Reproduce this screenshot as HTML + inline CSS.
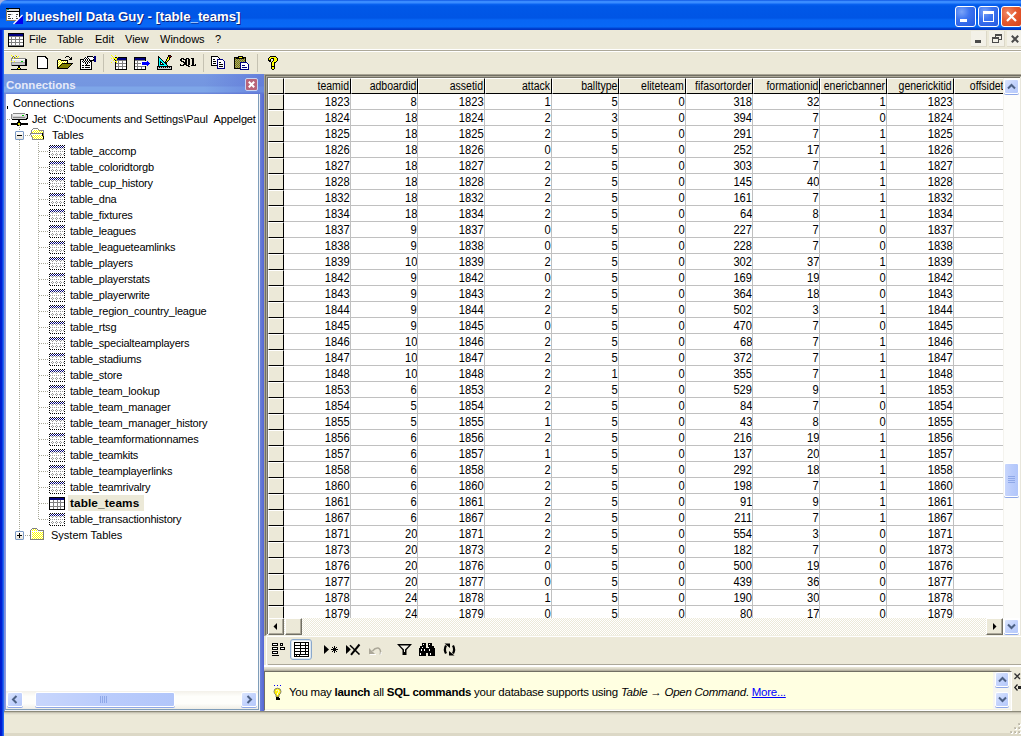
<!DOCTYPE html><html><head><meta charset="utf-8"><title>blueshell Data Guy</title><style>
*{margin:0;padding:0;box-sizing:border-box}
html,body{width:1021px;height:736px;overflow:hidden;background:#ECE9D8;font-family:"Liberation Sans",sans-serif;font-size:11px;color:#000}
.a{position:absolute}
.t{position:absolute;white-space:nowrap;line-height:16px}
svg{position:absolute;overflow:visible}
</style></head><body><div class="a" style="left:0;top:0;width:8px;height:8px;background:#A4B0DE"></div><div class="a" style="left:0;top:0;width:1021px;height:30px;border-top-left-radius:7px 6px;background:linear-gradient(180deg,#0044DA 0px,#3A8CFF 1px,#3A8CFF 3px,#0A64F2 4px,#0058E8 6px,#0055E5 18px,#0866F4 20px,#0868F6 27px,#0046D4 28px,#0030C0 30px)"></div><svg style="left:6px;top:8px" width="17" height="16" viewBox="0 0 17 16" shape-rendering="crispEdges"><rect x="0" y="0" width="14" height="1" fill="#000"/><rect x="0" y="1" width="14" height="2" fill="#D8D8D8"/><rect x="1" y="1" width="2" height="1" fill="#0A8A8A"/><rect x="0" y="3" width="14" height="1" fill="#000"/><rect x="0" y="4" width="13" height="8" fill="#fff"/><rect x="0" y="1" width="1" height="12" fill="#8B7B5B"/><rect x="0" y="12" width="12" height="1" fill="#8B7B5B"/><rect x="13" y="0" width="1" height="11" fill="#000"/><rect x="2" y="6" width="3" height="1" fill="#444"/><rect x="5" y="6" width="2" height="1" fill="#ccc"/><rect x="10" y="6" width="2" height="1" fill="#444"/><rect x="2" y="8" width="2" height="1" fill="#444"/><rect x="10" y="8" width="1" height="1" fill="#444"/><rect x="2" y="10" width="3" height="1" fill="#444"/><rect x="6" y="10" width="1" height="1" fill="#444"/><rect x="10" y="10" width="2" height="1" fill="#444"/><polygon points="16.5,7 16.5,16 7.5,16" fill="#0000F0"/><line x1="7.5" y1="16" x2="16.5" y2="7" stroke="#fff" stroke-width="1.2" shape-rendering="auto"/></svg><div class="t" style="left:25px;top:8px;line-height:17px;font-size:13.2px;letter-spacing:0px;font-weight:bold;color:#fff;text-shadow:1px 1px 0 #0A1E7A">blueshell Data Guy - [table_teams]</div><div class="a" style="left:955px;top:6px;width:21px;height:21px;border:1px solid #fff;border-radius:3px;background:radial-gradient(circle at 30% 25%,#7BA4F8 0,#3D74F0 40%,#2258E0 100%)"><div class="a" style="left:4px;top:12px;width:7px;height:3px;background:#fff"></div></div><div class="a" style="left:978px;top:6px;width:21px;height:21px;border:1px solid #fff;border-radius:3px;background:radial-gradient(circle at 30% 25%,#7BA4F8 0,#3D74F0 40%,#2258E0 100%)"><div class="a" style="left:4px;top:4px;width:11px;height:11px;border:1px solid #fff;border-top-width:3px"></div></div><div class="a" style="left:1001px;top:6px;width:21px;height:21px;border:1px solid #fff;border-radius:3px;background:radial-gradient(circle at 30% 30%,#F08A6A 0,#E55A30 45%,#D8421A 100%)"><svg style="left:3px;top:3px" width="13" height="13" viewBox="0 0 13 13"><path d="M2 2L11 11M11 2L2 11" stroke="#fff" stroke-width="2.2"/></svg></div><div class="a" style="left:0;top:30px;width:4px;height:706px;background:linear-gradient(90deg,#0018C8 0,#0020D8 2px,#1A62F0 3px,#2A6CF4 4px)"></div><div class="a" style="left:4px;top:49px;width:1017px;height:1px;background:#fff"></div><div class="a" style="left:4px;top:50px;width:1017px;height:1px;background:#ACA899"></div><div class="a" style="left:4px;top:51px;width:1017px;height:1px;background:#fff"></div><svg style="left:8px;top:33px" width="16" height="14" viewBox="0 0 16 14"><rect x="0" y="0" width="16" height="14" fill="#000"/><rect x="1" y="1" width="14" height="2" fill="#000080"/><rect x="1" y="3" width="14" height="10" fill="#808080"/><rect x="1" y="4" width="2" height="2" fill="#fff"/><rect x="4" y="4" width="3" height="2" fill="#fff"/><rect x="8" y="4" width="3" height="2" fill="#fff"/><rect x="12" y="4" width="3" height="2" fill="#fff"/><rect x="1" y="7" width="2" height="2" fill="#fff"/><rect x="4" y="7" width="3" height="2" fill="#fff"/><rect x="8" y="7" width="3" height="2" fill="#fff"/><rect x="12" y="7" width="3" height="2" fill="#fff"/><rect x="1" y="10" width="2" height="2" fill="#fff"/><rect x="4" y="10" width="3" height="2" fill="#fff"/><rect x="8" y="10" width="3" height="2" fill="#fff"/><rect x="12" y="10" width="3" height="2" fill="#fff"/></svg><div class="t" style="left:29px;top:31px">File</div><div class="t" style="left:57px;top:31px">Table</div><div class="t" style="left:95px;top:31px">Edit</div><div class="t" style="left:125px;top:31px">View</div><div class="t" style="left:160px;top:31px">Windows</div><div class="t" style="left:215px;top:31px">?</div><div class="a" style="left:971px;top:31px;width:16px;height:16px;background:#F3F1E8;border-right:1px solid #DCD8C8;border-bottom:1px solid #DCD8C8"></div><div class="a" style="left:975px;top:40px;width:6px;height:3px;background:#4A4A4A"></div><div class="a" style="left:989px;top:31px;width:16px;height:16px;background:#F3F1E8;border-right:1px solid #DCD8C8;border-bottom:1px solid #DCD8C8"></div><div class="a" style="left:995px;top:34px;width:7px;height:6px;border:1px solid #4A4A4A;border-top-width:2px"></div><div class="a" style="left:992px;top:37px;width:7px;height:6px;border:1px solid #4A4A4A;border-top-width:2px;background:#F3F1E8"></div><div class="a" style="left:1007px;top:31px;width:16px;height:16px;background:#F3F1E8;border-right:1px solid #DCD8C8;border-bottom:1px solid #DCD8C8"></div><svg style="left:1011px;top:35px" width="8" height="8" viewBox="0 0 8 8"><path d="M0.8 0.8L7.2 7.2M7.2 0.8L0.8 7.2" stroke="#4A4A4A" stroke-width="2"/></svg><div class="a" style="left:103px;top:54px;width:1px;height:18px;background:#C5C2B2"></div><div class="a" style="left:203px;top:54px;width:1px;height:18px;background:#C5C2B2"></div><div class="a" style="left:257px;top:54px;width:1px;height:18px;background:#C5C2B2"></div><svg style="left:11px;top:55px" width="17" height="16" viewBox="0 0 17 16" shape-rendering="crispEdges"><rect x="0" y="3" width="15" height="8" fill="#888"/><rect x="14" y="4" width="2" height="7" fill="#000"/><rect x="1" y="10" width="15" height="1" fill="#000"/><rect x="1" y="4" width="13" height="6" fill="#E8E8E8"/><rect x="1" y="4" width="13" height="1" fill="#fff"/><rect x="1" y="7" width="13" height="1" fill="#A0A0A0"/><rect x="1" y="8" width="13" height="2" fill="#C8C8C8"/><rect x="10" y="6" width="2" height="1" fill="#00C000"/><rect x="7" y="11" width="2" height="3" fill="#000"/><rect x="0" y="14" width="16" height="1" fill="#000"/><rect x="6" y="13" width="4" height="2" fill="#000"/><rect x="7" y="13" width="2" height="1" fill="#FFFF00"/><rect x="0" y="0" width="1" height="1" fill="#FFFF00"/><rect x="1" y="1" width="1" height="1" fill="#FFFF00"/><rect x="4" y="0" width="1" height="1" fill="#FFFF00"/><rect x="4" y="2" width="1" height="1" fill="#FFFF00"/><rect x="7" y="1" width="1" height="1" fill="#FFFF00"/><rect x="6" y="2" width="1" height="1" fill="#FFFF00"/><rect x="0" y="6" width="1" height="1" fill="#FFFF00"/><rect x="3" y="6" width="1" height="1" fill="#FFFF00"/><rect x="2" y="3" width="1" height="1" fill="#FFFF00"/><rect x="2" y="1" width="1" height="1" fill="#606060"/><rect x="5" y="1" width="1" height="1" fill="#606060"/><rect x="3" y="2" width="1" height="1" fill="#606060"/><rect x="1" y="2" width="1" height="1" fill="#606060"/></svg><svg style="left:37px;top:56px" width="11" height="13" viewBox="0 0 11 13" shape-rendering="crispEdges"><rect x="0" y="0" width="9" height="13" fill="#000"/><rect x="9" y="2" width="2" height="11" fill="#000"/><rect x="8" y="1" width="2" height="1" fill="#000"/><rect x="1" y="1" width="7" height="11" fill="#fff"/><rect x="8" y="3" width="2" height="9" fill="#fff"/><rect x="8" y="2" width="1" height="1" fill="#fff"/></svg><svg style="left:56px;top:54px" width="18" height="16" viewBox="0 0 18 16" shape-rendering="crispEdges"><path fill="#000" d="M10 2h3v1h-3zM9 3h1v1h-1zM13 3h1v1h-1zM15 3h1v1h-1zM14 4h2v1h-2zM2 5h3v1h-3zM13 5h3v1h-3zM1 6h1v1h-1zM5 6h7v1h-7zM1 7h1v1h-1zM11 7h1v1h-1zM1 8h1v1h-1zM11 8h1v1h-1zM1 9h1v1h-1zM6 9h11v1h-11zM1 10h1v1h-1zM5 10h1v1h-1zM15 10h1v1h-1zM1 11h1v1h-1zM4 11h1v1h-1zM14 11h1v1h-1zM1 12h1v1h-1zM3 12h1v1h-1zM13 12h1v1h-1zM1 13h2v1h-2zM12 13h1v1h-1zM1 14h11v1h-11z"/><path fill="#FFFF00" d="M2 6h1v1h-1zM4 6h1v1h-1zM3 7h1v1h-1zM5 7h1v1h-1zM7 7h1v1h-1zM9 7h1v1h-1zM2 8h1v1h-1zM4 8h1v1h-1zM6 8h1v1h-1zM8 8h1v1h-1zM10 8h1v1h-1zM3 9h1v1h-1zM5 9h1v1h-1zM2 10h1v1h-1zM4 10h1v1h-1zM3 11h1v1h-1zM2 12h1v1h-1z"/><path fill="#FFFFFF" d="M3 6h1v1h-1zM2 7h1v1h-1zM4 7h1v1h-1zM6 7h1v1h-1zM8 7h1v1h-1zM10 7h1v1h-1zM3 8h1v1h-1zM5 8h1v1h-1zM7 8h1v1h-1zM9 8h1v1h-1zM2 9h1v1h-1zM4 9h1v1h-1zM3 10h1v1h-1zM2 11h1v1h-1z"/><path fill="#808000" d="M6 10h9v1h-9zM5 11h9v1h-9zM4 12h9v1h-9zM3 13h9v1h-9z"/></svg><svg style="left:78px;top:53px" width="18" height="17" viewBox="0 0 18 17" shape-rendering="crispEdges"><path fill="#fff" d="M8 3h1v1h-1zM8 4h1v1h-1zM10 4h5v1h-5zM7 5h1v1h-1zM9 5h1v1h-1zM11 5h5v1h-5zM6 6h1v1h-1zM8 6h1v1h-1zM10 6h1v1h-1zM12 6h3v1h-3zM3 7h2v1h-2zM6 7h1v1h-1zM8 7h1v1h-1zM10 7h1v1h-1zM3 8h1v1h-1zM5 8h1v1h-1zM7 8h1v1h-1zM9 8h1v1h-1zM11 8h1v1h-1zM3 9h2v1h-2zM6 9h1v1h-1zM8 9h1v1h-1zM10 9h1v1h-1zM12 9h1v1h-1zM3 10h4v1h-4zM8 10h1v1h-1zM10 10h3v1h-3zM3 11h5v1h-5zM9 11h4v1h-4zM3 12h1v1h-1zM6 12h1v1h-1zM12 12h1v1h-1zM3 13h10v1h-10zM3 14h1v1h-1zM6 14h1v1h-1zM12 14h1v1h-1zM3 15h10v1h-10z"/><path fill="#000" d="M9 3h6v1h-6zM7 4h1v1h-1zM9 4h1v1h-1zM15 4h1v1h-1zM6 5h1v1h-1zM8 5h1v1h-1zM10 5h1v1h-1zM2 6h4v1h-4zM7 6h1v1h-1zM9 6h1v1h-1zM11 6h1v1h-1zM15 6h1v1h-1zM2 7h1v1h-1zM5 7h1v1h-1zM7 7h1v1h-1zM9 7h1v1h-1zM11 7h5v1h-5zM2 8h1v1h-1zM4 8h1v1h-1zM6 8h1v1h-1zM8 8h1v1h-1zM10 8h1v1h-1zM12 8h2v1h-2zM2 9h1v1h-1zM5 9h1v1h-1zM7 9h1v1h-1zM9 9h1v1h-1zM11 9h1v1h-1zM13 9h1v1h-1zM2 10h1v1h-1zM7 10h1v1h-1zM9 10h1v1h-1zM13 10h1v1h-1zM2 11h1v1h-1zM8 11h1v1h-1zM13 11h1v1h-1zM2 12h1v1h-1zM4 12h2v1h-2zM7 12h5v1h-5zM13 12h1v1h-1zM2 13h1v1h-1zM13 13h1v1h-1zM2 14h1v1h-1zM4 14h2v1h-2zM7 14h5v1h-5zM13 14h1v1h-1zM2 15h1v1h-1zM13 15h1v1h-1zM2 16h12v1h-12z"/><path fill="#000080" d="M16 3h2v1h-2zM16 4h2v1h-2zM16 5h2v1h-2zM16 6h2v1h-2zM16 7h2v1h-2zM16 8h2v1h-2z"/></svg><svg style="left:108px;top:53px" width="20" height="17" viewBox="0 0 20 17" shape-rendering="crispEdges"><path fill="#FFFF00" d="M3 2h1v1h-1zM7 2h1v1h-1zM4 3h1v1h-1zM5 4h1v1h-1zM9 4h1v1h-1zM3 5h1v1h-1zM5 5h4v1h-4zM7 6h2v1h-2zM5 7h1v1h-1zM7 8h2v1h-2zM3 9h1v1h-1zM8 9h1v1h-1z"/><path fill="#000" d="M7 4h2v1h-2zM10 4h9v1h-9zM18 5h1v1h-1zM6 6h1v1h-1zM18 6h1v1h-1zM7 7h1v1h-1zM18 7h1v1h-1zM18 8h1v1h-1zM7 9h1v1h-1zM18 9h1v1h-1zM7 10h1v1h-1zM18 10h1v1h-1zM7 11h1v1h-1zM18 11h1v1h-1zM7 12h1v1h-1zM18 12h1v1h-1zM7 13h1v1h-1zM18 13h1v1h-1zM7 14h1v1h-1zM18 14h1v1h-1zM7 15h1v1h-1zM18 15h1v1h-1zM7 16h12v1h-12z"/><path fill="#000080" d="M9 5h9v1h-9zM9 6h9v1h-9z"/><path fill="#808080" d="M8 7h10v1h-10zM10 8h1v1h-1zM14 8h1v1h-1zM10 9h1v1h-1zM14 9h1v1h-1zM8 10h10v1h-10zM10 11h1v1h-1zM14 11h1v1h-1zM10 12h1v1h-1zM14 12h1v1h-1zM8 13h10v1h-10zM10 14h1v1h-1zM14 14h1v1h-1zM10 15h1v1h-1zM14 15h1v1h-1z"/><path fill="#fff" d="M9 8h1v1h-1zM11 8h3v1h-3zM15 8h3v1h-3zM9 9h1v1h-1zM11 9h3v1h-3zM15 9h3v1h-3zM8 11h2v1h-2zM11 11h3v1h-3zM15 11h3v1h-3zM8 12h2v1h-2zM11 12h3v1h-3zM15 12h3v1h-3zM8 14h2v1h-2zM11 14h3v1h-3zM15 14h3v1h-3zM8 15h2v1h-2zM11 15h3v1h-3zM15 15h3v1h-3z"/></svg><svg style="left:132px;top:53px" width="18" height="17" viewBox="0 0 18 17" shape-rendering="crispEdges"><path fill="#000" d="M2 4h12v1h-12zM2 5h1v1h-1zM13 5h1v1h-1zM2 6h1v1h-1zM13 6h1v1h-1zM2 7h1v1h-1zM13 7h1v1h-1zM2 8h1v1h-1zM2 9h1v1h-1zM2 10h1v1h-1zM2 11h1v1h-1zM2 12h1v1h-1zM2 13h1v1h-1zM13 13h1v1h-1zM2 14h1v1h-1zM13 14h1v1h-1zM2 15h1v1h-1zM13 15h1v1h-1zM2 16h12v1h-12z"/><path fill="#000080" d="M3 5h10v1h-10zM3 6h10v1h-10z"/><path fill="#808080" d="M3 7h10v1h-10zM5 8h1v1h-1zM5 9h1v1h-1zM3 10h6v1h-6zM5 11h1v1h-1zM5 12h1v1h-1zM3 13h10v1h-10zM5 14h1v1h-1zM9 14h1v1h-1zM5 15h1v1h-1zM9 15h1v1h-1z"/><path fill="#fff" d="M3 8h2v1h-2zM6 8h8v1h-8zM3 9h2v1h-2zM6 9h4v1h-4zM9 10h1v1h-1zM3 11h2v1h-2zM6 11h4v1h-4zM3 12h2v1h-2zM6 12h8v1h-8zM3 14h2v1h-2zM6 14h3v1h-3zM10 14h3v1h-3zM3 15h2v1h-2zM6 15h3v1h-3zM10 15h3v1h-3z"/><path fill="#0000FF" d="M15 8h1v1h-1zM10 9h7v1h-7zM10 10h8v1h-8zM10 11h7v1h-7zM15 12h1v1h-1z"/></svg><svg style="left:155px;top:53px" width="18" height="17" viewBox="0 0 18 17" shape-rendering="crispEdges"><path fill="#000" d="M13 2h3v1h-3zM3 3h1v1h-1zM13 3h1v1h-1zM16 3h1v1h-1zM3 4h2v1h-2zM12 4h1v1h-1zM14 4h2v1h-2zM3 5h1v1h-1zM5 5h1v1h-1zM12 5h1v1h-1zM14 5h1v1h-1zM3 6h1v1h-1zM6 6h1v1h-1zM11 6h1v1h-1zM14 6h1v1h-1zM3 7h1v1h-1zM7 7h1v1h-1zM11 7h1v1h-1zM13 7h1v1h-1zM3 8h1v1h-1zM5 8h1v1h-1zM8 8h1v1h-1zM10 8h1v1h-1zM12 8h1v1h-1zM3 9h1v1h-1zM5 9h2v1h-2zM9 9h3v1h-3zM3 10h1v1h-1zM5 10h1v1h-1zM7 10h1v1h-1zM10 10h2v1h-2zM3 11h1v1h-1zM5 11h4v1h-4zM11 11h1v1h-1zM3 12h1v1h-1zM12 12h1v1h-1zM2 13h15v1h-15zM2 14h1v1h-1zM4 14h1v1h-1zM6 14h1v1h-1zM8 14h1v1h-1zM10 14h1v1h-1zM12 14h1v1h-1zM14 14h1v1h-1zM16 14h1v1h-1zM2 15h1v1h-1zM16 15h1v1h-1zM2 16h15v1h-15z"/><path fill="#A00000" d="M14 3h2v1h-2z"/><path fill="#FFFF00" d="M13 4h1v1h-1zM13 5h1v1h-1zM12 6h2v1h-2zM12 7h1v1h-1zM11 8h1v1h-1z"/><path fill="#00FFFF" d="M4 5h1v1h-1zM4 6h2v1h-2zM4 7h3v1h-3zM4 8h1v1h-1zM6 8h2v1h-2zM4 9h1v1h-1zM7 9h2v1h-2zM4 10h1v1h-1zM8 10h2v1h-2zM4 11h1v1h-1zM9 11h2v1h-2zM4 12h8v1h-8z"/><path fill="#fff" d="M6 10h1v1h-1z"/><path fill="#C8C8C8" d="M3 14h1v1h-1zM5 14h1v1h-1zM7 14h1v1h-1zM9 14h1v1h-1zM11 14h1v1h-1zM13 14h1v1h-1zM15 14h1v1h-1zM3 15h13v1h-13z"/></svg><svg style="left:180px;top:58px" width="17" height="9" viewBox="0 0 17 9" shape-rendering="crispEdges"><g fill='#000'><rect x='1' y='0' width='1' height='1'/><rect x='2' y='0' width='1' height='1'/><rect x='3' y='0' width='1' height='1'/><rect x='0' y='1' width='1' height='1'/><rect x='1' y='1' width='1' height='1'/><rect x='3' y='1' width='1' height='1'/><rect x='4' y='1' width='1' height='1'/><rect x='0' y='2' width='1' height='1'/><rect x='1' y='2' width='1' height='1'/><rect x='1' y='3' width='1' height='1'/><rect x='2' y='3' width='1' height='1'/><rect x='3' y='3' width='1' height='1'/><rect x='3' y='4' width='1' height='1'/><rect x='4' y='4' width='1' height='1'/><rect x='4' y='5' width='1' height='1'/><rect x='0' y='6' width='1' height='1'/><rect x='3' y='6' width='1' height='1'/><rect x='4' y='6' width='1' height='1'/><rect x='0' y='7' width='1' height='1'/><rect x='1' y='7' width='1' height='1'/><rect x='2' y='7' width='1' height='1'/><rect x='3' y='7' width='1' height='1'/><rect x='6' y='0' width='1' height='1'/><rect x='7' y='0' width='1' height='1'/><rect x='8' y='0' width='1' height='1'/><rect x='5' y='1' width='1' height='1'/><rect x='6' y='1' width='1' height='1'/><rect x='8' y='1' width='1' height='1'/><rect x='9' y='1' width='1' height='1'/><rect x='5' y='2' width='1' height='1'/><rect x='6' y='2' width='1' height='1'/><rect x='8' y='2' width='1' height='1'/><rect x='9' y='2' width='1' height='1'/><rect x='5' y='3' width='1' height='1'/><rect x='6' y='3' width='1' height='1'/><rect x='8' y='3' width='1' height='1'/><rect x='9' y='3' width='1' height='1'/><rect x='5' y='4' width='1' height='1'/><rect x='6' y='4' width='1' height='1'/><rect x='8' y='4' width='1' height='1'/><rect x='9' y='4' width='1' height='1'/><rect x='5' y='5' width='1' height='1'/><rect x='6' y='5' width='1' height='1'/><rect x='8' y='5' width='1' height='1'/><rect x='9' y='5' width='1' height='1'/><rect x='5' y='6' width='1' height='1'/><rect x='6' y='6' width='1' height='1'/><rect x='8' y='6' width='1' height='1'/><rect x='9' y='6' width='1' height='1'/><rect x='6' y='7' width='1' height='1'/><rect x='7' y='7' width='1' height='1'/><rect x='8' y='7' width='1' height='1'/><rect x='8' y='8' width='1' height='1'/><rect x='9' y='8' width='1' height='1'/><rect x='11' y='0' width='1' height='1'/><rect x='12' y='0' width='1' height='1'/><rect x='13' y='0' width='1' height='1'/><rect x='12' y='1' width='1' height='1'/><rect x='13' y='1' width='1' height='1'/><rect x='12' y='2' width='1' height='1'/><rect x='13' y='2' width='1' height='1'/><rect x='12' y='3' width='1' height='1'/><rect x='13' y='3' width='1' height='1'/><rect x='12' y='4' width='1' height='1'/><rect x='13' y='4' width='1' height='1'/><rect x='12' y='5' width='1' height='1'/><rect x='13' y='5' width='1' height='1'/><rect x='12' y='6' width='1' height='1'/><rect x='13' y='6' width='1' height='1'/><rect x='15' y='6' width='1' height='1'/><rect x='11' y='7' width='1' height='1'/><rect x='12' y='7' width='1' height='1'/><rect x='13' y='7' width='1' height='1'/><rect x='14' y='7' width='1' height='1'/><rect x='15' y='7' width='1' height='1'/></g></svg><svg style="left:208px;top:53px" width="19" height="16" viewBox="0 0 19 16" shape-rendering="crispEdges"><path fill="#000" d="M3 3h7v1h-7zM3 4h1v1h-1zM10 4h1v1h-1zM3 5h1v1h-1zM11 5h1v1h-1zM3 6h1v1h-1zM5 6h2v1h-2zM3 7h1v1h-1zM3 8h1v1h-1zM5 8h3v1h-3zM3 9h1v1h-1zM11 9h2v1h-2zM3 10h1v1h-1zM5 10h3v1h-3zM3 11h1v1h-1zM11 11h4v1h-4zM3 12h6v1h-6zM11 13h4v1h-4z"/><path fill="#fff" d="M4 4h6v1h-6zM4 5h7v1h-7zM4 6h1v1h-1zM7 6h2v1h-2zM4 7h5v1h-5zM10 7h5v1h-5zM4 8h1v1h-1zM8 8h1v1h-1zM10 8h6v1h-6zM4 9h5v1h-5zM10 9h1v1h-1zM13 9h3v1h-3zM4 10h1v1h-1zM8 10h1v1h-1zM10 10h6v1h-6zM4 11h5v1h-5zM10 11h1v1h-1zM15 11h1v1h-1zM10 12h6v1h-6zM10 13h1v1h-1zM15 13h1v1h-1zM10 14h6v1h-6z"/><path fill="#000080" d="M9 6h6v1h-6zM9 7h1v1h-1zM15 7h1v1h-1zM9 8h1v1h-1zM16 8h1v1h-1zM9 9h1v1h-1zM16 9h1v1h-1zM9 10h1v1h-1zM16 10h1v1h-1zM9 11h1v1h-1zM16 11h1v1h-1zM9 12h1v1h-1zM16 12h1v1h-1zM9 13h1v1h-1zM16 13h1v1h-1zM9 14h1v1h-1zM16 14h1v1h-1zM9 15h8v1h-8z"/></svg><svg style="left:233px;top:53px" width="18" height="17" viewBox="0 0 18 17" shape-rendering="crispEdges"><path fill="#000" d="M5 3h5v1h-5zM1 4h5v1h-5zM9 4h4v1h-4zM1 5h1v1h-1zM3 5h8v1h-8zM12 5h1v1h-1zM1 6h1v1h-1zM12 6h1v1h-1zM1 7h1v1h-1zM12 7h1v1h-1zM1 8h1v1h-1zM12 8h1v1h-1zM1 9h1v1h-1zM1 10h1v1h-1zM1 11h1v1h-1zM1 12h1v1h-1zM1 13h1v1h-1zM1 14h1v1h-1zM1 15h6v1h-6z"/><path fill="#FFFF00" d="M6 4h3v1h-3z"/><path fill="#808000" d="M2 5h1v1h-1zM11 5h1v1h-1zM2 6h1v1h-1zM4 6h1v1h-1zM6 6h1v1h-1zM8 6h1v1h-1zM10 6h1v1h-1zM3 7h1v1h-1zM5 7h1v1h-1zM7 7h1v1h-1zM9 7h1v1h-1zM11 7h1v1h-1zM2 8h1v1h-1zM4 8h1v1h-1zM6 8h1v1h-1zM8 8h1v1h-1zM10 8h1v1h-1zM3 9h1v1h-1zM5 9h1v1h-1zM2 10h1v1h-1zM4 10h1v1h-1zM6 10h1v1h-1zM3 11h1v1h-1zM5 11h1v1h-1zM2 12h1v1h-1zM4 12h1v1h-1zM6 12h1v1h-1zM3 13h1v1h-1zM5 13h1v1h-1zM2 14h1v1h-1zM4 14h1v1h-1zM6 14h1v1h-1z"/><path fill="#A0A080" d="M3 6h1v1h-1zM5 6h1v1h-1zM7 6h1v1h-1zM9 6h1v1h-1zM11 6h1v1h-1zM2 7h1v1h-1zM4 7h1v1h-1zM6 7h1v1h-1zM8 7h1v1h-1zM10 7h1v1h-1zM3 8h1v1h-1zM5 8h1v1h-1zM7 8h1v1h-1zM9 8h1v1h-1zM11 8h1v1h-1zM2 9h1v1h-1zM4 9h1v1h-1zM6 9h1v1h-1zM3 10h1v1h-1zM5 10h1v1h-1zM2 11h1v1h-1zM4 11h1v1h-1zM6 11h1v1h-1zM3 12h1v1h-1zM5 12h1v1h-1zM2 13h1v1h-1zM4 13h1v1h-1zM6 13h1v1h-1zM3 14h1v1h-1zM5 14h1v1h-1z"/><path fill="#000080" d="M7 9h7v1h-7zM7 10h1v1h-1zM14 10h1v1h-1zM7 11h1v1h-1zM15 11h1v1h-1zM7 12h1v1h-1zM9 12h3v1h-3zM15 12h1v1h-1zM7 13h1v1h-1zM15 13h1v1h-1zM7 14h1v1h-1zM9 14h5v1h-5zM15 14h1v1h-1zM7 15h1v1h-1zM15 15h1v1h-1zM7 16h9v1h-9z"/><path fill="#fff" d="M8 10h6v1h-6zM8 11h7v1h-7zM8 12h1v1h-1zM12 12h3v1h-3zM8 13h7v1h-7zM8 14h1v1h-1zM14 14h1v1h-1zM8 15h7v1h-7z"/></svg><svg style="left:262px;top:56px" width="17" height="14" viewBox="0 0 17 14" shape-rendering="crispEdges"><path fill="#000" d="M8 0h6v1h-6zM7 1h1v1h-1zM14 1h1v1h-1zM6 2h1v1h-1zM9 2h3v1h-3zM15 2h1v1h-1zM6 3h1v1h-1zM8 3h1v1h-1zM11 3h1v1h-1zM15 3h1v1h-1zM6 4h3v1h-3zM11 4h1v1h-1zM15 4h1v1h-1zM7 5h2v1h-2zM10 5h1v1h-1zM14 5h1v1h-1zM9 6h1v1h-1zM12 6h2v1h-2zM9 7h1v1h-1zM12 7h1v1h-1zM9 8h1v1h-1zM12 8h1v1h-1zM9 9h1v1h-1zM12 9h1v1h-1zM9 10h4v1h-4zM9 11h1v1h-1zM12 11h1v1h-1zM9 12h1v1h-1zM12 12h1v1h-1zM10 13h2v1h-2z"/><path fill="#FFFF00" d="M8 1h6v1h-6zM7 2h2v1h-2zM12 2h3v1h-3zM7 3h1v1h-1zM12 3h3v1h-3zM12 4h3v1h-3zM11 5h3v1h-3zM10 6h2v1h-2zM10 7h2v1h-2zM10 8h2v1h-2zM10 9h2v1h-2zM10 11h2v1h-2zM10 12h2v1h-2z"/><path fill="#fff" d="M9 3h2v1h-2z"/></svg><div class="a" style="left:4px;top:74px;width:260px;height:637px;background:linear-gradient(90deg,#7B8EDC 0,#7C90DE 250px,#7088DC 255px,#5566D4 260px)"></div><div class="a" style="left:4px;top:74px;width:260px;height:20px;background:linear-gradient(180deg,#7EA2EA 0,#7698E2 1px,#7496E0 12px,#7EA6E8 13px,#7EA6E8 18px,#6C88DA 19px,#6C88DA 20px)"></div><div class="a" style="left:4px;top:74px;width:260px;height:20px;background:linear-gradient(90deg,rgba(120,150,230,0) 0,rgba(120,150,230,0) 200px,rgba(80,96,210,0.45) 260px)"></div><div class="t" style="left:6px;top:77px;font-weight:bold;font-size:11.5px;color:#E6EAF8">Connections</div><div class="a" style="left:245px;top:78px;width:13px;height:13px;border:1px solid #C8D4F4;border-radius:2px;background:#B8647A"></div><svg style="left:248px;top:81px" width="7" height="7" viewBox="0 0 7 7" shape-rendering="crispEdges"><path d="M0.8 0.8L6.2 6.2M6.2 0.8L0.8 6.2" stroke="#fff" stroke-width="2" shape-rendering="auto"/></svg><div class="a" style="left:5px;top:94px;width:254px;height:616px;background:#fff;border:1px solid #7F9DB9;border-left-color:#8A9AE0;border-top:0"></div><div class="a" style="left:5px;top:710px;width:255px;height:1px;background:#EEF0F4"></div><div class="a" style="left:259px;top:94px;width:1px;height:617px;background:#EEF0F4"></div><div class="a" style="left:7px;top:106px;width:1px;height:3px;background:#000"></div><div class="t" style="left:13px;top:95px">Connections</div><div class="a" style="left:7px;top:119px;width:4px;height:1px;background:repeating-linear-gradient(90deg,#A8A898 0,#A8A898 1px,transparent 1px,transparent 2px)"></div><svg style="left:11px;top:113px" width="17" height="13" viewBox="0 0 17 13" shape-rendering="crispEdges"><path fill="#888" d="M2 0h12v1h-12zM0 1h1v1h-1zM0 2h1v1h-1zM0 3h1v1h-1zM0 4h1v1h-1zM2 4h12v1h-12zM0 5h1v1h-1z"/><path fill="#D0D0D0" d="M1 1h1v1h-1zM14 1h1v1h-1zM1 2h1v1h-1zM14 2h2v1h-2zM1 3h15v1h-15zM1 4h1v1h-1zM14 4h2v1h-2zM1 5h14v1h-14z"/><path fill="#EEEEEE" d="M2 1h12v1h-12zM2 2h9v1h-9zM13 2h1v1h-1z"/><path fill="#000" d="M15 1h2v1h-2zM16 2h1v1h-1zM16 3h1v1h-1zM16 4h1v1h-1zM15 5h2v1h-2zM1 6h15v1h-15zM7 7h2v1h-2zM7 8h2v1h-2zM6 9h4v1h-4zM0 10h7v1h-7zM9 10h8v1h-8zM0 11h7v1h-7zM9 11h8v1h-8zM6 12h4v1h-4z"/><path fill="#00C000" d="M11 2h2v1h-2z"/><path fill="#E0E000" d="M7 10h2v1h-2zM7 11h2v1h-2z"/></svg><div class="t" style="left:32px;top:111px;letter-spacing:-0.15px">Jet<span style="display:inline-block;width:7px"></span>C:\Documents and Settings\Paul &nbsp;Appelget</div><div class="a" style="left:19px;top:125px;width:1px;height:5px;background:repeating-linear-gradient(180deg,#A8A898 0,#A8A898 1px,transparent 1px,transparent 2px)"></div><div class="a" style="left:15px;top:131px;width:9px;height:9px;border:1px solid #7B9AC6;border-radius:1px;background:linear-gradient(180deg,#fff 0,#E8E4D8 100%)"></div><div class="a" style="left:17px;top:135px;width:5px;height:1px;background:#000"></div><div class="a" style="left:25px;top:135px;width:5px;height:1px;background:repeating-linear-gradient(90deg,#A8A898 0,#A8A898 1px,transparent 1px,transparent 2px)"></div><svg style="left:30px;top:128px" width="15" height="12" viewBox="0 0 15 12" shape-rendering="crispEdges"><path fill="#888" d="M3 0h5v1h-5zM2 1h1v1h-1zM8 1h1v1h-1zM1 2h1v1h-1zM9 2h5v1h-5zM1 3h1v1h-1zM13 3h1v1h-1zM1 4h1v1h-1zM13 4h1v1h-1zM0 5h12v1h-12zM13 5h1v1h-1zM0 6h1v1h-1zM13 6h1v1h-1zM1 7h1v1h-1zM13 7h1v1h-1zM1 8h1v1h-1zM2 9h1v1h-1zM2 10h1v1h-1zM2 11h12v1h-12z"/><path fill="#fff" d="M3 1h5v1h-5zM2 2h1v1h-1zM1 6h11v1h-11z"/><path fill="#FFFFFF" d="M3 2h1v1h-1zM5 2h1v1h-1zM7 2h1v1h-1zM2 3h1v1h-1zM4 3h1v1h-1zM6 3h1v1h-1zM8 3h1v1h-1zM10 3h1v1h-1zM12 3h1v1h-1zM3 4h1v1h-1zM5 4h1v1h-1zM7 4h1v1h-1zM9 4h1v1h-1zM11 4h1v1h-1zM2 7h1v1h-1zM4 7h1v1h-1zM6 7h1v1h-1zM8 7h1v1h-1zM10 7h1v1h-1zM3 8h1v1h-1zM5 8h1v1h-1zM7 8h1v1h-1zM9 8h1v1h-1zM11 8h1v1h-1zM4 9h1v1h-1zM6 9h1v1h-1zM8 9h1v1h-1zM10 9h1v1h-1zM12 9h1v1h-1zM3 10h1v1h-1zM5 10h1v1h-1zM7 10h1v1h-1zM9 10h1v1h-1zM11 10h1v1h-1z"/><path fill="#FFFF00" d="M4 2h1v1h-1zM6 2h1v1h-1zM8 2h1v1h-1zM3 3h1v1h-1zM5 3h1v1h-1zM7 3h1v1h-1zM9 3h1v1h-1zM11 3h1v1h-1zM2 4h1v1h-1zM4 4h1v1h-1zM6 4h1v1h-1zM8 4h1v1h-1zM10 4h1v1h-1zM12 4h1v1h-1zM3 7h1v1h-1zM5 7h1v1h-1zM7 7h1v1h-1zM9 7h1v1h-1zM11 7h1v1h-1zM2 8h1v1h-1zM4 8h1v1h-1zM6 8h1v1h-1zM8 8h1v1h-1zM10 8h1v1h-1zM12 8h1v1h-1zM3 9h1v1h-1zM5 9h1v1h-1zM7 9h1v1h-1zM9 9h1v1h-1zM11 9h1v1h-1zM4 10h1v1h-1zM6 10h1v1h-1zM8 10h1v1h-1zM10 10h1v1h-1zM12 10h1v1h-1z"/><path fill="#000" d="M12 5h1v1h-1zM12 6h1v1h-1zM12 7h1v1h-1zM13 8h1v1h-1zM13 9h1v1h-1zM13 10h1v1h-1z"/></svg><div class="t" style="left:52px;top:127px">Tables</div><div class="a" style="left:38px;top:142px;width:1px;height:377px;background:repeating-linear-gradient(180deg,#A8A898 0,#A8A898 1px,transparent 1px,transparent 2px)"></div><div class="a" style="left:19px;top:140px;width:1px;height:395px;background:repeating-linear-gradient(180deg,#A8A898 0,#A8A898 1px,transparent 1px,transparent 2px)"></div><svg style="left:0;top:0" width="0" height="0"><defs><pattern id="pk" width="2" height="2" patternUnits="userSpaceOnUse"><rect width="1" height="1" fill="#000"/><rect x="1" y="1" width="1" height="1" fill="#000"/></pattern><pattern id="pb" width="2" height="2" patternUnits="userSpaceOnUse"><rect width="2" height="2" fill="#fff"/><rect width="1" height="1" fill="#0000C0"/><rect x="1" y="1" width="1" height="1" fill="#0000C0"/></pattern><pattern id="pg" width="2" height="2" patternUnits="userSpaceOnUse"><rect width="1" height="1" fill="#B0B0B0"/></pattern></defs></svg><div class="a" style="left:39px;top:151px;width:10px;height:1px;background:repeating-linear-gradient(90deg,#A8A898 0,#A8A898 1px,transparent 1px,transparent 2px)"></div><svg style="left:47px;top:143px" width="18" height="15" viewBox="0 0 18 15" shape-rendering="crispEdges"><path fill="#000" d="M3 2h1v1h-1zM5 2h1v1h-1zM7 2h1v1h-1zM9 2h1v1h-1zM11 2h1v1h-1zM13 2h1v1h-1zM15 2h1v1h-1zM17 2h1v1h-1zM2 3h1v1h-1zM17 4h1v1h-1zM2 5h1v1h-1zM17 6h1v1h-1zM2 7h1v1h-1zM17 8h1v1h-1zM2 9h1v1h-1zM17 10h1v1h-1zM2 11h1v1h-1zM17 12h1v1h-1zM2 13h1v1h-1zM3 14h1v1h-1zM5 14h1v1h-1zM7 14h1v1h-1zM9 14h1v1h-1zM11 14h1v1h-1zM13 14h1v1h-1zM15 14h1v1h-1zM17 14h1v1h-1z"/><path fill="#000080" d="M4 3h1v1h-1zM6 3h1v1h-1zM8 3h1v1h-1zM10 3h1v1h-1zM12 3h1v1h-1zM14 3h1v1h-1zM16 3h1v1h-1zM3 4h1v1h-1zM5 4h1v1h-1zM7 4h1v1h-1zM9 4h1v1h-1zM11 4h1v1h-1zM13 4h1v1h-1zM15 4h1v1h-1z"/><path fill="#9A9A9A" d="M4 5h1v1h-1zM6 5h1v1h-1zM8 5h1v1h-1zM10 5h1v1h-1zM12 5h1v1h-1zM14 5h1v1h-1zM16 5h1v1h-1zM5 6h1v1h-1zM9 6h1v1h-1zM13 6h1v1h-1zM3 8h1v1h-1zM5 8h1v1h-1zM7 8h1v1h-1zM9 8h1v1h-1zM11 8h1v1h-1zM13 8h1v1h-1zM15 8h1v1h-1zM5 10h1v1h-1zM9 10h1v1h-1zM13 10h1v1h-1zM4 11h1v1h-1zM6 11h1v1h-1zM8 11h1v1h-1zM10 11h1v1h-1zM12 11h1v1h-1zM14 11h1v1h-1zM16 11h1v1h-1zM5 12h1v1h-1zM9 12h1v1h-1zM13 12h1v1h-1z"/></svg><div class="t" style="left:70px;top:143px;letter-spacing:-0.2px">table_accomp</div><div class="a" style="left:39px;top:167px;width:10px;height:1px;background:repeating-linear-gradient(90deg,#A8A898 0,#A8A898 1px,transparent 1px,transparent 2px)"></div><svg style="left:47px;top:159px" width="18" height="15" viewBox="0 0 18 15" shape-rendering="crispEdges"><path fill="#000" d="M3 2h1v1h-1zM5 2h1v1h-1zM7 2h1v1h-1zM9 2h1v1h-1zM11 2h1v1h-1zM13 2h1v1h-1zM15 2h1v1h-1zM17 2h1v1h-1zM2 3h1v1h-1zM17 4h1v1h-1zM2 5h1v1h-1zM17 6h1v1h-1zM2 7h1v1h-1zM17 8h1v1h-1zM2 9h1v1h-1zM17 10h1v1h-1zM2 11h1v1h-1zM17 12h1v1h-1zM2 13h1v1h-1zM3 14h1v1h-1zM5 14h1v1h-1zM7 14h1v1h-1zM9 14h1v1h-1zM11 14h1v1h-1zM13 14h1v1h-1zM15 14h1v1h-1zM17 14h1v1h-1z"/><path fill="#000080" d="M4 3h1v1h-1zM6 3h1v1h-1zM8 3h1v1h-1zM10 3h1v1h-1zM12 3h1v1h-1zM14 3h1v1h-1zM16 3h1v1h-1zM3 4h1v1h-1zM5 4h1v1h-1zM7 4h1v1h-1zM9 4h1v1h-1zM11 4h1v1h-1zM13 4h1v1h-1zM15 4h1v1h-1z"/><path fill="#9A9A9A" d="M4 5h1v1h-1zM6 5h1v1h-1zM8 5h1v1h-1zM10 5h1v1h-1zM12 5h1v1h-1zM14 5h1v1h-1zM16 5h1v1h-1zM5 6h1v1h-1zM9 6h1v1h-1zM13 6h1v1h-1zM3 8h1v1h-1zM5 8h1v1h-1zM7 8h1v1h-1zM9 8h1v1h-1zM11 8h1v1h-1zM13 8h1v1h-1zM15 8h1v1h-1zM5 10h1v1h-1zM9 10h1v1h-1zM13 10h1v1h-1zM4 11h1v1h-1zM6 11h1v1h-1zM8 11h1v1h-1zM10 11h1v1h-1zM12 11h1v1h-1zM14 11h1v1h-1zM16 11h1v1h-1zM5 12h1v1h-1zM9 12h1v1h-1zM13 12h1v1h-1z"/></svg><div class="t" style="left:70px;top:159px;letter-spacing:-0.2px">table_coloridtorgb</div><div class="a" style="left:39px;top:183px;width:10px;height:1px;background:repeating-linear-gradient(90deg,#A8A898 0,#A8A898 1px,transparent 1px,transparent 2px)"></div><svg style="left:47px;top:175px" width="18" height="15" viewBox="0 0 18 15" shape-rendering="crispEdges"><path fill="#000" d="M3 2h1v1h-1zM5 2h1v1h-1zM7 2h1v1h-1zM9 2h1v1h-1zM11 2h1v1h-1zM13 2h1v1h-1zM15 2h1v1h-1zM17 2h1v1h-1zM2 3h1v1h-1zM17 4h1v1h-1zM2 5h1v1h-1zM17 6h1v1h-1zM2 7h1v1h-1zM17 8h1v1h-1zM2 9h1v1h-1zM17 10h1v1h-1zM2 11h1v1h-1zM17 12h1v1h-1zM2 13h1v1h-1zM3 14h1v1h-1zM5 14h1v1h-1zM7 14h1v1h-1zM9 14h1v1h-1zM11 14h1v1h-1zM13 14h1v1h-1zM15 14h1v1h-1zM17 14h1v1h-1z"/><path fill="#000080" d="M4 3h1v1h-1zM6 3h1v1h-1zM8 3h1v1h-1zM10 3h1v1h-1zM12 3h1v1h-1zM14 3h1v1h-1zM16 3h1v1h-1zM3 4h1v1h-1zM5 4h1v1h-1zM7 4h1v1h-1zM9 4h1v1h-1zM11 4h1v1h-1zM13 4h1v1h-1zM15 4h1v1h-1z"/><path fill="#9A9A9A" d="M4 5h1v1h-1zM6 5h1v1h-1zM8 5h1v1h-1zM10 5h1v1h-1zM12 5h1v1h-1zM14 5h1v1h-1zM16 5h1v1h-1zM5 6h1v1h-1zM9 6h1v1h-1zM13 6h1v1h-1zM3 8h1v1h-1zM5 8h1v1h-1zM7 8h1v1h-1zM9 8h1v1h-1zM11 8h1v1h-1zM13 8h1v1h-1zM15 8h1v1h-1zM5 10h1v1h-1zM9 10h1v1h-1zM13 10h1v1h-1zM4 11h1v1h-1zM6 11h1v1h-1zM8 11h1v1h-1zM10 11h1v1h-1zM12 11h1v1h-1zM14 11h1v1h-1zM16 11h1v1h-1zM5 12h1v1h-1zM9 12h1v1h-1zM13 12h1v1h-1z"/></svg><div class="t" style="left:70px;top:175px;letter-spacing:-0.2px">table_cup_history</div><div class="a" style="left:39px;top:199px;width:10px;height:1px;background:repeating-linear-gradient(90deg,#A8A898 0,#A8A898 1px,transparent 1px,transparent 2px)"></div><svg style="left:47px;top:191px" width="18" height="15" viewBox="0 0 18 15" shape-rendering="crispEdges"><path fill="#000" d="M3 2h1v1h-1zM5 2h1v1h-1zM7 2h1v1h-1zM9 2h1v1h-1zM11 2h1v1h-1zM13 2h1v1h-1zM15 2h1v1h-1zM17 2h1v1h-1zM2 3h1v1h-1zM17 4h1v1h-1zM2 5h1v1h-1zM17 6h1v1h-1zM2 7h1v1h-1zM17 8h1v1h-1zM2 9h1v1h-1zM17 10h1v1h-1zM2 11h1v1h-1zM17 12h1v1h-1zM2 13h1v1h-1zM3 14h1v1h-1zM5 14h1v1h-1zM7 14h1v1h-1zM9 14h1v1h-1zM11 14h1v1h-1zM13 14h1v1h-1zM15 14h1v1h-1zM17 14h1v1h-1z"/><path fill="#000080" d="M4 3h1v1h-1zM6 3h1v1h-1zM8 3h1v1h-1zM10 3h1v1h-1zM12 3h1v1h-1zM14 3h1v1h-1zM16 3h1v1h-1zM3 4h1v1h-1zM5 4h1v1h-1zM7 4h1v1h-1zM9 4h1v1h-1zM11 4h1v1h-1zM13 4h1v1h-1zM15 4h1v1h-1z"/><path fill="#9A9A9A" d="M4 5h1v1h-1zM6 5h1v1h-1zM8 5h1v1h-1zM10 5h1v1h-1zM12 5h1v1h-1zM14 5h1v1h-1zM16 5h1v1h-1zM5 6h1v1h-1zM9 6h1v1h-1zM13 6h1v1h-1zM3 8h1v1h-1zM5 8h1v1h-1zM7 8h1v1h-1zM9 8h1v1h-1zM11 8h1v1h-1zM13 8h1v1h-1zM15 8h1v1h-1zM5 10h1v1h-1zM9 10h1v1h-1zM13 10h1v1h-1zM4 11h1v1h-1zM6 11h1v1h-1zM8 11h1v1h-1zM10 11h1v1h-1zM12 11h1v1h-1zM14 11h1v1h-1zM16 11h1v1h-1zM5 12h1v1h-1zM9 12h1v1h-1zM13 12h1v1h-1z"/></svg><div class="t" style="left:70px;top:191px;letter-spacing:-0.2px">table_dna</div><div class="a" style="left:39px;top:215px;width:10px;height:1px;background:repeating-linear-gradient(90deg,#A8A898 0,#A8A898 1px,transparent 1px,transparent 2px)"></div><svg style="left:47px;top:207px" width="18" height="15" viewBox="0 0 18 15" shape-rendering="crispEdges"><path fill="#000" d="M3 2h1v1h-1zM5 2h1v1h-1zM7 2h1v1h-1zM9 2h1v1h-1zM11 2h1v1h-1zM13 2h1v1h-1zM15 2h1v1h-1zM17 2h1v1h-1zM2 3h1v1h-1zM17 4h1v1h-1zM2 5h1v1h-1zM17 6h1v1h-1zM2 7h1v1h-1zM17 8h1v1h-1zM2 9h1v1h-1zM17 10h1v1h-1zM2 11h1v1h-1zM17 12h1v1h-1zM2 13h1v1h-1zM3 14h1v1h-1zM5 14h1v1h-1zM7 14h1v1h-1zM9 14h1v1h-1zM11 14h1v1h-1zM13 14h1v1h-1zM15 14h1v1h-1zM17 14h1v1h-1z"/><path fill="#000080" d="M4 3h1v1h-1zM6 3h1v1h-1zM8 3h1v1h-1zM10 3h1v1h-1zM12 3h1v1h-1zM14 3h1v1h-1zM16 3h1v1h-1zM3 4h1v1h-1zM5 4h1v1h-1zM7 4h1v1h-1zM9 4h1v1h-1zM11 4h1v1h-1zM13 4h1v1h-1zM15 4h1v1h-1z"/><path fill="#9A9A9A" d="M4 5h1v1h-1zM6 5h1v1h-1zM8 5h1v1h-1zM10 5h1v1h-1zM12 5h1v1h-1zM14 5h1v1h-1zM16 5h1v1h-1zM5 6h1v1h-1zM9 6h1v1h-1zM13 6h1v1h-1zM3 8h1v1h-1zM5 8h1v1h-1zM7 8h1v1h-1zM9 8h1v1h-1zM11 8h1v1h-1zM13 8h1v1h-1zM15 8h1v1h-1zM5 10h1v1h-1zM9 10h1v1h-1zM13 10h1v1h-1zM4 11h1v1h-1zM6 11h1v1h-1zM8 11h1v1h-1zM10 11h1v1h-1zM12 11h1v1h-1zM14 11h1v1h-1zM16 11h1v1h-1zM5 12h1v1h-1zM9 12h1v1h-1zM13 12h1v1h-1z"/></svg><div class="t" style="left:70px;top:207px;letter-spacing:-0.2px">table_fixtures</div><div class="a" style="left:39px;top:231px;width:10px;height:1px;background:repeating-linear-gradient(90deg,#A8A898 0,#A8A898 1px,transparent 1px,transparent 2px)"></div><svg style="left:47px;top:223px" width="18" height="15" viewBox="0 0 18 15" shape-rendering="crispEdges"><path fill="#000" d="M3 2h1v1h-1zM5 2h1v1h-1zM7 2h1v1h-1zM9 2h1v1h-1zM11 2h1v1h-1zM13 2h1v1h-1zM15 2h1v1h-1zM17 2h1v1h-1zM2 3h1v1h-1zM17 4h1v1h-1zM2 5h1v1h-1zM17 6h1v1h-1zM2 7h1v1h-1zM17 8h1v1h-1zM2 9h1v1h-1zM17 10h1v1h-1zM2 11h1v1h-1zM17 12h1v1h-1zM2 13h1v1h-1zM3 14h1v1h-1zM5 14h1v1h-1zM7 14h1v1h-1zM9 14h1v1h-1zM11 14h1v1h-1zM13 14h1v1h-1zM15 14h1v1h-1zM17 14h1v1h-1z"/><path fill="#000080" d="M4 3h1v1h-1zM6 3h1v1h-1zM8 3h1v1h-1zM10 3h1v1h-1zM12 3h1v1h-1zM14 3h1v1h-1zM16 3h1v1h-1zM3 4h1v1h-1zM5 4h1v1h-1zM7 4h1v1h-1zM9 4h1v1h-1zM11 4h1v1h-1zM13 4h1v1h-1zM15 4h1v1h-1z"/><path fill="#9A9A9A" d="M4 5h1v1h-1zM6 5h1v1h-1zM8 5h1v1h-1zM10 5h1v1h-1zM12 5h1v1h-1zM14 5h1v1h-1zM16 5h1v1h-1zM5 6h1v1h-1zM9 6h1v1h-1zM13 6h1v1h-1zM3 8h1v1h-1zM5 8h1v1h-1zM7 8h1v1h-1zM9 8h1v1h-1zM11 8h1v1h-1zM13 8h1v1h-1zM15 8h1v1h-1zM5 10h1v1h-1zM9 10h1v1h-1zM13 10h1v1h-1zM4 11h1v1h-1zM6 11h1v1h-1zM8 11h1v1h-1zM10 11h1v1h-1zM12 11h1v1h-1zM14 11h1v1h-1zM16 11h1v1h-1zM5 12h1v1h-1zM9 12h1v1h-1zM13 12h1v1h-1z"/></svg><div class="t" style="left:70px;top:223px;letter-spacing:-0.2px">table_leagues</div><div class="a" style="left:39px;top:247px;width:10px;height:1px;background:repeating-linear-gradient(90deg,#A8A898 0,#A8A898 1px,transparent 1px,transparent 2px)"></div><svg style="left:47px;top:239px" width="18" height="15" viewBox="0 0 18 15" shape-rendering="crispEdges"><path fill="#000" d="M3 2h1v1h-1zM5 2h1v1h-1zM7 2h1v1h-1zM9 2h1v1h-1zM11 2h1v1h-1zM13 2h1v1h-1zM15 2h1v1h-1zM17 2h1v1h-1zM2 3h1v1h-1zM17 4h1v1h-1zM2 5h1v1h-1zM17 6h1v1h-1zM2 7h1v1h-1zM17 8h1v1h-1zM2 9h1v1h-1zM17 10h1v1h-1zM2 11h1v1h-1zM17 12h1v1h-1zM2 13h1v1h-1zM3 14h1v1h-1zM5 14h1v1h-1zM7 14h1v1h-1zM9 14h1v1h-1zM11 14h1v1h-1zM13 14h1v1h-1zM15 14h1v1h-1zM17 14h1v1h-1z"/><path fill="#000080" d="M4 3h1v1h-1zM6 3h1v1h-1zM8 3h1v1h-1zM10 3h1v1h-1zM12 3h1v1h-1zM14 3h1v1h-1zM16 3h1v1h-1zM3 4h1v1h-1zM5 4h1v1h-1zM7 4h1v1h-1zM9 4h1v1h-1zM11 4h1v1h-1zM13 4h1v1h-1zM15 4h1v1h-1z"/><path fill="#9A9A9A" d="M4 5h1v1h-1zM6 5h1v1h-1zM8 5h1v1h-1zM10 5h1v1h-1zM12 5h1v1h-1zM14 5h1v1h-1zM16 5h1v1h-1zM5 6h1v1h-1zM9 6h1v1h-1zM13 6h1v1h-1zM3 8h1v1h-1zM5 8h1v1h-1zM7 8h1v1h-1zM9 8h1v1h-1zM11 8h1v1h-1zM13 8h1v1h-1zM15 8h1v1h-1zM5 10h1v1h-1zM9 10h1v1h-1zM13 10h1v1h-1zM4 11h1v1h-1zM6 11h1v1h-1zM8 11h1v1h-1zM10 11h1v1h-1zM12 11h1v1h-1zM14 11h1v1h-1zM16 11h1v1h-1zM5 12h1v1h-1zM9 12h1v1h-1zM13 12h1v1h-1z"/></svg><div class="t" style="left:70px;top:239px;letter-spacing:-0.2px">table_leagueteamlinks</div><div class="a" style="left:39px;top:263px;width:10px;height:1px;background:repeating-linear-gradient(90deg,#A8A898 0,#A8A898 1px,transparent 1px,transparent 2px)"></div><svg style="left:47px;top:255px" width="18" height="15" viewBox="0 0 18 15" shape-rendering="crispEdges"><path fill="#000" d="M3 2h1v1h-1zM5 2h1v1h-1zM7 2h1v1h-1zM9 2h1v1h-1zM11 2h1v1h-1zM13 2h1v1h-1zM15 2h1v1h-1zM17 2h1v1h-1zM2 3h1v1h-1zM17 4h1v1h-1zM2 5h1v1h-1zM17 6h1v1h-1zM2 7h1v1h-1zM17 8h1v1h-1zM2 9h1v1h-1zM17 10h1v1h-1zM2 11h1v1h-1zM17 12h1v1h-1zM2 13h1v1h-1zM3 14h1v1h-1zM5 14h1v1h-1zM7 14h1v1h-1zM9 14h1v1h-1zM11 14h1v1h-1zM13 14h1v1h-1zM15 14h1v1h-1zM17 14h1v1h-1z"/><path fill="#000080" d="M4 3h1v1h-1zM6 3h1v1h-1zM8 3h1v1h-1zM10 3h1v1h-1zM12 3h1v1h-1zM14 3h1v1h-1zM16 3h1v1h-1zM3 4h1v1h-1zM5 4h1v1h-1zM7 4h1v1h-1zM9 4h1v1h-1zM11 4h1v1h-1zM13 4h1v1h-1zM15 4h1v1h-1z"/><path fill="#9A9A9A" d="M4 5h1v1h-1zM6 5h1v1h-1zM8 5h1v1h-1zM10 5h1v1h-1zM12 5h1v1h-1zM14 5h1v1h-1zM16 5h1v1h-1zM5 6h1v1h-1zM9 6h1v1h-1zM13 6h1v1h-1zM3 8h1v1h-1zM5 8h1v1h-1zM7 8h1v1h-1zM9 8h1v1h-1zM11 8h1v1h-1zM13 8h1v1h-1zM15 8h1v1h-1zM5 10h1v1h-1zM9 10h1v1h-1zM13 10h1v1h-1zM4 11h1v1h-1zM6 11h1v1h-1zM8 11h1v1h-1zM10 11h1v1h-1zM12 11h1v1h-1zM14 11h1v1h-1zM16 11h1v1h-1zM5 12h1v1h-1zM9 12h1v1h-1zM13 12h1v1h-1z"/></svg><div class="t" style="left:70px;top:255px;letter-spacing:-0.2px">table_players</div><div class="a" style="left:39px;top:279px;width:10px;height:1px;background:repeating-linear-gradient(90deg,#A8A898 0,#A8A898 1px,transparent 1px,transparent 2px)"></div><svg style="left:47px;top:271px" width="18" height="15" viewBox="0 0 18 15" shape-rendering="crispEdges"><path fill="#000" d="M3 2h1v1h-1zM5 2h1v1h-1zM7 2h1v1h-1zM9 2h1v1h-1zM11 2h1v1h-1zM13 2h1v1h-1zM15 2h1v1h-1zM17 2h1v1h-1zM2 3h1v1h-1zM17 4h1v1h-1zM2 5h1v1h-1zM17 6h1v1h-1zM2 7h1v1h-1zM17 8h1v1h-1zM2 9h1v1h-1zM17 10h1v1h-1zM2 11h1v1h-1zM17 12h1v1h-1zM2 13h1v1h-1zM3 14h1v1h-1zM5 14h1v1h-1zM7 14h1v1h-1zM9 14h1v1h-1zM11 14h1v1h-1zM13 14h1v1h-1zM15 14h1v1h-1zM17 14h1v1h-1z"/><path fill="#000080" d="M4 3h1v1h-1zM6 3h1v1h-1zM8 3h1v1h-1zM10 3h1v1h-1zM12 3h1v1h-1zM14 3h1v1h-1zM16 3h1v1h-1zM3 4h1v1h-1zM5 4h1v1h-1zM7 4h1v1h-1zM9 4h1v1h-1zM11 4h1v1h-1zM13 4h1v1h-1zM15 4h1v1h-1z"/><path fill="#9A9A9A" d="M4 5h1v1h-1zM6 5h1v1h-1zM8 5h1v1h-1zM10 5h1v1h-1zM12 5h1v1h-1zM14 5h1v1h-1zM16 5h1v1h-1zM5 6h1v1h-1zM9 6h1v1h-1zM13 6h1v1h-1zM3 8h1v1h-1zM5 8h1v1h-1zM7 8h1v1h-1zM9 8h1v1h-1zM11 8h1v1h-1zM13 8h1v1h-1zM15 8h1v1h-1zM5 10h1v1h-1zM9 10h1v1h-1zM13 10h1v1h-1zM4 11h1v1h-1zM6 11h1v1h-1zM8 11h1v1h-1zM10 11h1v1h-1zM12 11h1v1h-1zM14 11h1v1h-1zM16 11h1v1h-1zM5 12h1v1h-1zM9 12h1v1h-1zM13 12h1v1h-1z"/></svg><div class="t" style="left:70px;top:271px;letter-spacing:-0.2px">table_playerstats</div><div class="a" style="left:39px;top:295px;width:10px;height:1px;background:repeating-linear-gradient(90deg,#A8A898 0,#A8A898 1px,transparent 1px,transparent 2px)"></div><svg style="left:47px;top:287px" width="18" height="15" viewBox="0 0 18 15" shape-rendering="crispEdges"><path fill="#000" d="M3 2h1v1h-1zM5 2h1v1h-1zM7 2h1v1h-1zM9 2h1v1h-1zM11 2h1v1h-1zM13 2h1v1h-1zM15 2h1v1h-1zM17 2h1v1h-1zM2 3h1v1h-1zM17 4h1v1h-1zM2 5h1v1h-1zM17 6h1v1h-1zM2 7h1v1h-1zM17 8h1v1h-1zM2 9h1v1h-1zM17 10h1v1h-1zM2 11h1v1h-1zM17 12h1v1h-1zM2 13h1v1h-1zM3 14h1v1h-1zM5 14h1v1h-1zM7 14h1v1h-1zM9 14h1v1h-1zM11 14h1v1h-1zM13 14h1v1h-1zM15 14h1v1h-1zM17 14h1v1h-1z"/><path fill="#000080" d="M4 3h1v1h-1zM6 3h1v1h-1zM8 3h1v1h-1zM10 3h1v1h-1zM12 3h1v1h-1zM14 3h1v1h-1zM16 3h1v1h-1zM3 4h1v1h-1zM5 4h1v1h-1zM7 4h1v1h-1zM9 4h1v1h-1zM11 4h1v1h-1zM13 4h1v1h-1zM15 4h1v1h-1z"/><path fill="#9A9A9A" d="M4 5h1v1h-1zM6 5h1v1h-1zM8 5h1v1h-1zM10 5h1v1h-1zM12 5h1v1h-1zM14 5h1v1h-1zM16 5h1v1h-1zM5 6h1v1h-1zM9 6h1v1h-1zM13 6h1v1h-1zM3 8h1v1h-1zM5 8h1v1h-1zM7 8h1v1h-1zM9 8h1v1h-1zM11 8h1v1h-1zM13 8h1v1h-1zM15 8h1v1h-1zM5 10h1v1h-1zM9 10h1v1h-1zM13 10h1v1h-1zM4 11h1v1h-1zM6 11h1v1h-1zM8 11h1v1h-1zM10 11h1v1h-1zM12 11h1v1h-1zM14 11h1v1h-1zM16 11h1v1h-1zM5 12h1v1h-1zM9 12h1v1h-1zM13 12h1v1h-1z"/></svg><div class="t" style="left:70px;top:287px;letter-spacing:-0.2px">table_playerwrite</div><div class="a" style="left:39px;top:311px;width:10px;height:1px;background:repeating-linear-gradient(90deg,#A8A898 0,#A8A898 1px,transparent 1px,transparent 2px)"></div><svg style="left:47px;top:303px" width="18" height="15" viewBox="0 0 18 15" shape-rendering="crispEdges"><path fill="#000" d="M3 2h1v1h-1zM5 2h1v1h-1zM7 2h1v1h-1zM9 2h1v1h-1zM11 2h1v1h-1zM13 2h1v1h-1zM15 2h1v1h-1zM17 2h1v1h-1zM2 3h1v1h-1zM17 4h1v1h-1zM2 5h1v1h-1zM17 6h1v1h-1zM2 7h1v1h-1zM17 8h1v1h-1zM2 9h1v1h-1zM17 10h1v1h-1zM2 11h1v1h-1zM17 12h1v1h-1zM2 13h1v1h-1zM3 14h1v1h-1zM5 14h1v1h-1zM7 14h1v1h-1zM9 14h1v1h-1zM11 14h1v1h-1zM13 14h1v1h-1zM15 14h1v1h-1zM17 14h1v1h-1z"/><path fill="#000080" d="M4 3h1v1h-1zM6 3h1v1h-1zM8 3h1v1h-1zM10 3h1v1h-1zM12 3h1v1h-1zM14 3h1v1h-1zM16 3h1v1h-1zM3 4h1v1h-1zM5 4h1v1h-1zM7 4h1v1h-1zM9 4h1v1h-1zM11 4h1v1h-1zM13 4h1v1h-1zM15 4h1v1h-1z"/><path fill="#9A9A9A" d="M4 5h1v1h-1zM6 5h1v1h-1zM8 5h1v1h-1zM10 5h1v1h-1zM12 5h1v1h-1zM14 5h1v1h-1zM16 5h1v1h-1zM5 6h1v1h-1zM9 6h1v1h-1zM13 6h1v1h-1zM3 8h1v1h-1zM5 8h1v1h-1zM7 8h1v1h-1zM9 8h1v1h-1zM11 8h1v1h-1zM13 8h1v1h-1zM15 8h1v1h-1zM5 10h1v1h-1zM9 10h1v1h-1zM13 10h1v1h-1zM4 11h1v1h-1zM6 11h1v1h-1zM8 11h1v1h-1zM10 11h1v1h-1zM12 11h1v1h-1zM14 11h1v1h-1zM16 11h1v1h-1zM5 12h1v1h-1zM9 12h1v1h-1zM13 12h1v1h-1z"/></svg><div class="t" style="left:70px;top:303px;letter-spacing:-0.2px">table_region_country_league</div><div class="a" style="left:39px;top:327px;width:10px;height:1px;background:repeating-linear-gradient(90deg,#A8A898 0,#A8A898 1px,transparent 1px,transparent 2px)"></div><svg style="left:47px;top:319px" width="18" height="15" viewBox="0 0 18 15" shape-rendering="crispEdges"><path fill="#000" d="M3 2h1v1h-1zM5 2h1v1h-1zM7 2h1v1h-1zM9 2h1v1h-1zM11 2h1v1h-1zM13 2h1v1h-1zM15 2h1v1h-1zM17 2h1v1h-1zM2 3h1v1h-1zM17 4h1v1h-1zM2 5h1v1h-1zM17 6h1v1h-1zM2 7h1v1h-1zM17 8h1v1h-1zM2 9h1v1h-1zM17 10h1v1h-1zM2 11h1v1h-1zM17 12h1v1h-1zM2 13h1v1h-1zM3 14h1v1h-1zM5 14h1v1h-1zM7 14h1v1h-1zM9 14h1v1h-1zM11 14h1v1h-1zM13 14h1v1h-1zM15 14h1v1h-1zM17 14h1v1h-1z"/><path fill="#000080" d="M4 3h1v1h-1zM6 3h1v1h-1zM8 3h1v1h-1zM10 3h1v1h-1zM12 3h1v1h-1zM14 3h1v1h-1zM16 3h1v1h-1zM3 4h1v1h-1zM5 4h1v1h-1zM7 4h1v1h-1zM9 4h1v1h-1zM11 4h1v1h-1zM13 4h1v1h-1zM15 4h1v1h-1z"/><path fill="#9A9A9A" d="M4 5h1v1h-1zM6 5h1v1h-1zM8 5h1v1h-1zM10 5h1v1h-1zM12 5h1v1h-1zM14 5h1v1h-1zM16 5h1v1h-1zM5 6h1v1h-1zM9 6h1v1h-1zM13 6h1v1h-1zM3 8h1v1h-1zM5 8h1v1h-1zM7 8h1v1h-1zM9 8h1v1h-1zM11 8h1v1h-1zM13 8h1v1h-1zM15 8h1v1h-1zM5 10h1v1h-1zM9 10h1v1h-1zM13 10h1v1h-1zM4 11h1v1h-1zM6 11h1v1h-1zM8 11h1v1h-1zM10 11h1v1h-1zM12 11h1v1h-1zM14 11h1v1h-1zM16 11h1v1h-1zM5 12h1v1h-1zM9 12h1v1h-1zM13 12h1v1h-1z"/></svg><div class="t" style="left:70px;top:319px;letter-spacing:-0.2px">table_rtsg</div><div class="a" style="left:39px;top:343px;width:10px;height:1px;background:repeating-linear-gradient(90deg,#A8A898 0,#A8A898 1px,transparent 1px,transparent 2px)"></div><svg style="left:47px;top:335px" width="18" height="15" viewBox="0 0 18 15" shape-rendering="crispEdges"><path fill="#000" d="M3 2h1v1h-1zM5 2h1v1h-1zM7 2h1v1h-1zM9 2h1v1h-1zM11 2h1v1h-1zM13 2h1v1h-1zM15 2h1v1h-1zM17 2h1v1h-1zM2 3h1v1h-1zM17 4h1v1h-1zM2 5h1v1h-1zM17 6h1v1h-1zM2 7h1v1h-1zM17 8h1v1h-1zM2 9h1v1h-1zM17 10h1v1h-1zM2 11h1v1h-1zM17 12h1v1h-1zM2 13h1v1h-1zM3 14h1v1h-1zM5 14h1v1h-1zM7 14h1v1h-1zM9 14h1v1h-1zM11 14h1v1h-1zM13 14h1v1h-1zM15 14h1v1h-1zM17 14h1v1h-1z"/><path fill="#000080" d="M4 3h1v1h-1zM6 3h1v1h-1zM8 3h1v1h-1zM10 3h1v1h-1zM12 3h1v1h-1zM14 3h1v1h-1zM16 3h1v1h-1zM3 4h1v1h-1zM5 4h1v1h-1zM7 4h1v1h-1zM9 4h1v1h-1zM11 4h1v1h-1zM13 4h1v1h-1zM15 4h1v1h-1z"/><path fill="#9A9A9A" d="M4 5h1v1h-1zM6 5h1v1h-1zM8 5h1v1h-1zM10 5h1v1h-1zM12 5h1v1h-1zM14 5h1v1h-1zM16 5h1v1h-1zM5 6h1v1h-1zM9 6h1v1h-1zM13 6h1v1h-1zM3 8h1v1h-1zM5 8h1v1h-1zM7 8h1v1h-1zM9 8h1v1h-1zM11 8h1v1h-1zM13 8h1v1h-1zM15 8h1v1h-1zM5 10h1v1h-1zM9 10h1v1h-1zM13 10h1v1h-1zM4 11h1v1h-1zM6 11h1v1h-1zM8 11h1v1h-1zM10 11h1v1h-1zM12 11h1v1h-1zM14 11h1v1h-1zM16 11h1v1h-1zM5 12h1v1h-1zM9 12h1v1h-1zM13 12h1v1h-1z"/></svg><div class="t" style="left:70px;top:335px;letter-spacing:-0.2px">table_specialteamplayers</div><div class="a" style="left:39px;top:359px;width:10px;height:1px;background:repeating-linear-gradient(90deg,#A8A898 0,#A8A898 1px,transparent 1px,transparent 2px)"></div><svg style="left:47px;top:351px" width="18" height="15" viewBox="0 0 18 15" shape-rendering="crispEdges"><path fill="#000" d="M3 2h1v1h-1zM5 2h1v1h-1zM7 2h1v1h-1zM9 2h1v1h-1zM11 2h1v1h-1zM13 2h1v1h-1zM15 2h1v1h-1zM17 2h1v1h-1zM2 3h1v1h-1zM17 4h1v1h-1zM2 5h1v1h-1zM17 6h1v1h-1zM2 7h1v1h-1zM17 8h1v1h-1zM2 9h1v1h-1zM17 10h1v1h-1zM2 11h1v1h-1zM17 12h1v1h-1zM2 13h1v1h-1zM3 14h1v1h-1zM5 14h1v1h-1zM7 14h1v1h-1zM9 14h1v1h-1zM11 14h1v1h-1zM13 14h1v1h-1zM15 14h1v1h-1zM17 14h1v1h-1z"/><path fill="#000080" d="M4 3h1v1h-1zM6 3h1v1h-1zM8 3h1v1h-1zM10 3h1v1h-1zM12 3h1v1h-1zM14 3h1v1h-1zM16 3h1v1h-1zM3 4h1v1h-1zM5 4h1v1h-1zM7 4h1v1h-1zM9 4h1v1h-1zM11 4h1v1h-1zM13 4h1v1h-1zM15 4h1v1h-1z"/><path fill="#9A9A9A" d="M4 5h1v1h-1zM6 5h1v1h-1zM8 5h1v1h-1zM10 5h1v1h-1zM12 5h1v1h-1zM14 5h1v1h-1zM16 5h1v1h-1zM5 6h1v1h-1zM9 6h1v1h-1zM13 6h1v1h-1zM3 8h1v1h-1zM5 8h1v1h-1zM7 8h1v1h-1zM9 8h1v1h-1zM11 8h1v1h-1zM13 8h1v1h-1zM15 8h1v1h-1zM5 10h1v1h-1zM9 10h1v1h-1zM13 10h1v1h-1zM4 11h1v1h-1zM6 11h1v1h-1zM8 11h1v1h-1zM10 11h1v1h-1zM12 11h1v1h-1zM14 11h1v1h-1zM16 11h1v1h-1zM5 12h1v1h-1zM9 12h1v1h-1zM13 12h1v1h-1z"/></svg><div class="t" style="left:70px;top:351px;letter-spacing:-0.2px">table_stadiums</div><div class="a" style="left:39px;top:375px;width:10px;height:1px;background:repeating-linear-gradient(90deg,#A8A898 0,#A8A898 1px,transparent 1px,transparent 2px)"></div><svg style="left:47px;top:367px" width="18" height="15" viewBox="0 0 18 15" shape-rendering="crispEdges"><path fill="#000" d="M3 2h1v1h-1zM5 2h1v1h-1zM7 2h1v1h-1zM9 2h1v1h-1zM11 2h1v1h-1zM13 2h1v1h-1zM15 2h1v1h-1zM17 2h1v1h-1zM2 3h1v1h-1zM17 4h1v1h-1zM2 5h1v1h-1zM17 6h1v1h-1zM2 7h1v1h-1zM17 8h1v1h-1zM2 9h1v1h-1zM17 10h1v1h-1zM2 11h1v1h-1zM17 12h1v1h-1zM2 13h1v1h-1zM3 14h1v1h-1zM5 14h1v1h-1zM7 14h1v1h-1zM9 14h1v1h-1zM11 14h1v1h-1zM13 14h1v1h-1zM15 14h1v1h-1zM17 14h1v1h-1z"/><path fill="#000080" d="M4 3h1v1h-1zM6 3h1v1h-1zM8 3h1v1h-1zM10 3h1v1h-1zM12 3h1v1h-1zM14 3h1v1h-1zM16 3h1v1h-1zM3 4h1v1h-1zM5 4h1v1h-1zM7 4h1v1h-1zM9 4h1v1h-1zM11 4h1v1h-1zM13 4h1v1h-1zM15 4h1v1h-1z"/><path fill="#9A9A9A" d="M4 5h1v1h-1zM6 5h1v1h-1zM8 5h1v1h-1zM10 5h1v1h-1zM12 5h1v1h-1zM14 5h1v1h-1zM16 5h1v1h-1zM5 6h1v1h-1zM9 6h1v1h-1zM13 6h1v1h-1zM3 8h1v1h-1zM5 8h1v1h-1zM7 8h1v1h-1zM9 8h1v1h-1zM11 8h1v1h-1zM13 8h1v1h-1zM15 8h1v1h-1zM5 10h1v1h-1zM9 10h1v1h-1zM13 10h1v1h-1zM4 11h1v1h-1zM6 11h1v1h-1zM8 11h1v1h-1zM10 11h1v1h-1zM12 11h1v1h-1zM14 11h1v1h-1zM16 11h1v1h-1zM5 12h1v1h-1zM9 12h1v1h-1zM13 12h1v1h-1z"/></svg><div class="t" style="left:70px;top:367px;letter-spacing:-0.2px">table_store</div><div class="a" style="left:39px;top:391px;width:10px;height:1px;background:repeating-linear-gradient(90deg,#A8A898 0,#A8A898 1px,transparent 1px,transparent 2px)"></div><svg style="left:47px;top:383px" width="18" height="15" viewBox="0 0 18 15" shape-rendering="crispEdges"><path fill="#000" d="M3 2h1v1h-1zM5 2h1v1h-1zM7 2h1v1h-1zM9 2h1v1h-1zM11 2h1v1h-1zM13 2h1v1h-1zM15 2h1v1h-1zM17 2h1v1h-1zM2 3h1v1h-1zM17 4h1v1h-1zM2 5h1v1h-1zM17 6h1v1h-1zM2 7h1v1h-1zM17 8h1v1h-1zM2 9h1v1h-1zM17 10h1v1h-1zM2 11h1v1h-1zM17 12h1v1h-1zM2 13h1v1h-1zM3 14h1v1h-1zM5 14h1v1h-1zM7 14h1v1h-1zM9 14h1v1h-1zM11 14h1v1h-1zM13 14h1v1h-1zM15 14h1v1h-1zM17 14h1v1h-1z"/><path fill="#000080" d="M4 3h1v1h-1zM6 3h1v1h-1zM8 3h1v1h-1zM10 3h1v1h-1zM12 3h1v1h-1zM14 3h1v1h-1zM16 3h1v1h-1zM3 4h1v1h-1zM5 4h1v1h-1zM7 4h1v1h-1zM9 4h1v1h-1zM11 4h1v1h-1zM13 4h1v1h-1zM15 4h1v1h-1z"/><path fill="#9A9A9A" d="M4 5h1v1h-1zM6 5h1v1h-1zM8 5h1v1h-1zM10 5h1v1h-1zM12 5h1v1h-1zM14 5h1v1h-1zM16 5h1v1h-1zM5 6h1v1h-1zM9 6h1v1h-1zM13 6h1v1h-1zM3 8h1v1h-1zM5 8h1v1h-1zM7 8h1v1h-1zM9 8h1v1h-1zM11 8h1v1h-1zM13 8h1v1h-1zM15 8h1v1h-1zM5 10h1v1h-1zM9 10h1v1h-1zM13 10h1v1h-1zM4 11h1v1h-1zM6 11h1v1h-1zM8 11h1v1h-1zM10 11h1v1h-1zM12 11h1v1h-1zM14 11h1v1h-1zM16 11h1v1h-1zM5 12h1v1h-1zM9 12h1v1h-1zM13 12h1v1h-1z"/></svg><div class="t" style="left:70px;top:383px;letter-spacing:-0.2px">table_team_lookup</div><div class="a" style="left:39px;top:407px;width:10px;height:1px;background:repeating-linear-gradient(90deg,#A8A898 0,#A8A898 1px,transparent 1px,transparent 2px)"></div><svg style="left:47px;top:399px" width="18" height="15" viewBox="0 0 18 15" shape-rendering="crispEdges"><path fill="#000" d="M3 2h1v1h-1zM5 2h1v1h-1zM7 2h1v1h-1zM9 2h1v1h-1zM11 2h1v1h-1zM13 2h1v1h-1zM15 2h1v1h-1zM17 2h1v1h-1zM2 3h1v1h-1zM17 4h1v1h-1zM2 5h1v1h-1zM17 6h1v1h-1zM2 7h1v1h-1zM17 8h1v1h-1zM2 9h1v1h-1zM17 10h1v1h-1zM2 11h1v1h-1zM17 12h1v1h-1zM2 13h1v1h-1zM3 14h1v1h-1zM5 14h1v1h-1zM7 14h1v1h-1zM9 14h1v1h-1zM11 14h1v1h-1zM13 14h1v1h-1zM15 14h1v1h-1zM17 14h1v1h-1z"/><path fill="#000080" d="M4 3h1v1h-1zM6 3h1v1h-1zM8 3h1v1h-1zM10 3h1v1h-1zM12 3h1v1h-1zM14 3h1v1h-1zM16 3h1v1h-1zM3 4h1v1h-1zM5 4h1v1h-1zM7 4h1v1h-1zM9 4h1v1h-1zM11 4h1v1h-1zM13 4h1v1h-1zM15 4h1v1h-1z"/><path fill="#9A9A9A" d="M4 5h1v1h-1zM6 5h1v1h-1zM8 5h1v1h-1zM10 5h1v1h-1zM12 5h1v1h-1zM14 5h1v1h-1zM16 5h1v1h-1zM5 6h1v1h-1zM9 6h1v1h-1zM13 6h1v1h-1zM3 8h1v1h-1zM5 8h1v1h-1zM7 8h1v1h-1zM9 8h1v1h-1zM11 8h1v1h-1zM13 8h1v1h-1zM15 8h1v1h-1zM5 10h1v1h-1zM9 10h1v1h-1zM13 10h1v1h-1zM4 11h1v1h-1zM6 11h1v1h-1zM8 11h1v1h-1zM10 11h1v1h-1zM12 11h1v1h-1zM14 11h1v1h-1zM16 11h1v1h-1zM5 12h1v1h-1zM9 12h1v1h-1zM13 12h1v1h-1z"/></svg><div class="t" style="left:70px;top:399px;letter-spacing:-0.2px">table_team_manager</div><div class="a" style="left:39px;top:423px;width:10px;height:1px;background:repeating-linear-gradient(90deg,#A8A898 0,#A8A898 1px,transparent 1px,transparent 2px)"></div><svg style="left:47px;top:415px" width="18" height="15" viewBox="0 0 18 15" shape-rendering="crispEdges"><path fill="#000" d="M3 2h1v1h-1zM5 2h1v1h-1zM7 2h1v1h-1zM9 2h1v1h-1zM11 2h1v1h-1zM13 2h1v1h-1zM15 2h1v1h-1zM17 2h1v1h-1zM2 3h1v1h-1zM17 4h1v1h-1zM2 5h1v1h-1zM17 6h1v1h-1zM2 7h1v1h-1zM17 8h1v1h-1zM2 9h1v1h-1zM17 10h1v1h-1zM2 11h1v1h-1zM17 12h1v1h-1zM2 13h1v1h-1zM3 14h1v1h-1zM5 14h1v1h-1zM7 14h1v1h-1zM9 14h1v1h-1zM11 14h1v1h-1zM13 14h1v1h-1zM15 14h1v1h-1zM17 14h1v1h-1z"/><path fill="#000080" d="M4 3h1v1h-1zM6 3h1v1h-1zM8 3h1v1h-1zM10 3h1v1h-1zM12 3h1v1h-1zM14 3h1v1h-1zM16 3h1v1h-1zM3 4h1v1h-1zM5 4h1v1h-1zM7 4h1v1h-1zM9 4h1v1h-1zM11 4h1v1h-1zM13 4h1v1h-1zM15 4h1v1h-1z"/><path fill="#9A9A9A" d="M4 5h1v1h-1zM6 5h1v1h-1zM8 5h1v1h-1zM10 5h1v1h-1zM12 5h1v1h-1zM14 5h1v1h-1zM16 5h1v1h-1zM5 6h1v1h-1zM9 6h1v1h-1zM13 6h1v1h-1zM3 8h1v1h-1zM5 8h1v1h-1zM7 8h1v1h-1zM9 8h1v1h-1zM11 8h1v1h-1zM13 8h1v1h-1zM15 8h1v1h-1zM5 10h1v1h-1zM9 10h1v1h-1zM13 10h1v1h-1zM4 11h1v1h-1zM6 11h1v1h-1zM8 11h1v1h-1zM10 11h1v1h-1zM12 11h1v1h-1zM14 11h1v1h-1zM16 11h1v1h-1zM5 12h1v1h-1zM9 12h1v1h-1zM13 12h1v1h-1z"/></svg><div class="t" style="left:70px;top:415px;letter-spacing:-0.2px">table_team_manager_history</div><div class="a" style="left:39px;top:439px;width:10px;height:1px;background:repeating-linear-gradient(90deg,#A8A898 0,#A8A898 1px,transparent 1px,transparent 2px)"></div><svg style="left:47px;top:431px" width="18" height="15" viewBox="0 0 18 15" shape-rendering="crispEdges"><path fill="#000" d="M3 2h1v1h-1zM5 2h1v1h-1zM7 2h1v1h-1zM9 2h1v1h-1zM11 2h1v1h-1zM13 2h1v1h-1zM15 2h1v1h-1zM17 2h1v1h-1zM2 3h1v1h-1zM17 4h1v1h-1zM2 5h1v1h-1zM17 6h1v1h-1zM2 7h1v1h-1zM17 8h1v1h-1zM2 9h1v1h-1zM17 10h1v1h-1zM2 11h1v1h-1zM17 12h1v1h-1zM2 13h1v1h-1zM3 14h1v1h-1zM5 14h1v1h-1zM7 14h1v1h-1zM9 14h1v1h-1zM11 14h1v1h-1zM13 14h1v1h-1zM15 14h1v1h-1zM17 14h1v1h-1z"/><path fill="#000080" d="M4 3h1v1h-1zM6 3h1v1h-1zM8 3h1v1h-1zM10 3h1v1h-1zM12 3h1v1h-1zM14 3h1v1h-1zM16 3h1v1h-1zM3 4h1v1h-1zM5 4h1v1h-1zM7 4h1v1h-1zM9 4h1v1h-1zM11 4h1v1h-1zM13 4h1v1h-1zM15 4h1v1h-1z"/><path fill="#9A9A9A" d="M4 5h1v1h-1zM6 5h1v1h-1zM8 5h1v1h-1zM10 5h1v1h-1zM12 5h1v1h-1zM14 5h1v1h-1zM16 5h1v1h-1zM5 6h1v1h-1zM9 6h1v1h-1zM13 6h1v1h-1zM3 8h1v1h-1zM5 8h1v1h-1zM7 8h1v1h-1zM9 8h1v1h-1zM11 8h1v1h-1zM13 8h1v1h-1zM15 8h1v1h-1zM5 10h1v1h-1zM9 10h1v1h-1zM13 10h1v1h-1zM4 11h1v1h-1zM6 11h1v1h-1zM8 11h1v1h-1zM10 11h1v1h-1zM12 11h1v1h-1zM14 11h1v1h-1zM16 11h1v1h-1zM5 12h1v1h-1zM9 12h1v1h-1zM13 12h1v1h-1z"/></svg><div class="t" style="left:70px;top:431px;letter-spacing:-0.2px">table_teamformationnames</div><div class="a" style="left:39px;top:455px;width:10px;height:1px;background:repeating-linear-gradient(90deg,#A8A898 0,#A8A898 1px,transparent 1px,transparent 2px)"></div><svg style="left:47px;top:447px" width="18" height="15" viewBox="0 0 18 15" shape-rendering="crispEdges"><path fill="#000" d="M3 2h1v1h-1zM5 2h1v1h-1zM7 2h1v1h-1zM9 2h1v1h-1zM11 2h1v1h-1zM13 2h1v1h-1zM15 2h1v1h-1zM17 2h1v1h-1zM2 3h1v1h-1zM17 4h1v1h-1zM2 5h1v1h-1zM17 6h1v1h-1zM2 7h1v1h-1zM17 8h1v1h-1zM2 9h1v1h-1zM17 10h1v1h-1zM2 11h1v1h-1zM17 12h1v1h-1zM2 13h1v1h-1zM3 14h1v1h-1zM5 14h1v1h-1zM7 14h1v1h-1zM9 14h1v1h-1zM11 14h1v1h-1zM13 14h1v1h-1zM15 14h1v1h-1zM17 14h1v1h-1z"/><path fill="#000080" d="M4 3h1v1h-1zM6 3h1v1h-1zM8 3h1v1h-1zM10 3h1v1h-1zM12 3h1v1h-1zM14 3h1v1h-1zM16 3h1v1h-1zM3 4h1v1h-1zM5 4h1v1h-1zM7 4h1v1h-1zM9 4h1v1h-1zM11 4h1v1h-1zM13 4h1v1h-1zM15 4h1v1h-1z"/><path fill="#9A9A9A" d="M4 5h1v1h-1zM6 5h1v1h-1zM8 5h1v1h-1zM10 5h1v1h-1zM12 5h1v1h-1zM14 5h1v1h-1zM16 5h1v1h-1zM5 6h1v1h-1zM9 6h1v1h-1zM13 6h1v1h-1zM3 8h1v1h-1zM5 8h1v1h-1zM7 8h1v1h-1zM9 8h1v1h-1zM11 8h1v1h-1zM13 8h1v1h-1zM15 8h1v1h-1zM5 10h1v1h-1zM9 10h1v1h-1zM13 10h1v1h-1zM4 11h1v1h-1zM6 11h1v1h-1zM8 11h1v1h-1zM10 11h1v1h-1zM12 11h1v1h-1zM14 11h1v1h-1zM16 11h1v1h-1zM5 12h1v1h-1zM9 12h1v1h-1zM13 12h1v1h-1z"/></svg><div class="t" style="left:70px;top:447px;letter-spacing:-0.2px">table_teamkits</div><div class="a" style="left:39px;top:471px;width:10px;height:1px;background:repeating-linear-gradient(90deg,#A8A898 0,#A8A898 1px,transparent 1px,transparent 2px)"></div><svg style="left:47px;top:463px" width="18" height="15" viewBox="0 0 18 15" shape-rendering="crispEdges"><path fill="#000" d="M3 2h1v1h-1zM5 2h1v1h-1zM7 2h1v1h-1zM9 2h1v1h-1zM11 2h1v1h-1zM13 2h1v1h-1zM15 2h1v1h-1zM17 2h1v1h-1zM2 3h1v1h-1zM17 4h1v1h-1zM2 5h1v1h-1zM17 6h1v1h-1zM2 7h1v1h-1zM17 8h1v1h-1zM2 9h1v1h-1zM17 10h1v1h-1zM2 11h1v1h-1zM17 12h1v1h-1zM2 13h1v1h-1zM3 14h1v1h-1zM5 14h1v1h-1zM7 14h1v1h-1zM9 14h1v1h-1zM11 14h1v1h-1zM13 14h1v1h-1zM15 14h1v1h-1zM17 14h1v1h-1z"/><path fill="#000080" d="M4 3h1v1h-1zM6 3h1v1h-1zM8 3h1v1h-1zM10 3h1v1h-1zM12 3h1v1h-1zM14 3h1v1h-1zM16 3h1v1h-1zM3 4h1v1h-1zM5 4h1v1h-1zM7 4h1v1h-1zM9 4h1v1h-1zM11 4h1v1h-1zM13 4h1v1h-1zM15 4h1v1h-1z"/><path fill="#9A9A9A" d="M4 5h1v1h-1zM6 5h1v1h-1zM8 5h1v1h-1zM10 5h1v1h-1zM12 5h1v1h-1zM14 5h1v1h-1zM16 5h1v1h-1zM5 6h1v1h-1zM9 6h1v1h-1zM13 6h1v1h-1zM3 8h1v1h-1zM5 8h1v1h-1zM7 8h1v1h-1zM9 8h1v1h-1zM11 8h1v1h-1zM13 8h1v1h-1zM15 8h1v1h-1zM5 10h1v1h-1zM9 10h1v1h-1zM13 10h1v1h-1zM4 11h1v1h-1zM6 11h1v1h-1zM8 11h1v1h-1zM10 11h1v1h-1zM12 11h1v1h-1zM14 11h1v1h-1zM16 11h1v1h-1zM5 12h1v1h-1zM9 12h1v1h-1zM13 12h1v1h-1z"/></svg><div class="t" style="left:70px;top:463px;letter-spacing:-0.2px">table_teamplayerlinks</div><div class="a" style="left:39px;top:487px;width:10px;height:1px;background:repeating-linear-gradient(90deg,#A8A898 0,#A8A898 1px,transparent 1px,transparent 2px)"></div><svg style="left:47px;top:479px" width="18" height="15" viewBox="0 0 18 15" shape-rendering="crispEdges"><path fill="#000" d="M3 2h1v1h-1zM5 2h1v1h-1zM7 2h1v1h-1zM9 2h1v1h-1zM11 2h1v1h-1zM13 2h1v1h-1zM15 2h1v1h-1zM17 2h1v1h-1zM2 3h1v1h-1zM17 4h1v1h-1zM2 5h1v1h-1zM17 6h1v1h-1zM2 7h1v1h-1zM17 8h1v1h-1zM2 9h1v1h-1zM17 10h1v1h-1zM2 11h1v1h-1zM17 12h1v1h-1zM2 13h1v1h-1zM3 14h1v1h-1zM5 14h1v1h-1zM7 14h1v1h-1zM9 14h1v1h-1zM11 14h1v1h-1zM13 14h1v1h-1zM15 14h1v1h-1zM17 14h1v1h-1z"/><path fill="#000080" d="M4 3h1v1h-1zM6 3h1v1h-1zM8 3h1v1h-1zM10 3h1v1h-1zM12 3h1v1h-1zM14 3h1v1h-1zM16 3h1v1h-1zM3 4h1v1h-1zM5 4h1v1h-1zM7 4h1v1h-1zM9 4h1v1h-1zM11 4h1v1h-1zM13 4h1v1h-1zM15 4h1v1h-1z"/><path fill="#9A9A9A" d="M4 5h1v1h-1zM6 5h1v1h-1zM8 5h1v1h-1zM10 5h1v1h-1zM12 5h1v1h-1zM14 5h1v1h-1zM16 5h1v1h-1zM5 6h1v1h-1zM9 6h1v1h-1zM13 6h1v1h-1zM3 8h1v1h-1zM5 8h1v1h-1zM7 8h1v1h-1zM9 8h1v1h-1zM11 8h1v1h-1zM13 8h1v1h-1zM15 8h1v1h-1zM5 10h1v1h-1zM9 10h1v1h-1zM13 10h1v1h-1zM4 11h1v1h-1zM6 11h1v1h-1zM8 11h1v1h-1zM10 11h1v1h-1zM12 11h1v1h-1zM14 11h1v1h-1zM16 11h1v1h-1zM5 12h1v1h-1zM9 12h1v1h-1zM13 12h1v1h-1z"/></svg><div class="t" style="left:70px;top:479px;letter-spacing:-0.2px">table_teamrivalry</div><div class="a" style="left:39px;top:503px;width:10px;height:1px;background:repeating-linear-gradient(90deg,#A8A898 0,#A8A898 1px,transparent 1px,transparent 2px)"></div><svg style="left:49px;top:497px" width="16" height="13" viewBox="0 0 16 13" shape-rendering="crispEdges"><rect x="0" y="0" width="16" height="13" fill="#000"/><rect x="1" y="1" width="14" height="2" fill="#000080"/><rect x="1" y="3" width="14" height="9" fill="#808080"/><rect x="1.0" y="3.0" width="2.75" height="2.33" fill="#fff"/><rect x="4.75" y="3.0" width="2.75" height="2.33" fill="#fff"/><rect x="8.5" y="3.0" width="2.75" height="2.33" fill="#fff"/><rect x="12.25" y="3.0" width="2.75" height="2.33" fill="#fff"/><rect x="1.0" y="6.33" width="2.75" height="2.33" fill="#fff"/><rect x="4.75" y="6.33" width="2.75" height="2.33" fill="#fff"/><rect x="8.5" y="6.33" width="2.75" height="2.33" fill="#fff"/><rect x="12.25" y="6.33" width="2.75" height="2.33" fill="#fff"/><rect x="1.0" y="9.67" width="2.75" height="2.33" fill="#fff"/><rect x="4.75" y="9.67" width="2.75" height="2.33" fill="#fff"/><rect x="8.5" y="9.67" width="2.75" height="2.33" fill="#fff"/><rect x="12.25" y="9.67" width="2.75" height="2.33" fill="#fff"/></svg><div class="a" style="left:68px;top:495px;width:76px;height:16px;background:#ECE9D8"></div><div class="t" style="left:70px;top:495px;font-weight:bold;font-size:11.8px;letter-spacing:0.1px">table_teams</div><div class="a" style="left:39px;top:519px;width:10px;height:1px;background:repeating-linear-gradient(90deg,#A8A898 0,#A8A898 1px,transparent 1px,transparent 2px)"></div><svg style="left:47px;top:511px" width="18" height="15" viewBox="0 0 18 15" shape-rendering="crispEdges"><path fill="#000" d="M3 2h1v1h-1zM5 2h1v1h-1zM7 2h1v1h-1zM9 2h1v1h-1zM11 2h1v1h-1zM13 2h1v1h-1zM15 2h1v1h-1zM17 2h1v1h-1zM2 3h1v1h-1zM17 4h1v1h-1zM2 5h1v1h-1zM17 6h1v1h-1zM2 7h1v1h-1zM17 8h1v1h-1zM2 9h1v1h-1zM17 10h1v1h-1zM2 11h1v1h-1zM17 12h1v1h-1zM2 13h1v1h-1zM3 14h1v1h-1zM5 14h1v1h-1zM7 14h1v1h-1zM9 14h1v1h-1zM11 14h1v1h-1zM13 14h1v1h-1zM15 14h1v1h-1zM17 14h1v1h-1z"/><path fill="#000080" d="M4 3h1v1h-1zM6 3h1v1h-1zM8 3h1v1h-1zM10 3h1v1h-1zM12 3h1v1h-1zM14 3h1v1h-1zM16 3h1v1h-1zM3 4h1v1h-1zM5 4h1v1h-1zM7 4h1v1h-1zM9 4h1v1h-1zM11 4h1v1h-1zM13 4h1v1h-1zM15 4h1v1h-1z"/><path fill="#9A9A9A" d="M4 5h1v1h-1zM6 5h1v1h-1zM8 5h1v1h-1zM10 5h1v1h-1zM12 5h1v1h-1zM14 5h1v1h-1zM16 5h1v1h-1zM5 6h1v1h-1zM9 6h1v1h-1zM13 6h1v1h-1zM3 8h1v1h-1zM5 8h1v1h-1zM7 8h1v1h-1zM9 8h1v1h-1zM11 8h1v1h-1zM13 8h1v1h-1zM15 8h1v1h-1zM5 10h1v1h-1zM9 10h1v1h-1zM13 10h1v1h-1zM4 11h1v1h-1zM6 11h1v1h-1zM8 11h1v1h-1zM10 11h1v1h-1zM12 11h1v1h-1zM14 11h1v1h-1zM16 11h1v1h-1zM5 12h1v1h-1zM9 12h1v1h-1zM13 12h1v1h-1z"/></svg><div class="t" style="left:70px;top:511px;letter-spacing:-0.2px">table_transactionhistory</div><div class="a" style="left:15px;top:531px;width:9px;height:9px;border:1px solid #7B9AC6;border-radius:1px;background:linear-gradient(180deg,#fff 0,#E8E4D8 100%)"></div><div class="a" style="left:17px;top:535px;width:5px;height:1px;background:#000"></div><div class="a" style="left:19px;top:533px;width:1px;height:5px;background:#000"></div><div class="a" style="left:25px;top:535px;width:5px;height:1px;background:repeating-linear-gradient(90deg,#A8A898 0,#A8A898 1px,transparent 1px,transparent 2px)"></div><svg style="left:30px;top:528px" width="14" height="12" viewBox="0 0 14 12" shape-rendering="crispEdges"><path fill="#808080" d="M2 0h5v1h-5zM1 1h1v1h-1zM7 1h1v1h-1zM0 2h1v1h-1zM8 2h6v1h-6zM0 3h1v1h-1zM13 3h1v1h-1zM0 4h1v1h-1zM13 4h1v1h-1zM0 5h1v1h-1zM13 5h1v1h-1zM0 6h1v1h-1zM13 6h1v1h-1zM0 7h1v1h-1zM13 7h1v1h-1zM0 8h1v1h-1zM13 8h1v1h-1zM0 9h1v1h-1zM13 9h1v1h-1zM0 10h1v1h-1zM13 10h1v1h-1zM0 11h14v1h-14z"/><path fill="#FFFFFF" d="M2 1h1v1h-1zM4 1h1v1h-1zM6 1h1v1h-1zM1 2h1v1h-1zM3 2h1v1h-1zM5 2h1v1h-1zM7 2h1v1h-1zM3 4h1v1h-1zM5 4h1v1h-1zM7 4h1v1h-1zM9 4h1v1h-1zM11 4h1v1h-1zM2 5h1v1h-1zM4 5h1v1h-1zM6 5h1v1h-1zM8 5h1v1h-1zM10 5h1v1h-1zM12 5h1v1h-1zM3 6h1v1h-1zM5 6h1v1h-1zM7 6h1v1h-1zM9 6h1v1h-1zM11 6h1v1h-1zM2 7h1v1h-1zM4 7h1v1h-1zM6 7h1v1h-1zM8 7h1v1h-1zM10 7h1v1h-1zM12 7h1v1h-1zM3 8h1v1h-1zM5 8h1v1h-1zM7 8h1v1h-1zM9 8h1v1h-1zM11 8h1v1h-1zM2 9h1v1h-1zM4 9h1v1h-1zM6 9h1v1h-1zM8 9h1v1h-1zM10 9h1v1h-1zM12 9h1v1h-1zM3 10h1v1h-1zM5 10h1v1h-1zM7 10h1v1h-1zM9 10h1v1h-1zM11 10h1v1h-1z"/><path fill="#FFFF00" d="M3 1h1v1h-1zM5 1h1v1h-1zM2 2h1v1h-1zM4 2h1v1h-1zM6 2h1v1h-1zM2 4h1v1h-1zM4 4h1v1h-1zM6 4h1v1h-1zM8 4h1v1h-1zM10 4h1v1h-1zM12 4h1v1h-1zM3 5h1v1h-1zM5 5h1v1h-1zM7 5h1v1h-1zM9 5h1v1h-1zM11 5h1v1h-1zM2 6h1v1h-1zM4 6h1v1h-1zM6 6h1v1h-1zM8 6h1v1h-1zM10 6h1v1h-1zM12 6h1v1h-1zM3 7h1v1h-1zM5 7h1v1h-1zM7 7h1v1h-1zM9 7h1v1h-1zM11 7h1v1h-1zM2 8h1v1h-1zM4 8h1v1h-1zM6 8h1v1h-1zM8 8h1v1h-1zM10 8h1v1h-1zM12 8h1v1h-1zM3 9h1v1h-1zM5 9h1v1h-1zM7 9h1v1h-1zM9 9h1v1h-1zM11 9h1v1h-1zM2 10h1v1h-1zM4 10h1v1h-1zM6 10h1v1h-1zM8 10h1v1h-1zM10 10h1v1h-1zM12 10h1v1h-1z"/><path fill="#fff" d="M1 3h12v1h-12zM1 4h1v1h-1zM1 5h1v1h-1zM1 6h1v1h-1zM1 7h1v1h-1zM1 8h1v1h-1zM1 9h1v1h-1zM1 10h1v1h-1z"/></svg><div class="t" style="left:51px;top:527px">System Tables</div><div class="a" style="left:6px;top:691px;width:252px;height:18px;background:linear-gradient(180deg,#F3F1EA 0,#FEFEFB 30%,#FEFEFB 70%,#F0EEE6 100%)"></div><div class="a" style="left:7px;top:692px;width:16px;height:15px;border:1px solid #fff;border-radius:2px;background:linear-gradient(135deg,#DCE6FD 0,#C3D3FD 50%,#B6C9FA 100%);box-shadow:0 1px 0 #8FA8E8"></div><svg style="left:11px;top:695px" width="8" height="9" viewBox="0 0 8 9" shape-rendering="crispEdges"><path d="M5.5 1L2 4.5L5.5 8" fill="none" stroke="#4D6185" stroke-width="2" shape-rendering="auto"/></svg><div class="a" style="left:241px;top:692px;width:16px;height:15px;border:1px solid #fff;border-radius:2px;background:linear-gradient(135deg,#DCE6FD 0,#C3D3FD 50%,#B6C9FA 100%);box-shadow:0 1px 0 #8FA8E8"></div><svg style="left:245px;top:695px" width="8" height="9" viewBox="0 0 8 9" shape-rendering="crispEdges"><path d="M2.5 1L6 4.5L2.5 8" fill="none" stroke="#4D6185" stroke-width="2" shape-rendering="auto"/></svg><div class="a" style="left:35px;top:692px;width:140px;height:15px;border:1px solid #fff;border-radius:2px;background:linear-gradient(90deg,#C8D6FC 0,#BACCFC 50%,#B2C6FA 100%);box-shadow:0 1px 0 #8FA8E8"></div><div class="a" style="left:100px;top:696px;width:1px;height:7px;background:#8FA8E8"></div><div class="a" style="left:102px;top:696px;width:1px;height:7px;background:#8FA8E8"></div><div class="a" style="left:104px;top:696px;width:1px;height:7px;background:#8FA8E8"></div><div class="a" style="left:106px;top:696px;width:1px;height:7px;background:#8FA8E8"></div><div class="a" style="left:264px;top:74px;width:757px;height:562px;background:#fff;border-left:1px solid #A8A494;border-top:1px solid #A8A494"></div><div class="a" style="left:265px;top:75px;width:756px;height:561px;border-left:1px solid #716F64;border-top:1px solid #716F64;border-bottom:1px solid #F1EFE2"></div><div class="a" style="left:266px;top:76px;width:755px;height:559px;border-left:1px solid #ACA899;border-top:1px solid #ACA899"></div><div class="a" style="left:267px;top:77px;width:754px;height:557px;border-left:1px solid #716F64;border-top:1px solid #716F64"></div><div class="a" style="left:1020px;top:77px;width:1px;height:558px;background:#E8E6DC"></div><div class="a" style="left:268px;top:78px;width:16px;height:16px;background:#ECE9D8;border-left:1px solid #fff;border-top:1px solid #fff;border-right:1px solid #000;border-bottom:1px solid #000"></div><div class="a" style="left:284px;top:78px;width:67px;height:16px;background:#ECE9D8;border-left:1px solid #fff;border-top:1px solid #fff;border-right:1px solid #000;border-bottom:1px solid #000;overflow:hidden"><div class="t" style="right:1px;top:-1px;font-size:12px;transform:scaleX(0.875);transform-origin:100% 50%">teamid</div></div><div class="a" style="left:351px;top:78px;width:67px;height:16px;background:#ECE9D8;border-left:1px solid #fff;border-top:1px solid #fff;border-right:1px solid #000;border-bottom:1px solid #000;overflow:hidden"><div class="t" style="right:1px;top:-1px;font-size:12px;transform:scaleX(0.875);transform-origin:100% 50%">adboardid</div></div><div class="a" style="left:418px;top:78px;width:67px;height:16px;background:#ECE9D8;border-left:1px solid #fff;border-top:1px solid #fff;border-right:1px solid #000;border-bottom:1px solid #000;overflow:hidden"><div class="t" style="right:1px;top:-1px;font-size:12px;transform:scaleX(0.875);transform-origin:100% 50%">assetid</div></div><div class="a" style="left:485px;top:78px;width:67px;height:16px;background:#ECE9D8;border-left:1px solid #fff;border-top:1px solid #fff;border-right:1px solid #000;border-bottom:1px solid #000;overflow:hidden"><div class="t" style="right:1px;top:-1px;font-size:12px;transform:scaleX(0.875);transform-origin:100% 50%">attack</div></div><div class="a" style="left:552px;top:78px;width:67px;height:16px;background:#ECE9D8;border-left:1px solid #fff;border-top:1px solid #fff;border-right:1px solid #000;border-bottom:1px solid #000;overflow:hidden"><div class="t" style="right:1px;top:-1px;font-size:12px;transform:scaleX(0.875);transform-origin:100% 50%">balltype</div></div><div class="a" style="left:619px;top:78px;width:67px;height:16px;background:#ECE9D8;border-left:1px solid #fff;border-top:1px solid #fff;border-right:1px solid #000;border-bottom:1px solid #000;overflow:hidden"><div class="t" style="right:1px;top:-1px;font-size:12px;transform:scaleX(0.875);transform-origin:100% 50%">eliteteam</div></div><div class="a" style="left:686px;top:78px;width:67px;height:16px;background:#ECE9D8;border-left:1px solid #fff;border-top:1px solid #fff;border-right:1px solid #000;border-bottom:1px solid #000;overflow:hidden"><div class="t" style="right:1px;top:-1px;font-size:12px;transform:scaleX(0.875);transform-origin:100% 50%">fifasortorder</div></div><div class="a" style="left:753px;top:78px;width:67px;height:16px;background:#ECE9D8;border-left:1px solid #fff;border-top:1px solid #fff;border-right:1px solid #000;border-bottom:1px solid #000;overflow:hidden"><div class="t" style="right:1px;top:-1px;font-size:12px;transform:scaleX(0.875);transform-origin:100% 50%">formationid</div></div><div class="a" style="left:820px;top:78px;width:67px;height:16px;background:#ECE9D8;border-left:1px solid #fff;border-top:1px solid #fff;border-right:1px solid #000;border-bottom:1px solid #000;overflow:hidden"><div class="t" style="right:1px;top:-1px;font-size:12px;transform:scaleX(0.875);transform-origin:100% 50%">enericbanner</div></div><div class="a" style="left:887px;top:78px;width:67px;height:16px;background:#ECE9D8;border-left:1px solid #fff;border-top:1px solid #fff;border-right:1px solid #000;border-bottom:1px solid #000;overflow:hidden"><div class="t" style="right:1px;top:-1px;font-size:12px;transform:scaleX(0.875);transform-origin:100% 50%">generickitid</div></div><div class="a" style="left:954px;top:78px;width:49px;height:16px;background:#ECE9D8;border-left:1px solid #fff;border-top:1px solid #fff;border-bottom:1px solid #000;overflow:hidden"><div class="t" style="right:0px;top:-1px;font-size:12px;transform:scaleX(0.875);transform-origin:100% 50%">offsidet</div></div><div class="a" style="left:268px;top:94px;width:16px;height:16px;background:#ECE9D8;border-left:1px solid #fff;border-top:1px solid #fff;border-right:1px solid #000;border-bottom:1px solid #000"></div><div class="a" style="left:284px;top:109px;width:719px;height:1px;background:#C0C0C0"></div><div class="t" style="left:284px;top:94px;width:66px;text-align:right;font-size:12px;height:16px;overflow:hidden"><span style="display:inline-block;transform:scaleX(0.93);transform-origin:100% 50%">1823</span></div><div class="t" style="left:351px;top:94px;width:66px;text-align:right;font-size:12px;height:16px;overflow:hidden"><span style="display:inline-block;transform:scaleX(0.93);transform-origin:100% 50%">8</span></div><div class="t" style="left:418px;top:94px;width:66px;text-align:right;font-size:12px;height:16px;overflow:hidden"><span style="display:inline-block;transform:scaleX(0.93);transform-origin:100% 50%">1823</span></div><div class="t" style="left:485px;top:94px;width:66px;text-align:right;font-size:12px;height:16px;overflow:hidden"><span style="display:inline-block;transform:scaleX(0.93);transform-origin:100% 50%">1</span></div><div class="t" style="left:552px;top:94px;width:66px;text-align:right;font-size:12px;height:16px;overflow:hidden"><span style="display:inline-block;transform:scaleX(0.93);transform-origin:100% 50%">5</span></div><div class="t" style="left:619px;top:94px;width:66px;text-align:right;font-size:12px;height:16px;overflow:hidden"><span style="display:inline-block;transform:scaleX(0.93);transform-origin:100% 50%">0</span></div><div class="t" style="left:686px;top:94px;width:66px;text-align:right;font-size:12px;height:16px;overflow:hidden"><span style="display:inline-block;transform:scaleX(0.93);transform-origin:100% 50%">318</span></div><div class="t" style="left:753px;top:94px;width:66px;text-align:right;font-size:12px;height:16px;overflow:hidden"><span style="display:inline-block;transform:scaleX(0.93);transform-origin:100% 50%">32</span></div><div class="t" style="left:820px;top:94px;width:66px;text-align:right;font-size:12px;height:16px;overflow:hidden"><span style="display:inline-block;transform:scaleX(0.93);transform-origin:100% 50%">1</span></div><div class="t" style="left:887px;top:94px;width:66px;text-align:right;font-size:12px;height:16px;overflow:hidden"><span style="display:inline-block;transform:scaleX(0.93);transform-origin:100% 50%">1823</span></div><div class="a" style="left:268px;top:110px;width:16px;height:16px;background:#ECE9D8;border-left:1px solid #fff;border-top:1px solid #fff;border-right:1px solid #000;border-bottom:1px solid #000"></div><div class="a" style="left:284px;top:125px;width:719px;height:1px;background:#C0C0C0"></div><div class="t" style="left:284px;top:110px;width:66px;text-align:right;font-size:12px;height:16px;overflow:hidden"><span style="display:inline-block;transform:scaleX(0.93);transform-origin:100% 50%">1824</span></div><div class="t" style="left:351px;top:110px;width:66px;text-align:right;font-size:12px;height:16px;overflow:hidden"><span style="display:inline-block;transform:scaleX(0.93);transform-origin:100% 50%">18</span></div><div class="t" style="left:418px;top:110px;width:66px;text-align:right;font-size:12px;height:16px;overflow:hidden"><span style="display:inline-block;transform:scaleX(0.93);transform-origin:100% 50%">1824</span></div><div class="t" style="left:485px;top:110px;width:66px;text-align:right;font-size:12px;height:16px;overflow:hidden"><span style="display:inline-block;transform:scaleX(0.93);transform-origin:100% 50%">2</span></div><div class="t" style="left:552px;top:110px;width:66px;text-align:right;font-size:12px;height:16px;overflow:hidden"><span style="display:inline-block;transform:scaleX(0.93);transform-origin:100% 50%">3</span></div><div class="t" style="left:619px;top:110px;width:66px;text-align:right;font-size:12px;height:16px;overflow:hidden"><span style="display:inline-block;transform:scaleX(0.93);transform-origin:100% 50%">0</span></div><div class="t" style="left:686px;top:110px;width:66px;text-align:right;font-size:12px;height:16px;overflow:hidden"><span style="display:inline-block;transform:scaleX(0.93);transform-origin:100% 50%">394</span></div><div class="t" style="left:753px;top:110px;width:66px;text-align:right;font-size:12px;height:16px;overflow:hidden"><span style="display:inline-block;transform:scaleX(0.93);transform-origin:100% 50%">7</span></div><div class="t" style="left:820px;top:110px;width:66px;text-align:right;font-size:12px;height:16px;overflow:hidden"><span style="display:inline-block;transform:scaleX(0.93);transform-origin:100% 50%">0</span></div><div class="t" style="left:887px;top:110px;width:66px;text-align:right;font-size:12px;height:16px;overflow:hidden"><span style="display:inline-block;transform:scaleX(0.93);transform-origin:100% 50%">1824</span></div><div class="a" style="left:268px;top:126px;width:16px;height:16px;background:#ECE9D8;border-left:1px solid #fff;border-top:1px solid #fff;border-right:1px solid #000;border-bottom:1px solid #000"></div><div class="a" style="left:284px;top:141px;width:719px;height:1px;background:#C0C0C0"></div><div class="t" style="left:284px;top:126px;width:66px;text-align:right;font-size:12px;height:16px;overflow:hidden"><span style="display:inline-block;transform:scaleX(0.93);transform-origin:100% 50%">1825</span></div><div class="t" style="left:351px;top:126px;width:66px;text-align:right;font-size:12px;height:16px;overflow:hidden"><span style="display:inline-block;transform:scaleX(0.93);transform-origin:100% 50%">18</span></div><div class="t" style="left:418px;top:126px;width:66px;text-align:right;font-size:12px;height:16px;overflow:hidden"><span style="display:inline-block;transform:scaleX(0.93);transform-origin:100% 50%">1825</span></div><div class="t" style="left:485px;top:126px;width:66px;text-align:right;font-size:12px;height:16px;overflow:hidden"><span style="display:inline-block;transform:scaleX(0.93);transform-origin:100% 50%">2</span></div><div class="t" style="left:552px;top:126px;width:66px;text-align:right;font-size:12px;height:16px;overflow:hidden"><span style="display:inline-block;transform:scaleX(0.93);transform-origin:100% 50%">5</span></div><div class="t" style="left:619px;top:126px;width:66px;text-align:right;font-size:12px;height:16px;overflow:hidden"><span style="display:inline-block;transform:scaleX(0.93);transform-origin:100% 50%">0</span></div><div class="t" style="left:686px;top:126px;width:66px;text-align:right;font-size:12px;height:16px;overflow:hidden"><span style="display:inline-block;transform:scaleX(0.93);transform-origin:100% 50%">291</span></div><div class="t" style="left:753px;top:126px;width:66px;text-align:right;font-size:12px;height:16px;overflow:hidden"><span style="display:inline-block;transform:scaleX(0.93);transform-origin:100% 50%">7</span></div><div class="t" style="left:820px;top:126px;width:66px;text-align:right;font-size:12px;height:16px;overflow:hidden"><span style="display:inline-block;transform:scaleX(0.93);transform-origin:100% 50%">1</span></div><div class="t" style="left:887px;top:126px;width:66px;text-align:right;font-size:12px;height:16px;overflow:hidden"><span style="display:inline-block;transform:scaleX(0.93);transform-origin:100% 50%">1825</span></div><div class="a" style="left:268px;top:142px;width:16px;height:16px;background:#ECE9D8;border-left:1px solid #fff;border-top:1px solid #fff;border-right:1px solid #000;border-bottom:1px solid #000"></div><div class="a" style="left:284px;top:157px;width:719px;height:1px;background:#C0C0C0"></div><div class="t" style="left:284px;top:142px;width:66px;text-align:right;font-size:12px;height:16px;overflow:hidden"><span style="display:inline-block;transform:scaleX(0.93);transform-origin:100% 50%">1826</span></div><div class="t" style="left:351px;top:142px;width:66px;text-align:right;font-size:12px;height:16px;overflow:hidden"><span style="display:inline-block;transform:scaleX(0.93);transform-origin:100% 50%">18</span></div><div class="t" style="left:418px;top:142px;width:66px;text-align:right;font-size:12px;height:16px;overflow:hidden"><span style="display:inline-block;transform:scaleX(0.93);transform-origin:100% 50%">1826</span></div><div class="t" style="left:485px;top:142px;width:66px;text-align:right;font-size:12px;height:16px;overflow:hidden"><span style="display:inline-block;transform:scaleX(0.93);transform-origin:100% 50%">0</span></div><div class="t" style="left:552px;top:142px;width:66px;text-align:right;font-size:12px;height:16px;overflow:hidden"><span style="display:inline-block;transform:scaleX(0.93);transform-origin:100% 50%">5</span></div><div class="t" style="left:619px;top:142px;width:66px;text-align:right;font-size:12px;height:16px;overflow:hidden"><span style="display:inline-block;transform:scaleX(0.93);transform-origin:100% 50%">0</span></div><div class="t" style="left:686px;top:142px;width:66px;text-align:right;font-size:12px;height:16px;overflow:hidden"><span style="display:inline-block;transform:scaleX(0.93);transform-origin:100% 50%">252</span></div><div class="t" style="left:753px;top:142px;width:66px;text-align:right;font-size:12px;height:16px;overflow:hidden"><span style="display:inline-block;transform:scaleX(0.93);transform-origin:100% 50%">17</span></div><div class="t" style="left:820px;top:142px;width:66px;text-align:right;font-size:12px;height:16px;overflow:hidden"><span style="display:inline-block;transform:scaleX(0.93);transform-origin:100% 50%">1</span></div><div class="t" style="left:887px;top:142px;width:66px;text-align:right;font-size:12px;height:16px;overflow:hidden"><span style="display:inline-block;transform:scaleX(0.93);transform-origin:100% 50%">1826</span></div><div class="a" style="left:268px;top:158px;width:16px;height:16px;background:#ECE9D8;border-left:1px solid #fff;border-top:1px solid #fff;border-right:1px solid #000;border-bottom:1px solid #000"></div><div class="a" style="left:284px;top:173px;width:719px;height:1px;background:#C0C0C0"></div><div class="t" style="left:284px;top:158px;width:66px;text-align:right;font-size:12px;height:16px;overflow:hidden"><span style="display:inline-block;transform:scaleX(0.93);transform-origin:100% 50%">1827</span></div><div class="t" style="left:351px;top:158px;width:66px;text-align:right;font-size:12px;height:16px;overflow:hidden"><span style="display:inline-block;transform:scaleX(0.93);transform-origin:100% 50%">18</span></div><div class="t" style="left:418px;top:158px;width:66px;text-align:right;font-size:12px;height:16px;overflow:hidden"><span style="display:inline-block;transform:scaleX(0.93);transform-origin:100% 50%">1827</span></div><div class="t" style="left:485px;top:158px;width:66px;text-align:right;font-size:12px;height:16px;overflow:hidden"><span style="display:inline-block;transform:scaleX(0.93);transform-origin:100% 50%">2</span></div><div class="t" style="left:552px;top:158px;width:66px;text-align:right;font-size:12px;height:16px;overflow:hidden"><span style="display:inline-block;transform:scaleX(0.93);transform-origin:100% 50%">5</span></div><div class="t" style="left:619px;top:158px;width:66px;text-align:right;font-size:12px;height:16px;overflow:hidden"><span style="display:inline-block;transform:scaleX(0.93);transform-origin:100% 50%">0</span></div><div class="t" style="left:686px;top:158px;width:66px;text-align:right;font-size:12px;height:16px;overflow:hidden"><span style="display:inline-block;transform:scaleX(0.93);transform-origin:100% 50%">303</span></div><div class="t" style="left:753px;top:158px;width:66px;text-align:right;font-size:12px;height:16px;overflow:hidden"><span style="display:inline-block;transform:scaleX(0.93);transform-origin:100% 50%">7</span></div><div class="t" style="left:820px;top:158px;width:66px;text-align:right;font-size:12px;height:16px;overflow:hidden"><span style="display:inline-block;transform:scaleX(0.93);transform-origin:100% 50%">1</span></div><div class="t" style="left:887px;top:158px;width:66px;text-align:right;font-size:12px;height:16px;overflow:hidden"><span style="display:inline-block;transform:scaleX(0.93);transform-origin:100% 50%">1827</span></div><div class="a" style="left:268px;top:174px;width:16px;height:16px;background:#ECE9D8;border-left:1px solid #fff;border-top:1px solid #fff;border-right:1px solid #000;border-bottom:1px solid #000"></div><div class="a" style="left:284px;top:189px;width:719px;height:1px;background:#C0C0C0"></div><div class="t" style="left:284px;top:174px;width:66px;text-align:right;font-size:12px;height:16px;overflow:hidden"><span style="display:inline-block;transform:scaleX(0.93);transform-origin:100% 50%">1828</span></div><div class="t" style="left:351px;top:174px;width:66px;text-align:right;font-size:12px;height:16px;overflow:hidden"><span style="display:inline-block;transform:scaleX(0.93);transform-origin:100% 50%">18</span></div><div class="t" style="left:418px;top:174px;width:66px;text-align:right;font-size:12px;height:16px;overflow:hidden"><span style="display:inline-block;transform:scaleX(0.93);transform-origin:100% 50%">1828</span></div><div class="t" style="left:485px;top:174px;width:66px;text-align:right;font-size:12px;height:16px;overflow:hidden"><span style="display:inline-block;transform:scaleX(0.93);transform-origin:100% 50%">2</span></div><div class="t" style="left:552px;top:174px;width:66px;text-align:right;font-size:12px;height:16px;overflow:hidden"><span style="display:inline-block;transform:scaleX(0.93);transform-origin:100% 50%">5</span></div><div class="t" style="left:619px;top:174px;width:66px;text-align:right;font-size:12px;height:16px;overflow:hidden"><span style="display:inline-block;transform:scaleX(0.93);transform-origin:100% 50%">0</span></div><div class="t" style="left:686px;top:174px;width:66px;text-align:right;font-size:12px;height:16px;overflow:hidden"><span style="display:inline-block;transform:scaleX(0.93);transform-origin:100% 50%">145</span></div><div class="t" style="left:753px;top:174px;width:66px;text-align:right;font-size:12px;height:16px;overflow:hidden"><span style="display:inline-block;transform:scaleX(0.93);transform-origin:100% 50%">40</span></div><div class="t" style="left:820px;top:174px;width:66px;text-align:right;font-size:12px;height:16px;overflow:hidden"><span style="display:inline-block;transform:scaleX(0.93);transform-origin:100% 50%">1</span></div><div class="t" style="left:887px;top:174px;width:66px;text-align:right;font-size:12px;height:16px;overflow:hidden"><span style="display:inline-block;transform:scaleX(0.93);transform-origin:100% 50%">1828</span></div><div class="a" style="left:268px;top:190px;width:16px;height:16px;background:#ECE9D8;border-left:1px solid #fff;border-top:1px solid #fff;border-right:1px solid #000;border-bottom:1px solid #000"></div><div class="a" style="left:284px;top:205px;width:719px;height:1px;background:#C0C0C0"></div><div class="t" style="left:284px;top:190px;width:66px;text-align:right;font-size:12px;height:16px;overflow:hidden"><span style="display:inline-block;transform:scaleX(0.93);transform-origin:100% 50%">1832</span></div><div class="t" style="left:351px;top:190px;width:66px;text-align:right;font-size:12px;height:16px;overflow:hidden"><span style="display:inline-block;transform:scaleX(0.93);transform-origin:100% 50%">18</span></div><div class="t" style="left:418px;top:190px;width:66px;text-align:right;font-size:12px;height:16px;overflow:hidden"><span style="display:inline-block;transform:scaleX(0.93);transform-origin:100% 50%">1832</span></div><div class="t" style="left:485px;top:190px;width:66px;text-align:right;font-size:12px;height:16px;overflow:hidden"><span style="display:inline-block;transform:scaleX(0.93);transform-origin:100% 50%">2</span></div><div class="t" style="left:552px;top:190px;width:66px;text-align:right;font-size:12px;height:16px;overflow:hidden"><span style="display:inline-block;transform:scaleX(0.93);transform-origin:100% 50%">5</span></div><div class="t" style="left:619px;top:190px;width:66px;text-align:right;font-size:12px;height:16px;overflow:hidden"><span style="display:inline-block;transform:scaleX(0.93);transform-origin:100% 50%">0</span></div><div class="t" style="left:686px;top:190px;width:66px;text-align:right;font-size:12px;height:16px;overflow:hidden"><span style="display:inline-block;transform:scaleX(0.93);transform-origin:100% 50%">161</span></div><div class="t" style="left:753px;top:190px;width:66px;text-align:right;font-size:12px;height:16px;overflow:hidden"><span style="display:inline-block;transform:scaleX(0.93);transform-origin:100% 50%">7</span></div><div class="t" style="left:820px;top:190px;width:66px;text-align:right;font-size:12px;height:16px;overflow:hidden"><span style="display:inline-block;transform:scaleX(0.93);transform-origin:100% 50%">1</span></div><div class="t" style="left:887px;top:190px;width:66px;text-align:right;font-size:12px;height:16px;overflow:hidden"><span style="display:inline-block;transform:scaleX(0.93);transform-origin:100% 50%">1832</span></div><div class="a" style="left:268px;top:206px;width:16px;height:16px;background:#ECE9D8;border-left:1px solid #fff;border-top:1px solid #fff;border-right:1px solid #000;border-bottom:1px solid #000"></div><div class="a" style="left:284px;top:221px;width:719px;height:1px;background:#C0C0C0"></div><div class="t" style="left:284px;top:206px;width:66px;text-align:right;font-size:12px;height:16px;overflow:hidden"><span style="display:inline-block;transform:scaleX(0.93);transform-origin:100% 50%">1834</span></div><div class="t" style="left:351px;top:206px;width:66px;text-align:right;font-size:12px;height:16px;overflow:hidden"><span style="display:inline-block;transform:scaleX(0.93);transform-origin:100% 50%">18</span></div><div class="t" style="left:418px;top:206px;width:66px;text-align:right;font-size:12px;height:16px;overflow:hidden"><span style="display:inline-block;transform:scaleX(0.93);transform-origin:100% 50%">1834</span></div><div class="t" style="left:485px;top:206px;width:66px;text-align:right;font-size:12px;height:16px;overflow:hidden"><span style="display:inline-block;transform:scaleX(0.93);transform-origin:100% 50%">2</span></div><div class="t" style="left:552px;top:206px;width:66px;text-align:right;font-size:12px;height:16px;overflow:hidden"><span style="display:inline-block;transform:scaleX(0.93);transform-origin:100% 50%">5</span></div><div class="t" style="left:619px;top:206px;width:66px;text-align:right;font-size:12px;height:16px;overflow:hidden"><span style="display:inline-block;transform:scaleX(0.93);transform-origin:100% 50%">0</span></div><div class="t" style="left:686px;top:206px;width:66px;text-align:right;font-size:12px;height:16px;overflow:hidden"><span style="display:inline-block;transform:scaleX(0.93);transform-origin:100% 50%">64</span></div><div class="t" style="left:753px;top:206px;width:66px;text-align:right;font-size:12px;height:16px;overflow:hidden"><span style="display:inline-block;transform:scaleX(0.93);transform-origin:100% 50%">8</span></div><div class="t" style="left:820px;top:206px;width:66px;text-align:right;font-size:12px;height:16px;overflow:hidden"><span style="display:inline-block;transform:scaleX(0.93);transform-origin:100% 50%">1</span></div><div class="t" style="left:887px;top:206px;width:66px;text-align:right;font-size:12px;height:16px;overflow:hidden"><span style="display:inline-block;transform:scaleX(0.93);transform-origin:100% 50%">1834</span></div><div class="a" style="left:268px;top:222px;width:16px;height:16px;background:#ECE9D8;border-left:1px solid #fff;border-top:1px solid #fff;border-right:1px solid #000;border-bottom:1px solid #000"></div><div class="a" style="left:284px;top:237px;width:719px;height:1px;background:#C0C0C0"></div><div class="t" style="left:284px;top:222px;width:66px;text-align:right;font-size:12px;height:16px;overflow:hidden"><span style="display:inline-block;transform:scaleX(0.93);transform-origin:100% 50%">1837</span></div><div class="t" style="left:351px;top:222px;width:66px;text-align:right;font-size:12px;height:16px;overflow:hidden"><span style="display:inline-block;transform:scaleX(0.93);transform-origin:100% 50%">9</span></div><div class="t" style="left:418px;top:222px;width:66px;text-align:right;font-size:12px;height:16px;overflow:hidden"><span style="display:inline-block;transform:scaleX(0.93);transform-origin:100% 50%">1837</span></div><div class="t" style="left:485px;top:222px;width:66px;text-align:right;font-size:12px;height:16px;overflow:hidden"><span style="display:inline-block;transform:scaleX(0.93);transform-origin:100% 50%">0</span></div><div class="t" style="left:552px;top:222px;width:66px;text-align:right;font-size:12px;height:16px;overflow:hidden"><span style="display:inline-block;transform:scaleX(0.93);transform-origin:100% 50%">5</span></div><div class="t" style="left:619px;top:222px;width:66px;text-align:right;font-size:12px;height:16px;overflow:hidden"><span style="display:inline-block;transform:scaleX(0.93);transform-origin:100% 50%">0</span></div><div class="t" style="left:686px;top:222px;width:66px;text-align:right;font-size:12px;height:16px;overflow:hidden"><span style="display:inline-block;transform:scaleX(0.93);transform-origin:100% 50%">227</span></div><div class="t" style="left:753px;top:222px;width:66px;text-align:right;font-size:12px;height:16px;overflow:hidden"><span style="display:inline-block;transform:scaleX(0.93);transform-origin:100% 50%">7</span></div><div class="t" style="left:820px;top:222px;width:66px;text-align:right;font-size:12px;height:16px;overflow:hidden"><span style="display:inline-block;transform:scaleX(0.93);transform-origin:100% 50%">0</span></div><div class="t" style="left:887px;top:222px;width:66px;text-align:right;font-size:12px;height:16px;overflow:hidden"><span style="display:inline-block;transform:scaleX(0.93);transform-origin:100% 50%">1837</span></div><div class="a" style="left:268px;top:238px;width:16px;height:16px;background:#ECE9D8;border-left:1px solid #fff;border-top:1px solid #fff;border-right:1px solid #000;border-bottom:1px solid #000"></div><div class="a" style="left:284px;top:253px;width:719px;height:1px;background:#C0C0C0"></div><div class="t" style="left:284px;top:238px;width:66px;text-align:right;font-size:12px;height:16px;overflow:hidden"><span style="display:inline-block;transform:scaleX(0.93);transform-origin:100% 50%">1838</span></div><div class="t" style="left:351px;top:238px;width:66px;text-align:right;font-size:12px;height:16px;overflow:hidden"><span style="display:inline-block;transform:scaleX(0.93);transform-origin:100% 50%">9</span></div><div class="t" style="left:418px;top:238px;width:66px;text-align:right;font-size:12px;height:16px;overflow:hidden"><span style="display:inline-block;transform:scaleX(0.93);transform-origin:100% 50%">1838</span></div><div class="t" style="left:485px;top:238px;width:66px;text-align:right;font-size:12px;height:16px;overflow:hidden"><span style="display:inline-block;transform:scaleX(0.93);transform-origin:100% 50%">0</span></div><div class="t" style="left:552px;top:238px;width:66px;text-align:right;font-size:12px;height:16px;overflow:hidden"><span style="display:inline-block;transform:scaleX(0.93);transform-origin:100% 50%">5</span></div><div class="t" style="left:619px;top:238px;width:66px;text-align:right;font-size:12px;height:16px;overflow:hidden"><span style="display:inline-block;transform:scaleX(0.93);transform-origin:100% 50%">0</span></div><div class="t" style="left:686px;top:238px;width:66px;text-align:right;font-size:12px;height:16px;overflow:hidden"><span style="display:inline-block;transform:scaleX(0.93);transform-origin:100% 50%">228</span></div><div class="t" style="left:753px;top:238px;width:66px;text-align:right;font-size:12px;height:16px;overflow:hidden"><span style="display:inline-block;transform:scaleX(0.93);transform-origin:100% 50%">7</span></div><div class="t" style="left:820px;top:238px;width:66px;text-align:right;font-size:12px;height:16px;overflow:hidden"><span style="display:inline-block;transform:scaleX(0.93);transform-origin:100% 50%">0</span></div><div class="t" style="left:887px;top:238px;width:66px;text-align:right;font-size:12px;height:16px;overflow:hidden"><span style="display:inline-block;transform:scaleX(0.93);transform-origin:100% 50%">1838</span></div><div class="a" style="left:268px;top:254px;width:16px;height:16px;background:#ECE9D8;border-left:1px solid #fff;border-top:1px solid #fff;border-right:1px solid #000;border-bottom:1px solid #000"></div><div class="a" style="left:284px;top:269px;width:719px;height:1px;background:#C0C0C0"></div><div class="t" style="left:284px;top:254px;width:66px;text-align:right;font-size:12px;height:16px;overflow:hidden"><span style="display:inline-block;transform:scaleX(0.93);transform-origin:100% 50%">1839</span></div><div class="t" style="left:351px;top:254px;width:66px;text-align:right;font-size:12px;height:16px;overflow:hidden"><span style="display:inline-block;transform:scaleX(0.93);transform-origin:100% 50%">10</span></div><div class="t" style="left:418px;top:254px;width:66px;text-align:right;font-size:12px;height:16px;overflow:hidden"><span style="display:inline-block;transform:scaleX(0.93);transform-origin:100% 50%">1839</span></div><div class="t" style="left:485px;top:254px;width:66px;text-align:right;font-size:12px;height:16px;overflow:hidden"><span style="display:inline-block;transform:scaleX(0.93);transform-origin:100% 50%">2</span></div><div class="t" style="left:552px;top:254px;width:66px;text-align:right;font-size:12px;height:16px;overflow:hidden"><span style="display:inline-block;transform:scaleX(0.93);transform-origin:100% 50%">5</span></div><div class="t" style="left:619px;top:254px;width:66px;text-align:right;font-size:12px;height:16px;overflow:hidden"><span style="display:inline-block;transform:scaleX(0.93);transform-origin:100% 50%">0</span></div><div class="t" style="left:686px;top:254px;width:66px;text-align:right;font-size:12px;height:16px;overflow:hidden"><span style="display:inline-block;transform:scaleX(0.93);transform-origin:100% 50%">302</span></div><div class="t" style="left:753px;top:254px;width:66px;text-align:right;font-size:12px;height:16px;overflow:hidden"><span style="display:inline-block;transform:scaleX(0.93);transform-origin:100% 50%">37</span></div><div class="t" style="left:820px;top:254px;width:66px;text-align:right;font-size:12px;height:16px;overflow:hidden"><span style="display:inline-block;transform:scaleX(0.93);transform-origin:100% 50%">1</span></div><div class="t" style="left:887px;top:254px;width:66px;text-align:right;font-size:12px;height:16px;overflow:hidden"><span style="display:inline-block;transform:scaleX(0.93);transform-origin:100% 50%">1839</span></div><div class="a" style="left:268px;top:270px;width:16px;height:16px;background:#ECE9D8;border-left:1px solid #fff;border-top:1px solid #fff;border-right:1px solid #000;border-bottom:1px solid #000"></div><div class="a" style="left:284px;top:285px;width:719px;height:1px;background:#C0C0C0"></div><div class="t" style="left:284px;top:270px;width:66px;text-align:right;font-size:12px;height:16px;overflow:hidden"><span style="display:inline-block;transform:scaleX(0.93);transform-origin:100% 50%">1842</span></div><div class="t" style="left:351px;top:270px;width:66px;text-align:right;font-size:12px;height:16px;overflow:hidden"><span style="display:inline-block;transform:scaleX(0.93);transform-origin:100% 50%">9</span></div><div class="t" style="left:418px;top:270px;width:66px;text-align:right;font-size:12px;height:16px;overflow:hidden"><span style="display:inline-block;transform:scaleX(0.93);transform-origin:100% 50%">1842</span></div><div class="t" style="left:485px;top:270px;width:66px;text-align:right;font-size:12px;height:16px;overflow:hidden"><span style="display:inline-block;transform:scaleX(0.93);transform-origin:100% 50%">0</span></div><div class="t" style="left:552px;top:270px;width:66px;text-align:right;font-size:12px;height:16px;overflow:hidden"><span style="display:inline-block;transform:scaleX(0.93);transform-origin:100% 50%">5</span></div><div class="t" style="left:619px;top:270px;width:66px;text-align:right;font-size:12px;height:16px;overflow:hidden"><span style="display:inline-block;transform:scaleX(0.93);transform-origin:100% 50%">0</span></div><div class="t" style="left:686px;top:270px;width:66px;text-align:right;font-size:12px;height:16px;overflow:hidden"><span style="display:inline-block;transform:scaleX(0.93);transform-origin:100% 50%">169</span></div><div class="t" style="left:753px;top:270px;width:66px;text-align:right;font-size:12px;height:16px;overflow:hidden"><span style="display:inline-block;transform:scaleX(0.93);transform-origin:100% 50%">19</span></div><div class="t" style="left:820px;top:270px;width:66px;text-align:right;font-size:12px;height:16px;overflow:hidden"><span style="display:inline-block;transform:scaleX(0.93);transform-origin:100% 50%">0</span></div><div class="t" style="left:887px;top:270px;width:66px;text-align:right;font-size:12px;height:16px;overflow:hidden"><span style="display:inline-block;transform:scaleX(0.93);transform-origin:100% 50%">1842</span></div><div class="a" style="left:268px;top:286px;width:16px;height:16px;background:#ECE9D8;border-left:1px solid #fff;border-top:1px solid #fff;border-right:1px solid #000;border-bottom:1px solid #000"></div><div class="a" style="left:284px;top:301px;width:719px;height:1px;background:#C0C0C0"></div><div class="t" style="left:284px;top:286px;width:66px;text-align:right;font-size:12px;height:16px;overflow:hidden"><span style="display:inline-block;transform:scaleX(0.93);transform-origin:100% 50%">1843</span></div><div class="t" style="left:351px;top:286px;width:66px;text-align:right;font-size:12px;height:16px;overflow:hidden"><span style="display:inline-block;transform:scaleX(0.93);transform-origin:100% 50%">9</span></div><div class="t" style="left:418px;top:286px;width:66px;text-align:right;font-size:12px;height:16px;overflow:hidden"><span style="display:inline-block;transform:scaleX(0.93);transform-origin:100% 50%">1843</span></div><div class="t" style="left:485px;top:286px;width:66px;text-align:right;font-size:12px;height:16px;overflow:hidden"><span style="display:inline-block;transform:scaleX(0.93);transform-origin:100% 50%">2</span></div><div class="t" style="left:552px;top:286px;width:66px;text-align:right;font-size:12px;height:16px;overflow:hidden"><span style="display:inline-block;transform:scaleX(0.93);transform-origin:100% 50%">5</span></div><div class="t" style="left:619px;top:286px;width:66px;text-align:right;font-size:12px;height:16px;overflow:hidden"><span style="display:inline-block;transform:scaleX(0.93);transform-origin:100% 50%">0</span></div><div class="t" style="left:686px;top:286px;width:66px;text-align:right;font-size:12px;height:16px;overflow:hidden"><span style="display:inline-block;transform:scaleX(0.93);transform-origin:100% 50%">364</span></div><div class="t" style="left:753px;top:286px;width:66px;text-align:right;font-size:12px;height:16px;overflow:hidden"><span style="display:inline-block;transform:scaleX(0.93);transform-origin:100% 50%">18</span></div><div class="t" style="left:820px;top:286px;width:66px;text-align:right;font-size:12px;height:16px;overflow:hidden"><span style="display:inline-block;transform:scaleX(0.93);transform-origin:100% 50%">0</span></div><div class="t" style="left:887px;top:286px;width:66px;text-align:right;font-size:12px;height:16px;overflow:hidden"><span style="display:inline-block;transform:scaleX(0.93);transform-origin:100% 50%">1843</span></div><div class="a" style="left:268px;top:302px;width:16px;height:16px;background:#ECE9D8;border-left:1px solid #fff;border-top:1px solid #fff;border-right:1px solid #000;border-bottom:1px solid #000"></div><div class="a" style="left:284px;top:317px;width:719px;height:1px;background:#C0C0C0"></div><div class="t" style="left:284px;top:302px;width:66px;text-align:right;font-size:12px;height:16px;overflow:hidden"><span style="display:inline-block;transform:scaleX(0.93);transform-origin:100% 50%">1844</span></div><div class="t" style="left:351px;top:302px;width:66px;text-align:right;font-size:12px;height:16px;overflow:hidden"><span style="display:inline-block;transform:scaleX(0.93);transform-origin:100% 50%">9</span></div><div class="t" style="left:418px;top:302px;width:66px;text-align:right;font-size:12px;height:16px;overflow:hidden"><span style="display:inline-block;transform:scaleX(0.93);transform-origin:100% 50%">1844</span></div><div class="t" style="left:485px;top:302px;width:66px;text-align:right;font-size:12px;height:16px;overflow:hidden"><span style="display:inline-block;transform:scaleX(0.93);transform-origin:100% 50%">2</span></div><div class="t" style="left:552px;top:302px;width:66px;text-align:right;font-size:12px;height:16px;overflow:hidden"><span style="display:inline-block;transform:scaleX(0.93);transform-origin:100% 50%">5</span></div><div class="t" style="left:619px;top:302px;width:66px;text-align:right;font-size:12px;height:16px;overflow:hidden"><span style="display:inline-block;transform:scaleX(0.93);transform-origin:100% 50%">0</span></div><div class="t" style="left:686px;top:302px;width:66px;text-align:right;font-size:12px;height:16px;overflow:hidden"><span style="display:inline-block;transform:scaleX(0.93);transform-origin:100% 50%">502</span></div><div class="t" style="left:753px;top:302px;width:66px;text-align:right;font-size:12px;height:16px;overflow:hidden"><span style="display:inline-block;transform:scaleX(0.93);transform-origin:100% 50%">3</span></div><div class="t" style="left:820px;top:302px;width:66px;text-align:right;font-size:12px;height:16px;overflow:hidden"><span style="display:inline-block;transform:scaleX(0.93);transform-origin:100% 50%">1</span></div><div class="t" style="left:887px;top:302px;width:66px;text-align:right;font-size:12px;height:16px;overflow:hidden"><span style="display:inline-block;transform:scaleX(0.93);transform-origin:100% 50%">1844</span></div><div class="a" style="left:268px;top:318px;width:16px;height:16px;background:#ECE9D8;border-left:1px solid #fff;border-top:1px solid #fff;border-right:1px solid #000;border-bottom:1px solid #000"></div><div class="a" style="left:284px;top:333px;width:719px;height:1px;background:#C0C0C0"></div><div class="t" style="left:284px;top:318px;width:66px;text-align:right;font-size:12px;height:16px;overflow:hidden"><span style="display:inline-block;transform:scaleX(0.93);transform-origin:100% 50%">1845</span></div><div class="t" style="left:351px;top:318px;width:66px;text-align:right;font-size:12px;height:16px;overflow:hidden"><span style="display:inline-block;transform:scaleX(0.93);transform-origin:100% 50%">9</span></div><div class="t" style="left:418px;top:318px;width:66px;text-align:right;font-size:12px;height:16px;overflow:hidden"><span style="display:inline-block;transform:scaleX(0.93);transform-origin:100% 50%">1845</span></div><div class="t" style="left:485px;top:318px;width:66px;text-align:right;font-size:12px;height:16px;overflow:hidden"><span style="display:inline-block;transform:scaleX(0.93);transform-origin:100% 50%">0</span></div><div class="t" style="left:552px;top:318px;width:66px;text-align:right;font-size:12px;height:16px;overflow:hidden"><span style="display:inline-block;transform:scaleX(0.93);transform-origin:100% 50%">5</span></div><div class="t" style="left:619px;top:318px;width:66px;text-align:right;font-size:12px;height:16px;overflow:hidden"><span style="display:inline-block;transform:scaleX(0.93);transform-origin:100% 50%">0</span></div><div class="t" style="left:686px;top:318px;width:66px;text-align:right;font-size:12px;height:16px;overflow:hidden"><span style="display:inline-block;transform:scaleX(0.93);transform-origin:100% 50%">470</span></div><div class="t" style="left:753px;top:318px;width:66px;text-align:right;font-size:12px;height:16px;overflow:hidden"><span style="display:inline-block;transform:scaleX(0.93);transform-origin:100% 50%">7</span></div><div class="t" style="left:820px;top:318px;width:66px;text-align:right;font-size:12px;height:16px;overflow:hidden"><span style="display:inline-block;transform:scaleX(0.93);transform-origin:100% 50%">0</span></div><div class="t" style="left:887px;top:318px;width:66px;text-align:right;font-size:12px;height:16px;overflow:hidden"><span style="display:inline-block;transform:scaleX(0.93);transform-origin:100% 50%">1845</span></div><div class="a" style="left:268px;top:334px;width:16px;height:16px;background:#ECE9D8;border-left:1px solid #fff;border-top:1px solid #fff;border-right:1px solid #000;border-bottom:1px solid #000"></div><div class="a" style="left:284px;top:349px;width:719px;height:1px;background:#C0C0C0"></div><div class="t" style="left:284px;top:334px;width:66px;text-align:right;font-size:12px;height:16px;overflow:hidden"><span style="display:inline-block;transform:scaleX(0.93);transform-origin:100% 50%">1846</span></div><div class="t" style="left:351px;top:334px;width:66px;text-align:right;font-size:12px;height:16px;overflow:hidden"><span style="display:inline-block;transform:scaleX(0.93);transform-origin:100% 50%">10</span></div><div class="t" style="left:418px;top:334px;width:66px;text-align:right;font-size:12px;height:16px;overflow:hidden"><span style="display:inline-block;transform:scaleX(0.93);transform-origin:100% 50%">1846</span></div><div class="t" style="left:485px;top:334px;width:66px;text-align:right;font-size:12px;height:16px;overflow:hidden"><span style="display:inline-block;transform:scaleX(0.93);transform-origin:100% 50%">2</span></div><div class="t" style="left:552px;top:334px;width:66px;text-align:right;font-size:12px;height:16px;overflow:hidden"><span style="display:inline-block;transform:scaleX(0.93);transform-origin:100% 50%">5</span></div><div class="t" style="left:619px;top:334px;width:66px;text-align:right;font-size:12px;height:16px;overflow:hidden"><span style="display:inline-block;transform:scaleX(0.93);transform-origin:100% 50%">0</span></div><div class="t" style="left:686px;top:334px;width:66px;text-align:right;font-size:12px;height:16px;overflow:hidden"><span style="display:inline-block;transform:scaleX(0.93);transform-origin:100% 50%">68</span></div><div class="t" style="left:753px;top:334px;width:66px;text-align:right;font-size:12px;height:16px;overflow:hidden"><span style="display:inline-block;transform:scaleX(0.93);transform-origin:100% 50%">7</span></div><div class="t" style="left:820px;top:334px;width:66px;text-align:right;font-size:12px;height:16px;overflow:hidden"><span style="display:inline-block;transform:scaleX(0.93);transform-origin:100% 50%">1</span></div><div class="t" style="left:887px;top:334px;width:66px;text-align:right;font-size:12px;height:16px;overflow:hidden"><span style="display:inline-block;transform:scaleX(0.93);transform-origin:100% 50%">1846</span></div><div class="a" style="left:268px;top:350px;width:16px;height:16px;background:#ECE9D8;border-left:1px solid #fff;border-top:1px solid #fff;border-right:1px solid #000;border-bottom:1px solid #000"></div><div class="a" style="left:284px;top:365px;width:719px;height:1px;background:#C0C0C0"></div><div class="t" style="left:284px;top:350px;width:66px;text-align:right;font-size:12px;height:16px;overflow:hidden"><span style="display:inline-block;transform:scaleX(0.93);transform-origin:100% 50%">1847</span></div><div class="t" style="left:351px;top:350px;width:66px;text-align:right;font-size:12px;height:16px;overflow:hidden"><span style="display:inline-block;transform:scaleX(0.93);transform-origin:100% 50%">10</span></div><div class="t" style="left:418px;top:350px;width:66px;text-align:right;font-size:12px;height:16px;overflow:hidden"><span style="display:inline-block;transform:scaleX(0.93);transform-origin:100% 50%">1847</span></div><div class="t" style="left:485px;top:350px;width:66px;text-align:right;font-size:12px;height:16px;overflow:hidden"><span style="display:inline-block;transform:scaleX(0.93);transform-origin:100% 50%">2</span></div><div class="t" style="left:552px;top:350px;width:66px;text-align:right;font-size:12px;height:16px;overflow:hidden"><span style="display:inline-block;transform:scaleX(0.93);transform-origin:100% 50%">5</span></div><div class="t" style="left:619px;top:350px;width:66px;text-align:right;font-size:12px;height:16px;overflow:hidden"><span style="display:inline-block;transform:scaleX(0.93);transform-origin:100% 50%">0</span></div><div class="t" style="left:686px;top:350px;width:66px;text-align:right;font-size:12px;height:16px;overflow:hidden"><span style="display:inline-block;transform:scaleX(0.93);transform-origin:100% 50%">372</span></div><div class="t" style="left:753px;top:350px;width:66px;text-align:right;font-size:12px;height:16px;overflow:hidden"><span style="display:inline-block;transform:scaleX(0.93);transform-origin:100% 50%">7</span></div><div class="t" style="left:820px;top:350px;width:66px;text-align:right;font-size:12px;height:16px;overflow:hidden"><span style="display:inline-block;transform:scaleX(0.93);transform-origin:100% 50%">1</span></div><div class="t" style="left:887px;top:350px;width:66px;text-align:right;font-size:12px;height:16px;overflow:hidden"><span style="display:inline-block;transform:scaleX(0.93);transform-origin:100% 50%">1847</span></div><div class="a" style="left:268px;top:366px;width:16px;height:16px;background:#ECE9D8;border-left:1px solid #fff;border-top:1px solid #fff;border-right:1px solid #000;border-bottom:1px solid #000"></div><div class="a" style="left:284px;top:381px;width:719px;height:1px;background:#C0C0C0"></div><div class="t" style="left:284px;top:366px;width:66px;text-align:right;font-size:12px;height:16px;overflow:hidden"><span style="display:inline-block;transform:scaleX(0.93);transform-origin:100% 50%">1848</span></div><div class="t" style="left:351px;top:366px;width:66px;text-align:right;font-size:12px;height:16px;overflow:hidden"><span style="display:inline-block;transform:scaleX(0.93);transform-origin:100% 50%">10</span></div><div class="t" style="left:418px;top:366px;width:66px;text-align:right;font-size:12px;height:16px;overflow:hidden"><span style="display:inline-block;transform:scaleX(0.93);transform-origin:100% 50%">1848</span></div><div class="t" style="left:485px;top:366px;width:66px;text-align:right;font-size:12px;height:16px;overflow:hidden"><span style="display:inline-block;transform:scaleX(0.93);transform-origin:100% 50%">2</span></div><div class="t" style="left:552px;top:366px;width:66px;text-align:right;font-size:12px;height:16px;overflow:hidden"><span style="display:inline-block;transform:scaleX(0.93);transform-origin:100% 50%">1</span></div><div class="t" style="left:619px;top:366px;width:66px;text-align:right;font-size:12px;height:16px;overflow:hidden"><span style="display:inline-block;transform:scaleX(0.93);transform-origin:100% 50%">0</span></div><div class="t" style="left:686px;top:366px;width:66px;text-align:right;font-size:12px;height:16px;overflow:hidden"><span style="display:inline-block;transform:scaleX(0.93);transform-origin:100% 50%">355</span></div><div class="t" style="left:753px;top:366px;width:66px;text-align:right;font-size:12px;height:16px;overflow:hidden"><span style="display:inline-block;transform:scaleX(0.93);transform-origin:100% 50%">7</span></div><div class="t" style="left:820px;top:366px;width:66px;text-align:right;font-size:12px;height:16px;overflow:hidden"><span style="display:inline-block;transform:scaleX(0.93);transform-origin:100% 50%">1</span></div><div class="t" style="left:887px;top:366px;width:66px;text-align:right;font-size:12px;height:16px;overflow:hidden"><span style="display:inline-block;transform:scaleX(0.93);transform-origin:100% 50%">1848</span></div><div class="a" style="left:268px;top:382px;width:16px;height:16px;background:#ECE9D8;border-left:1px solid #fff;border-top:1px solid #fff;border-right:1px solid #000;border-bottom:1px solid #000"></div><div class="a" style="left:284px;top:397px;width:719px;height:1px;background:#C0C0C0"></div><div class="t" style="left:284px;top:382px;width:66px;text-align:right;font-size:12px;height:16px;overflow:hidden"><span style="display:inline-block;transform:scaleX(0.93);transform-origin:100% 50%">1853</span></div><div class="t" style="left:351px;top:382px;width:66px;text-align:right;font-size:12px;height:16px;overflow:hidden"><span style="display:inline-block;transform:scaleX(0.93);transform-origin:100% 50%">6</span></div><div class="t" style="left:418px;top:382px;width:66px;text-align:right;font-size:12px;height:16px;overflow:hidden"><span style="display:inline-block;transform:scaleX(0.93);transform-origin:100% 50%">1853</span></div><div class="t" style="left:485px;top:382px;width:66px;text-align:right;font-size:12px;height:16px;overflow:hidden"><span style="display:inline-block;transform:scaleX(0.93);transform-origin:100% 50%">2</span></div><div class="t" style="left:552px;top:382px;width:66px;text-align:right;font-size:12px;height:16px;overflow:hidden"><span style="display:inline-block;transform:scaleX(0.93);transform-origin:100% 50%">5</span></div><div class="t" style="left:619px;top:382px;width:66px;text-align:right;font-size:12px;height:16px;overflow:hidden"><span style="display:inline-block;transform:scaleX(0.93);transform-origin:100% 50%">0</span></div><div class="t" style="left:686px;top:382px;width:66px;text-align:right;font-size:12px;height:16px;overflow:hidden"><span style="display:inline-block;transform:scaleX(0.93);transform-origin:100% 50%">529</span></div><div class="t" style="left:753px;top:382px;width:66px;text-align:right;font-size:12px;height:16px;overflow:hidden"><span style="display:inline-block;transform:scaleX(0.93);transform-origin:100% 50%">9</span></div><div class="t" style="left:820px;top:382px;width:66px;text-align:right;font-size:12px;height:16px;overflow:hidden"><span style="display:inline-block;transform:scaleX(0.93);transform-origin:100% 50%">1</span></div><div class="t" style="left:887px;top:382px;width:66px;text-align:right;font-size:12px;height:16px;overflow:hidden"><span style="display:inline-block;transform:scaleX(0.93);transform-origin:100% 50%">1853</span></div><div class="a" style="left:268px;top:398px;width:16px;height:16px;background:#ECE9D8;border-left:1px solid #fff;border-top:1px solid #fff;border-right:1px solid #000;border-bottom:1px solid #000"></div><div class="a" style="left:284px;top:413px;width:719px;height:1px;background:#C0C0C0"></div><div class="t" style="left:284px;top:398px;width:66px;text-align:right;font-size:12px;height:16px;overflow:hidden"><span style="display:inline-block;transform:scaleX(0.93);transform-origin:100% 50%">1854</span></div><div class="t" style="left:351px;top:398px;width:66px;text-align:right;font-size:12px;height:16px;overflow:hidden"><span style="display:inline-block;transform:scaleX(0.93);transform-origin:100% 50%">5</span></div><div class="t" style="left:418px;top:398px;width:66px;text-align:right;font-size:12px;height:16px;overflow:hidden"><span style="display:inline-block;transform:scaleX(0.93);transform-origin:100% 50%">1854</span></div><div class="t" style="left:485px;top:398px;width:66px;text-align:right;font-size:12px;height:16px;overflow:hidden"><span style="display:inline-block;transform:scaleX(0.93);transform-origin:100% 50%">2</span></div><div class="t" style="left:552px;top:398px;width:66px;text-align:right;font-size:12px;height:16px;overflow:hidden"><span style="display:inline-block;transform:scaleX(0.93);transform-origin:100% 50%">5</span></div><div class="t" style="left:619px;top:398px;width:66px;text-align:right;font-size:12px;height:16px;overflow:hidden"><span style="display:inline-block;transform:scaleX(0.93);transform-origin:100% 50%">0</span></div><div class="t" style="left:686px;top:398px;width:66px;text-align:right;font-size:12px;height:16px;overflow:hidden"><span style="display:inline-block;transform:scaleX(0.93);transform-origin:100% 50%">84</span></div><div class="t" style="left:753px;top:398px;width:66px;text-align:right;font-size:12px;height:16px;overflow:hidden"><span style="display:inline-block;transform:scaleX(0.93);transform-origin:100% 50%">7</span></div><div class="t" style="left:820px;top:398px;width:66px;text-align:right;font-size:12px;height:16px;overflow:hidden"><span style="display:inline-block;transform:scaleX(0.93);transform-origin:100% 50%">0</span></div><div class="t" style="left:887px;top:398px;width:66px;text-align:right;font-size:12px;height:16px;overflow:hidden"><span style="display:inline-block;transform:scaleX(0.93);transform-origin:100% 50%">1854</span></div><div class="a" style="left:268px;top:414px;width:16px;height:16px;background:#ECE9D8;border-left:1px solid #fff;border-top:1px solid #fff;border-right:1px solid #000;border-bottom:1px solid #000"></div><div class="a" style="left:284px;top:429px;width:719px;height:1px;background:#C0C0C0"></div><div class="t" style="left:284px;top:414px;width:66px;text-align:right;font-size:12px;height:16px;overflow:hidden"><span style="display:inline-block;transform:scaleX(0.93);transform-origin:100% 50%">1855</span></div><div class="t" style="left:351px;top:414px;width:66px;text-align:right;font-size:12px;height:16px;overflow:hidden"><span style="display:inline-block;transform:scaleX(0.93);transform-origin:100% 50%">5</span></div><div class="t" style="left:418px;top:414px;width:66px;text-align:right;font-size:12px;height:16px;overflow:hidden"><span style="display:inline-block;transform:scaleX(0.93);transform-origin:100% 50%">1855</span></div><div class="t" style="left:485px;top:414px;width:66px;text-align:right;font-size:12px;height:16px;overflow:hidden"><span style="display:inline-block;transform:scaleX(0.93);transform-origin:100% 50%">1</span></div><div class="t" style="left:552px;top:414px;width:66px;text-align:right;font-size:12px;height:16px;overflow:hidden"><span style="display:inline-block;transform:scaleX(0.93);transform-origin:100% 50%">5</span></div><div class="t" style="left:619px;top:414px;width:66px;text-align:right;font-size:12px;height:16px;overflow:hidden"><span style="display:inline-block;transform:scaleX(0.93);transform-origin:100% 50%">0</span></div><div class="t" style="left:686px;top:414px;width:66px;text-align:right;font-size:12px;height:16px;overflow:hidden"><span style="display:inline-block;transform:scaleX(0.93);transform-origin:100% 50%">43</span></div><div class="t" style="left:753px;top:414px;width:66px;text-align:right;font-size:12px;height:16px;overflow:hidden"><span style="display:inline-block;transform:scaleX(0.93);transform-origin:100% 50%">8</span></div><div class="t" style="left:820px;top:414px;width:66px;text-align:right;font-size:12px;height:16px;overflow:hidden"><span style="display:inline-block;transform:scaleX(0.93);transform-origin:100% 50%">0</span></div><div class="t" style="left:887px;top:414px;width:66px;text-align:right;font-size:12px;height:16px;overflow:hidden"><span style="display:inline-block;transform:scaleX(0.93);transform-origin:100% 50%">1855</span></div><div class="a" style="left:268px;top:430px;width:16px;height:16px;background:#ECE9D8;border-left:1px solid #fff;border-top:1px solid #fff;border-right:1px solid #000;border-bottom:1px solid #000"></div><div class="a" style="left:284px;top:445px;width:719px;height:1px;background:#C0C0C0"></div><div class="t" style="left:284px;top:430px;width:66px;text-align:right;font-size:12px;height:16px;overflow:hidden"><span style="display:inline-block;transform:scaleX(0.93);transform-origin:100% 50%">1856</span></div><div class="t" style="left:351px;top:430px;width:66px;text-align:right;font-size:12px;height:16px;overflow:hidden"><span style="display:inline-block;transform:scaleX(0.93);transform-origin:100% 50%">6</span></div><div class="t" style="left:418px;top:430px;width:66px;text-align:right;font-size:12px;height:16px;overflow:hidden"><span style="display:inline-block;transform:scaleX(0.93);transform-origin:100% 50%">1856</span></div><div class="t" style="left:485px;top:430px;width:66px;text-align:right;font-size:12px;height:16px;overflow:hidden"><span style="display:inline-block;transform:scaleX(0.93);transform-origin:100% 50%">2</span></div><div class="t" style="left:552px;top:430px;width:66px;text-align:right;font-size:12px;height:16px;overflow:hidden"><span style="display:inline-block;transform:scaleX(0.93);transform-origin:100% 50%">5</span></div><div class="t" style="left:619px;top:430px;width:66px;text-align:right;font-size:12px;height:16px;overflow:hidden"><span style="display:inline-block;transform:scaleX(0.93);transform-origin:100% 50%">0</span></div><div class="t" style="left:686px;top:430px;width:66px;text-align:right;font-size:12px;height:16px;overflow:hidden"><span style="display:inline-block;transform:scaleX(0.93);transform-origin:100% 50%">216</span></div><div class="t" style="left:753px;top:430px;width:66px;text-align:right;font-size:12px;height:16px;overflow:hidden"><span style="display:inline-block;transform:scaleX(0.93);transform-origin:100% 50%">19</span></div><div class="t" style="left:820px;top:430px;width:66px;text-align:right;font-size:12px;height:16px;overflow:hidden"><span style="display:inline-block;transform:scaleX(0.93);transform-origin:100% 50%">1</span></div><div class="t" style="left:887px;top:430px;width:66px;text-align:right;font-size:12px;height:16px;overflow:hidden"><span style="display:inline-block;transform:scaleX(0.93);transform-origin:100% 50%">1856</span></div><div class="a" style="left:268px;top:446px;width:16px;height:16px;background:#ECE9D8;border-left:1px solid #fff;border-top:1px solid #fff;border-right:1px solid #000;border-bottom:1px solid #000"></div><div class="a" style="left:284px;top:461px;width:719px;height:1px;background:#C0C0C0"></div><div class="t" style="left:284px;top:446px;width:66px;text-align:right;font-size:12px;height:16px;overflow:hidden"><span style="display:inline-block;transform:scaleX(0.93);transform-origin:100% 50%">1857</span></div><div class="t" style="left:351px;top:446px;width:66px;text-align:right;font-size:12px;height:16px;overflow:hidden"><span style="display:inline-block;transform:scaleX(0.93);transform-origin:100% 50%">6</span></div><div class="t" style="left:418px;top:446px;width:66px;text-align:right;font-size:12px;height:16px;overflow:hidden"><span style="display:inline-block;transform:scaleX(0.93);transform-origin:100% 50%">1857</span></div><div class="t" style="left:485px;top:446px;width:66px;text-align:right;font-size:12px;height:16px;overflow:hidden"><span style="display:inline-block;transform:scaleX(0.93);transform-origin:100% 50%">1</span></div><div class="t" style="left:552px;top:446px;width:66px;text-align:right;font-size:12px;height:16px;overflow:hidden"><span style="display:inline-block;transform:scaleX(0.93);transform-origin:100% 50%">5</span></div><div class="t" style="left:619px;top:446px;width:66px;text-align:right;font-size:12px;height:16px;overflow:hidden"><span style="display:inline-block;transform:scaleX(0.93);transform-origin:100% 50%">0</span></div><div class="t" style="left:686px;top:446px;width:66px;text-align:right;font-size:12px;height:16px;overflow:hidden"><span style="display:inline-block;transform:scaleX(0.93);transform-origin:100% 50%">137</span></div><div class="t" style="left:753px;top:446px;width:66px;text-align:right;font-size:12px;height:16px;overflow:hidden"><span style="display:inline-block;transform:scaleX(0.93);transform-origin:100% 50%">20</span></div><div class="t" style="left:820px;top:446px;width:66px;text-align:right;font-size:12px;height:16px;overflow:hidden"><span style="display:inline-block;transform:scaleX(0.93);transform-origin:100% 50%">1</span></div><div class="t" style="left:887px;top:446px;width:66px;text-align:right;font-size:12px;height:16px;overflow:hidden"><span style="display:inline-block;transform:scaleX(0.93);transform-origin:100% 50%">1857</span></div><div class="a" style="left:268px;top:462px;width:16px;height:16px;background:#ECE9D8;border-left:1px solid #fff;border-top:1px solid #fff;border-right:1px solid #000;border-bottom:1px solid #000"></div><div class="a" style="left:284px;top:477px;width:719px;height:1px;background:#C0C0C0"></div><div class="t" style="left:284px;top:462px;width:66px;text-align:right;font-size:12px;height:16px;overflow:hidden"><span style="display:inline-block;transform:scaleX(0.93);transform-origin:100% 50%">1858</span></div><div class="t" style="left:351px;top:462px;width:66px;text-align:right;font-size:12px;height:16px;overflow:hidden"><span style="display:inline-block;transform:scaleX(0.93);transform-origin:100% 50%">6</span></div><div class="t" style="left:418px;top:462px;width:66px;text-align:right;font-size:12px;height:16px;overflow:hidden"><span style="display:inline-block;transform:scaleX(0.93);transform-origin:100% 50%">1858</span></div><div class="t" style="left:485px;top:462px;width:66px;text-align:right;font-size:12px;height:16px;overflow:hidden"><span style="display:inline-block;transform:scaleX(0.93);transform-origin:100% 50%">2</span></div><div class="t" style="left:552px;top:462px;width:66px;text-align:right;font-size:12px;height:16px;overflow:hidden"><span style="display:inline-block;transform:scaleX(0.93);transform-origin:100% 50%">5</span></div><div class="t" style="left:619px;top:462px;width:66px;text-align:right;font-size:12px;height:16px;overflow:hidden"><span style="display:inline-block;transform:scaleX(0.93);transform-origin:100% 50%">0</span></div><div class="t" style="left:686px;top:462px;width:66px;text-align:right;font-size:12px;height:16px;overflow:hidden"><span style="display:inline-block;transform:scaleX(0.93);transform-origin:100% 50%">292</span></div><div class="t" style="left:753px;top:462px;width:66px;text-align:right;font-size:12px;height:16px;overflow:hidden"><span style="display:inline-block;transform:scaleX(0.93);transform-origin:100% 50%">18</span></div><div class="t" style="left:820px;top:462px;width:66px;text-align:right;font-size:12px;height:16px;overflow:hidden"><span style="display:inline-block;transform:scaleX(0.93);transform-origin:100% 50%">1</span></div><div class="t" style="left:887px;top:462px;width:66px;text-align:right;font-size:12px;height:16px;overflow:hidden"><span style="display:inline-block;transform:scaleX(0.93);transform-origin:100% 50%">1858</span></div><div class="a" style="left:268px;top:478px;width:16px;height:16px;background:#ECE9D8;border-left:1px solid #fff;border-top:1px solid #fff;border-right:1px solid #000;border-bottom:1px solid #000"></div><div class="a" style="left:284px;top:493px;width:719px;height:1px;background:#C0C0C0"></div><div class="t" style="left:284px;top:478px;width:66px;text-align:right;font-size:12px;height:16px;overflow:hidden"><span style="display:inline-block;transform:scaleX(0.93);transform-origin:100% 50%">1860</span></div><div class="t" style="left:351px;top:478px;width:66px;text-align:right;font-size:12px;height:16px;overflow:hidden"><span style="display:inline-block;transform:scaleX(0.93);transform-origin:100% 50%">6</span></div><div class="t" style="left:418px;top:478px;width:66px;text-align:right;font-size:12px;height:16px;overflow:hidden"><span style="display:inline-block;transform:scaleX(0.93);transform-origin:100% 50%">1860</span></div><div class="t" style="left:485px;top:478px;width:66px;text-align:right;font-size:12px;height:16px;overflow:hidden"><span style="display:inline-block;transform:scaleX(0.93);transform-origin:100% 50%">2</span></div><div class="t" style="left:552px;top:478px;width:66px;text-align:right;font-size:12px;height:16px;overflow:hidden"><span style="display:inline-block;transform:scaleX(0.93);transform-origin:100% 50%">5</span></div><div class="t" style="left:619px;top:478px;width:66px;text-align:right;font-size:12px;height:16px;overflow:hidden"><span style="display:inline-block;transform:scaleX(0.93);transform-origin:100% 50%">0</span></div><div class="t" style="left:686px;top:478px;width:66px;text-align:right;font-size:12px;height:16px;overflow:hidden"><span style="display:inline-block;transform:scaleX(0.93);transform-origin:100% 50%">198</span></div><div class="t" style="left:753px;top:478px;width:66px;text-align:right;font-size:12px;height:16px;overflow:hidden"><span style="display:inline-block;transform:scaleX(0.93);transform-origin:100% 50%">7</span></div><div class="t" style="left:820px;top:478px;width:66px;text-align:right;font-size:12px;height:16px;overflow:hidden"><span style="display:inline-block;transform:scaleX(0.93);transform-origin:100% 50%">1</span></div><div class="t" style="left:887px;top:478px;width:66px;text-align:right;font-size:12px;height:16px;overflow:hidden"><span style="display:inline-block;transform:scaleX(0.93);transform-origin:100% 50%">1860</span></div><div class="a" style="left:268px;top:494px;width:16px;height:16px;background:#ECE9D8;border-left:1px solid #fff;border-top:1px solid #fff;border-right:1px solid #000;border-bottom:1px solid #000"></div><div class="a" style="left:284px;top:509px;width:719px;height:1px;background:#C0C0C0"></div><div class="t" style="left:284px;top:494px;width:66px;text-align:right;font-size:12px;height:16px;overflow:hidden"><span style="display:inline-block;transform:scaleX(0.93);transform-origin:100% 50%">1861</span></div><div class="t" style="left:351px;top:494px;width:66px;text-align:right;font-size:12px;height:16px;overflow:hidden"><span style="display:inline-block;transform:scaleX(0.93);transform-origin:100% 50%">6</span></div><div class="t" style="left:418px;top:494px;width:66px;text-align:right;font-size:12px;height:16px;overflow:hidden"><span style="display:inline-block;transform:scaleX(0.93);transform-origin:100% 50%">1861</span></div><div class="t" style="left:485px;top:494px;width:66px;text-align:right;font-size:12px;height:16px;overflow:hidden"><span style="display:inline-block;transform:scaleX(0.93);transform-origin:100% 50%">2</span></div><div class="t" style="left:552px;top:494px;width:66px;text-align:right;font-size:12px;height:16px;overflow:hidden"><span style="display:inline-block;transform:scaleX(0.93);transform-origin:100% 50%">5</span></div><div class="t" style="left:619px;top:494px;width:66px;text-align:right;font-size:12px;height:16px;overflow:hidden"><span style="display:inline-block;transform:scaleX(0.93);transform-origin:100% 50%">0</span></div><div class="t" style="left:686px;top:494px;width:66px;text-align:right;font-size:12px;height:16px;overflow:hidden"><span style="display:inline-block;transform:scaleX(0.93);transform-origin:100% 50%">91</span></div><div class="t" style="left:753px;top:494px;width:66px;text-align:right;font-size:12px;height:16px;overflow:hidden"><span style="display:inline-block;transform:scaleX(0.93);transform-origin:100% 50%">9</span></div><div class="t" style="left:820px;top:494px;width:66px;text-align:right;font-size:12px;height:16px;overflow:hidden"><span style="display:inline-block;transform:scaleX(0.93);transform-origin:100% 50%">1</span></div><div class="t" style="left:887px;top:494px;width:66px;text-align:right;font-size:12px;height:16px;overflow:hidden"><span style="display:inline-block;transform:scaleX(0.93);transform-origin:100% 50%">1861</span></div><div class="a" style="left:268px;top:510px;width:16px;height:16px;background:#ECE9D8;border-left:1px solid #fff;border-top:1px solid #fff;border-right:1px solid #000;border-bottom:1px solid #000"></div><div class="a" style="left:284px;top:525px;width:719px;height:1px;background:#C0C0C0"></div><div class="t" style="left:284px;top:510px;width:66px;text-align:right;font-size:12px;height:16px;overflow:hidden"><span style="display:inline-block;transform:scaleX(0.93);transform-origin:100% 50%">1867</span></div><div class="t" style="left:351px;top:510px;width:66px;text-align:right;font-size:12px;height:16px;overflow:hidden"><span style="display:inline-block;transform:scaleX(0.93);transform-origin:100% 50%">6</span></div><div class="t" style="left:418px;top:510px;width:66px;text-align:right;font-size:12px;height:16px;overflow:hidden"><span style="display:inline-block;transform:scaleX(0.93);transform-origin:100% 50%">1867</span></div><div class="t" style="left:485px;top:510px;width:66px;text-align:right;font-size:12px;height:16px;overflow:hidden"><span style="display:inline-block;transform:scaleX(0.93);transform-origin:100% 50%">2</span></div><div class="t" style="left:552px;top:510px;width:66px;text-align:right;font-size:12px;height:16px;overflow:hidden"><span style="display:inline-block;transform:scaleX(0.93);transform-origin:100% 50%">5</span></div><div class="t" style="left:619px;top:510px;width:66px;text-align:right;font-size:12px;height:16px;overflow:hidden"><span style="display:inline-block;transform:scaleX(0.93);transform-origin:100% 50%">0</span></div><div class="t" style="left:686px;top:510px;width:66px;text-align:right;font-size:12px;height:16px;overflow:hidden"><span style="display:inline-block;transform:scaleX(0.93);transform-origin:100% 50%">211</span></div><div class="t" style="left:753px;top:510px;width:66px;text-align:right;font-size:12px;height:16px;overflow:hidden"><span style="display:inline-block;transform:scaleX(0.93);transform-origin:100% 50%">7</span></div><div class="t" style="left:820px;top:510px;width:66px;text-align:right;font-size:12px;height:16px;overflow:hidden"><span style="display:inline-block;transform:scaleX(0.93);transform-origin:100% 50%">1</span></div><div class="t" style="left:887px;top:510px;width:66px;text-align:right;font-size:12px;height:16px;overflow:hidden"><span style="display:inline-block;transform:scaleX(0.93);transform-origin:100% 50%">1867</span></div><div class="a" style="left:268px;top:526px;width:16px;height:16px;background:#ECE9D8;border-left:1px solid #fff;border-top:1px solid #fff;border-right:1px solid #000;border-bottom:1px solid #000"></div><div class="a" style="left:284px;top:541px;width:719px;height:1px;background:#C0C0C0"></div><div class="t" style="left:284px;top:526px;width:66px;text-align:right;font-size:12px;height:16px;overflow:hidden"><span style="display:inline-block;transform:scaleX(0.93);transform-origin:100% 50%">1871</span></div><div class="t" style="left:351px;top:526px;width:66px;text-align:right;font-size:12px;height:16px;overflow:hidden"><span style="display:inline-block;transform:scaleX(0.93);transform-origin:100% 50%">20</span></div><div class="t" style="left:418px;top:526px;width:66px;text-align:right;font-size:12px;height:16px;overflow:hidden"><span style="display:inline-block;transform:scaleX(0.93);transform-origin:100% 50%">1871</span></div><div class="t" style="left:485px;top:526px;width:66px;text-align:right;font-size:12px;height:16px;overflow:hidden"><span style="display:inline-block;transform:scaleX(0.93);transform-origin:100% 50%">2</span></div><div class="t" style="left:552px;top:526px;width:66px;text-align:right;font-size:12px;height:16px;overflow:hidden"><span style="display:inline-block;transform:scaleX(0.93);transform-origin:100% 50%">5</span></div><div class="t" style="left:619px;top:526px;width:66px;text-align:right;font-size:12px;height:16px;overflow:hidden"><span style="display:inline-block;transform:scaleX(0.93);transform-origin:100% 50%">0</span></div><div class="t" style="left:686px;top:526px;width:66px;text-align:right;font-size:12px;height:16px;overflow:hidden"><span style="display:inline-block;transform:scaleX(0.93);transform-origin:100% 50%">554</span></div><div class="t" style="left:753px;top:526px;width:66px;text-align:right;font-size:12px;height:16px;overflow:hidden"><span style="display:inline-block;transform:scaleX(0.93);transform-origin:100% 50%">3</span></div><div class="t" style="left:820px;top:526px;width:66px;text-align:right;font-size:12px;height:16px;overflow:hidden"><span style="display:inline-block;transform:scaleX(0.93);transform-origin:100% 50%">0</span></div><div class="t" style="left:887px;top:526px;width:66px;text-align:right;font-size:12px;height:16px;overflow:hidden"><span style="display:inline-block;transform:scaleX(0.93);transform-origin:100% 50%">1871</span></div><div class="a" style="left:268px;top:542px;width:16px;height:16px;background:#ECE9D8;border-left:1px solid #fff;border-top:1px solid #fff;border-right:1px solid #000;border-bottom:1px solid #000"></div><div class="a" style="left:284px;top:557px;width:719px;height:1px;background:#C0C0C0"></div><div class="t" style="left:284px;top:542px;width:66px;text-align:right;font-size:12px;height:16px;overflow:hidden"><span style="display:inline-block;transform:scaleX(0.93);transform-origin:100% 50%">1873</span></div><div class="t" style="left:351px;top:542px;width:66px;text-align:right;font-size:12px;height:16px;overflow:hidden"><span style="display:inline-block;transform:scaleX(0.93);transform-origin:100% 50%">20</span></div><div class="t" style="left:418px;top:542px;width:66px;text-align:right;font-size:12px;height:16px;overflow:hidden"><span style="display:inline-block;transform:scaleX(0.93);transform-origin:100% 50%">1873</span></div><div class="t" style="left:485px;top:542px;width:66px;text-align:right;font-size:12px;height:16px;overflow:hidden"><span style="display:inline-block;transform:scaleX(0.93);transform-origin:100% 50%">2</span></div><div class="t" style="left:552px;top:542px;width:66px;text-align:right;font-size:12px;height:16px;overflow:hidden"><span style="display:inline-block;transform:scaleX(0.93);transform-origin:100% 50%">5</span></div><div class="t" style="left:619px;top:542px;width:66px;text-align:right;font-size:12px;height:16px;overflow:hidden"><span style="display:inline-block;transform:scaleX(0.93);transform-origin:100% 50%">0</span></div><div class="t" style="left:686px;top:542px;width:66px;text-align:right;font-size:12px;height:16px;overflow:hidden"><span style="display:inline-block;transform:scaleX(0.93);transform-origin:100% 50%">182</span></div><div class="t" style="left:753px;top:542px;width:66px;text-align:right;font-size:12px;height:16px;overflow:hidden"><span style="display:inline-block;transform:scaleX(0.93);transform-origin:100% 50%">7</span></div><div class="t" style="left:820px;top:542px;width:66px;text-align:right;font-size:12px;height:16px;overflow:hidden"><span style="display:inline-block;transform:scaleX(0.93);transform-origin:100% 50%">0</span></div><div class="t" style="left:887px;top:542px;width:66px;text-align:right;font-size:12px;height:16px;overflow:hidden"><span style="display:inline-block;transform:scaleX(0.93);transform-origin:100% 50%">1873</span></div><div class="a" style="left:268px;top:558px;width:16px;height:16px;background:#ECE9D8;border-left:1px solid #fff;border-top:1px solid #fff;border-right:1px solid #000;border-bottom:1px solid #000"></div><div class="a" style="left:284px;top:573px;width:719px;height:1px;background:#C0C0C0"></div><div class="t" style="left:284px;top:558px;width:66px;text-align:right;font-size:12px;height:16px;overflow:hidden"><span style="display:inline-block;transform:scaleX(0.93);transform-origin:100% 50%">1876</span></div><div class="t" style="left:351px;top:558px;width:66px;text-align:right;font-size:12px;height:16px;overflow:hidden"><span style="display:inline-block;transform:scaleX(0.93);transform-origin:100% 50%">20</span></div><div class="t" style="left:418px;top:558px;width:66px;text-align:right;font-size:12px;height:16px;overflow:hidden"><span style="display:inline-block;transform:scaleX(0.93);transform-origin:100% 50%">1876</span></div><div class="t" style="left:485px;top:558px;width:66px;text-align:right;font-size:12px;height:16px;overflow:hidden"><span style="display:inline-block;transform:scaleX(0.93);transform-origin:100% 50%">0</span></div><div class="t" style="left:552px;top:558px;width:66px;text-align:right;font-size:12px;height:16px;overflow:hidden"><span style="display:inline-block;transform:scaleX(0.93);transform-origin:100% 50%">5</span></div><div class="t" style="left:619px;top:558px;width:66px;text-align:right;font-size:12px;height:16px;overflow:hidden"><span style="display:inline-block;transform:scaleX(0.93);transform-origin:100% 50%">0</span></div><div class="t" style="left:686px;top:558px;width:66px;text-align:right;font-size:12px;height:16px;overflow:hidden"><span style="display:inline-block;transform:scaleX(0.93);transform-origin:100% 50%">500</span></div><div class="t" style="left:753px;top:558px;width:66px;text-align:right;font-size:12px;height:16px;overflow:hidden"><span style="display:inline-block;transform:scaleX(0.93);transform-origin:100% 50%">19</span></div><div class="t" style="left:820px;top:558px;width:66px;text-align:right;font-size:12px;height:16px;overflow:hidden"><span style="display:inline-block;transform:scaleX(0.93);transform-origin:100% 50%">0</span></div><div class="t" style="left:887px;top:558px;width:66px;text-align:right;font-size:12px;height:16px;overflow:hidden"><span style="display:inline-block;transform:scaleX(0.93);transform-origin:100% 50%">1876</span></div><div class="a" style="left:268px;top:574px;width:16px;height:16px;background:#ECE9D8;border-left:1px solid #fff;border-top:1px solid #fff;border-right:1px solid #000;border-bottom:1px solid #000"></div><div class="a" style="left:284px;top:589px;width:719px;height:1px;background:#C0C0C0"></div><div class="t" style="left:284px;top:574px;width:66px;text-align:right;font-size:12px;height:16px;overflow:hidden"><span style="display:inline-block;transform:scaleX(0.93);transform-origin:100% 50%">1877</span></div><div class="t" style="left:351px;top:574px;width:66px;text-align:right;font-size:12px;height:16px;overflow:hidden"><span style="display:inline-block;transform:scaleX(0.93);transform-origin:100% 50%">20</span></div><div class="t" style="left:418px;top:574px;width:66px;text-align:right;font-size:12px;height:16px;overflow:hidden"><span style="display:inline-block;transform:scaleX(0.93);transform-origin:100% 50%">1877</span></div><div class="t" style="left:485px;top:574px;width:66px;text-align:right;font-size:12px;height:16px;overflow:hidden"><span style="display:inline-block;transform:scaleX(0.93);transform-origin:100% 50%">0</span></div><div class="t" style="left:552px;top:574px;width:66px;text-align:right;font-size:12px;height:16px;overflow:hidden"><span style="display:inline-block;transform:scaleX(0.93);transform-origin:100% 50%">5</span></div><div class="t" style="left:619px;top:574px;width:66px;text-align:right;font-size:12px;height:16px;overflow:hidden"><span style="display:inline-block;transform:scaleX(0.93);transform-origin:100% 50%">0</span></div><div class="t" style="left:686px;top:574px;width:66px;text-align:right;font-size:12px;height:16px;overflow:hidden"><span style="display:inline-block;transform:scaleX(0.93);transform-origin:100% 50%">439</span></div><div class="t" style="left:753px;top:574px;width:66px;text-align:right;font-size:12px;height:16px;overflow:hidden"><span style="display:inline-block;transform:scaleX(0.93);transform-origin:100% 50%">36</span></div><div class="t" style="left:820px;top:574px;width:66px;text-align:right;font-size:12px;height:16px;overflow:hidden"><span style="display:inline-block;transform:scaleX(0.93);transform-origin:100% 50%">0</span></div><div class="t" style="left:887px;top:574px;width:66px;text-align:right;font-size:12px;height:16px;overflow:hidden"><span style="display:inline-block;transform:scaleX(0.93);transform-origin:100% 50%">1877</span></div><div class="a" style="left:268px;top:590px;width:16px;height:16px;background:#ECE9D8;border-left:1px solid #fff;border-top:1px solid #fff;border-right:1px solid #000;border-bottom:1px solid #000"></div><div class="a" style="left:284px;top:605px;width:719px;height:1px;background:#C0C0C0"></div><div class="t" style="left:284px;top:590px;width:66px;text-align:right;font-size:12px;height:16px;overflow:hidden"><span style="display:inline-block;transform:scaleX(0.93);transform-origin:100% 50%">1878</span></div><div class="t" style="left:351px;top:590px;width:66px;text-align:right;font-size:12px;height:16px;overflow:hidden"><span style="display:inline-block;transform:scaleX(0.93);transform-origin:100% 50%">24</span></div><div class="t" style="left:418px;top:590px;width:66px;text-align:right;font-size:12px;height:16px;overflow:hidden"><span style="display:inline-block;transform:scaleX(0.93);transform-origin:100% 50%">1878</span></div><div class="t" style="left:485px;top:590px;width:66px;text-align:right;font-size:12px;height:16px;overflow:hidden"><span style="display:inline-block;transform:scaleX(0.93);transform-origin:100% 50%">1</span></div><div class="t" style="left:552px;top:590px;width:66px;text-align:right;font-size:12px;height:16px;overflow:hidden"><span style="display:inline-block;transform:scaleX(0.93);transform-origin:100% 50%">5</span></div><div class="t" style="left:619px;top:590px;width:66px;text-align:right;font-size:12px;height:16px;overflow:hidden"><span style="display:inline-block;transform:scaleX(0.93);transform-origin:100% 50%">0</span></div><div class="t" style="left:686px;top:590px;width:66px;text-align:right;font-size:12px;height:16px;overflow:hidden"><span style="display:inline-block;transform:scaleX(0.93);transform-origin:100% 50%">190</span></div><div class="t" style="left:753px;top:590px;width:66px;text-align:right;font-size:12px;height:16px;overflow:hidden"><span style="display:inline-block;transform:scaleX(0.93);transform-origin:100% 50%">30</span></div><div class="t" style="left:820px;top:590px;width:66px;text-align:right;font-size:12px;height:16px;overflow:hidden"><span style="display:inline-block;transform:scaleX(0.93);transform-origin:100% 50%">0</span></div><div class="t" style="left:887px;top:590px;width:66px;text-align:right;font-size:12px;height:16px;overflow:hidden"><span style="display:inline-block;transform:scaleX(0.93);transform-origin:100% 50%">1878</span></div><div class="a" style="left:268px;top:606px;width:16px;height:12px;background:#ECE9D8;border-left:1px solid #fff;border-top:1px solid #fff;border-right:1px solid #000;"></div><div class="t" style="left:284px;top:606px;width:66px;text-align:right;font-size:12px;height:12px;overflow:hidden"><span style="display:inline-block;transform:scaleX(0.93);transform-origin:100% 50%">1879</span></div><div class="t" style="left:351px;top:606px;width:66px;text-align:right;font-size:12px;height:12px;overflow:hidden"><span style="display:inline-block;transform:scaleX(0.93);transform-origin:100% 50%">24</span></div><div class="t" style="left:418px;top:606px;width:66px;text-align:right;font-size:12px;height:12px;overflow:hidden"><span style="display:inline-block;transform:scaleX(0.93);transform-origin:100% 50%">1879</span></div><div class="t" style="left:485px;top:606px;width:66px;text-align:right;font-size:12px;height:12px;overflow:hidden"><span style="display:inline-block;transform:scaleX(0.93);transform-origin:100% 50%">0</span></div><div class="t" style="left:552px;top:606px;width:66px;text-align:right;font-size:12px;height:12px;overflow:hidden"><span style="display:inline-block;transform:scaleX(0.93);transform-origin:100% 50%">5</span></div><div class="t" style="left:619px;top:606px;width:66px;text-align:right;font-size:12px;height:12px;overflow:hidden"><span style="display:inline-block;transform:scaleX(0.93);transform-origin:100% 50%">0</span></div><div class="t" style="left:686px;top:606px;width:66px;text-align:right;font-size:12px;height:12px;overflow:hidden"><span style="display:inline-block;transform:scaleX(0.93);transform-origin:100% 50%">80</span></div><div class="t" style="left:753px;top:606px;width:66px;text-align:right;font-size:12px;height:12px;overflow:hidden"><span style="display:inline-block;transform:scaleX(0.93);transform-origin:100% 50%">17</span></div><div class="t" style="left:820px;top:606px;width:66px;text-align:right;font-size:12px;height:12px;overflow:hidden"><span style="display:inline-block;transform:scaleX(0.93);transform-origin:100% 50%">0</span></div><div class="t" style="left:887px;top:606px;width:66px;text-align:right;font-size:12px;height:12px;overflow:hidden"><span style="display:inline-block;transform:scaleX(0.93);transform-origin:100% 50%">1879</span></div><div class="a" style="left:350px;top:94px;width:1px;height:524px;background:#C0C0C0"></div><div class="a" style="left:417px;top:94px;width:1px;height:524px;background:#C0C0C0"></div><div class="a" style="left:484px;top:94px;width:1px;height:524px;background:#C0C0C0"></div><div class="a" style="left:551px;top:94px;width:1px;height:524px;background:#C0C0C0"></div><div class="a" style="left:618px;top:94px;width:1px;height:524px;background:#C0C0C0"></div><div class="a" style="left:685px;top:94px;width:1px;height:524px;background:#C0C0C0"></div><div class="a" style="left:752px;top:94px;width:1px;height:524px;background:#C0C0C0"></div><div class="a" style="left:819px;top:94px;width:1px;height:524px;background:#C0C0C0"></div><div class="a" style="left:886px;top:94px;width:1px;height:524px;background:#C0C0C0"></div><div class="a" style="left:953px;top:94px;width:1px;height:524px;background:#C0C0C0"></div><div class="a" style="left:1003px;top:78px;width:17px;height:540px;background:#FDFDFB;border-left:1px solid #F4F3EE"></div><div class="a" style="left:1004px;top:79px;width:15px;height:15px;border:1px solid #fff;border-radius:2px;background:linear-gradient(135deg,#DCE6FD 0,#C3D3FD 50%,#B6C9FA 100%);box-shadow:0 1px 0 #8FA8E8"></div><svg style="left:1007px;top:83px" width="9" height="7" viewBox="0 0 9 7" shape-rendering="crispEdges"><path d="M1 5.5L4.5 2L8 5.5" fill="none" stroke="#4D6185" stroke-width="2" shape-rendering="auto"/></svg><div class="a" style="left:1004px;top:463px;width:15px;height:34px;border:1px solid #fff;border-radius:2px;background:linear-gradient(90deg,#C8D6FC 0,#BACCFC 50%,#B2C6FA 100%);box-shadow:0 1px 0 #8FA8E8"></div><div class="a" style="left:1008px;top:476px;width:7px;height:1px;background:#8FA8E8"></div><div class="a" style="left:1008px;top:478px;width:7px;height:1px;background:#8FA8E8"></div><div class="a" style="left:1008px;top:480px;width:7px;height:1px;background:#8FA8E8"></div><div class="a" style="left:1008px;top:482px;width:7px;height:1px;background:#8FA8E8"></div><div class="a" style="left:1004px;top:619px;width:15px;height:15px;border:1px solid #fff;border-radius:2px;background:linear-gradient(135deg,#DCE6FD 0,#C3D3FD 50%,#B6C9FA 100%);box-shadow:0 1px 0 #8FA8E8"></div><svg style="left:1007px;top:623px" width="9" height="7" viewBox="0 0 9 7" shape-rendering="crispEdges"><path d="M1 1.5L4.5 5L8 1.5" fill="none" stroke="#4D6185" stroke-width="2" shape-rendering="auto"/></svg><div class="a" style="left:268px;top:618px;width:735px;height:17px;background-color:#F6F5EE;background-image:repeating-conic-gradient(#ECE9D8 0 25%,#fff 0 50%);background-size:2px 2px"></div><div class="a" style="left:268px;top:618px;width:16px;height:17px;background:#ECE9D8;border-left:1px solid #fff;border-top:1px solid #fff;border-right:1px solid #716F64;border-bottom:1px solid #716F64;box-shadow:inset -1px -1px 0 #ACA899"></div><svg style="left:273px;top:623px" width="4" height="7" viewBox="0 0 4 7" shape-rendering="crispEdges"><path d="M4 0V7L0.5 3.5Z" fill="#000" shape-rendering="auto"/></svg><div class="a" style="left:285px;top:618px;width:17px;height:17px;background:#ECE9D8;border-left:1px solid #fff;border-top:1px solid #fff;border-right:1px solid #716F64;border-bottom:1px solid #716F64;box-shadow:inset -1px -1px 0 #ACA899"></div><div class="a" style="left:986px;top:618px;width:17px;height:17px;background:#ECE9D8;border-left:1px solid #fff;border-top:1px solid #fff;border-right:1px solid #716F64;border-bottom:1px solid #716F64;box-shadow:inset -1px -1px 0 #ACA899"></div><svg style="left:993px;top:623px" width="4" height="7" viewBox="0 0 4 7" shape-rendering="crispEdges"><path d="M0 0V7L3.5 3.5Z" fill="#000" shape-rendering="auto"/></svg><div class="a" style="left:264px;top:636px;width:757px;height:31px;background:#ECE9D8"></div><div class="a" style="left:266px;top:636px;width:755px;height:1px;background:#fff"></div><div class="a" style="left:266px;top:636px;width:1px;height:29px;background:#fff"></div><div class="a" style="left:268px;top:664px;width:753px;height:1px;background:#ACA899"></div><div class="a" style="left:264px;top:665px;width:757px;height:2px;background:#fff"></div><svg style="left:272px;top:643px" width="14" height="13" viewBox="0 0 14 13" shape-rendering="crispEdges"><rect x="0.5" y="0.5" width="5" height="2" fill="#fff" stroke="#000"/><rect x="0.5" y="4.5" width="5" height="2" fill="#fff" stroke="#000"/><rect x="0.5" y="8.5" width="5" height="2" fill="#fff" stroke="#000"/><rect x="0" y="12" width="7" height="1" fill="#000"/><rect x="8.5" y="0.5" width="2" height="2" fill="#fff" stroke="#000"/><rect x="8.5" y="4.5" width="4" height="2" fill="#fff" stroke="#000"/></svg><div class="a" style="left:290px;top:639px;width:22px;height:21px;border:1px solid #8AA8CC;border-radius:3px;background:#FDFDFB;box-shadow:inset 0 0 0 1px #DCE6F0"></div><svg style="left:294px;top:642px" width="15" height="15" viewBox="0 0 15 15" shape-rendering="crispEdges"><rect x="0" y="0" width="15" height="15" fill="#000"/><rect x="1" y="1" width="5" height="2" fill="#fff"/><rect x="7" y="1" width="4" height="2" fill="#fff"/><rect x="12" y="1" width="2" height="2" fill="#fff"/><rect x="1" y="4" width="5" height="2" fill="#fff"/><rect x="7" y="4" width="4" height="2" fill="#fff"/><rect x="12" y="4" width="2" height="2" fill="#fff"/><rect x="1" y="7" width="5" height="2" fill="#fff"/><rect x="7" y="7" width="4" height="2" fill="#fff"/><rect x="12" y="7" width="2" height="2" fill="#fff"/><rect x="1" y="10" width="5" height="2" fill="#fff"/><rect x="7" y="10" width="4" height="2" fill="#fff"/><rect x="12" y="10" width="2" height="2" fill="#fff"/><rect x="1" y="13" width="1" height="1" fill="#fff"/><rect x="3" y="13" width="2" height="1" fill="#fff"/><rect x="6" y="13" width="8" height="1" fill="#fff"/></svg><svg style="left:324px;top:645px" width="15" height="10" viewBox="0 0 15 10" shape-rendering="crispEdges"><path d="M0 0L5 4.5L0 9Z" fill="#000" shape-rendering="auto"/><rect x="10" y="1" width="1" height="7" fill="#000"/><rect x="7" y="4" width="7" height="1" fill="#000"/><rect x="9" y="3" width="3" height="3" fill="#000"/><rect x="8" y="2" width="1" height="1" fill="#000"/><rect x="12" y="2" width="1" height="1" fill="#000"/><rect x="8" y="6" width="1" height="1" fill="#000"/><rect x="12" y="6" width="1" height="1" fill="#000"/></svg><svg style="left:346px;top:644px" width="15" height="12" viewBox="0 0 15 12" shape-rendering="crispEdges"><path d="M0 1L5 5.5L0 10Z" fill="#000" shape-rendering="auto"/><path d="M5 10.8L13.5 0.5" stroke="#000" stroke-width="2" shape-rendering="auto"/><path d="M4 1.2L13.5 10.5" stroke="#000" stroke-width="1.6" shape-rendering="auto"/><path d="M4.2 6.5L6 4.5" stroke="#ECE9D8" stroke-width="0.8" shape-rendering="auto"/></svg><svg style="left:369px;top:647px" width="13" height="9" viewBox="0 0 13 9" shape-rendering="crispEdges"><path d="M3.5 4Q6 0.8 9 1Q12 2 11.5 6.5L11 7.5" fill="none" stroke="#ACA899" stroke-width="1.5" shape-rendering="auto"/><path d="M0 1V7H6Z" fill="#ACA899" shape-rendering="auto"/><path d="M12.3 5L11.8 8" stroke="#fff" stroke-width="1" shape-rendering="auto"/><rect x="1" y="7" width="6" height="1" fill="#fff"/></svg><svg style="left:397px;top:644px" width="15" height="11" viewBox="0 0 15 11" shape-rendering="crispEdges"><path d="M0 0H15L9.5 6V11H5.5V6Z" fill="#000" shape-rendering="auto"/><path d="M3 1.6H12L8 5.5V8H7V5.5Z" fill="#F4F2E8" shape-rendering="auto"/></svg><svg style="left:419px;top:643px" width="16" height="13" viewBox="0 0 16 13" shape-rendering="crispEdges"><rect x="3" y="0" width="4" height="4" fill="#000"/><rect x="9" y="0" width="4" height="4" fill="#000"/><rect x="1" y="3" width="6" height="4" fill="#000"/><rect x="9" y="3" width="6" height="4" fill="#000"/><rect x="0" y="5" width="7" height="8" fill="#000"/><rect x="9" y="5" width="7" height="8" fill="#000"/><rect x="6" y="5" width="4" height="5" fill="#000"/><rect x="4" y="1" width="1" height="1" fill="#fff"/><rect x="10" y="1" width="1" height="1" fill="#fff"/><rect x="3" y="4" width="1" height="1" fill="#fff"/><rect x="9" y="4" width="1" height="1" fill="#fff"/><rect x="2" y="6" width="1" height="2" fill="#fff"/><rect x="5" y="6" width="1" height="2" fill="#fff"/><rect x="10" y="6" width="1" height="2" fill="#fff"/><rect x="1" y="10" width="1" height="2" fill="#fff"/><rect x="11" y="10" width="1" height="2" fill="#fff"/></svg><svg style="left:443px;top:643px" width="13" height="13" viewBox="0 0 13 13" shape-rendering="crispEdges"><path d="M3 2.5Q0.8 6.5 3 10.5" fill="none" stroke="#000" stroke-width="2.2" shape-rendering="auto"/><path d="M10 2.5Q12.2 6.5 10 10.5" fill="none" stroke="#000" stroke-width="2.2" shape-rendering="auto"/><path d="M1.5 0.5H7V5Z" fill="#000" shape-rendering="auto"/><path d="M11.5 12.5H6V8Z" fill="#000" shape-rendering="auto"/></svg><div class="a" style="left:264px;top:667px;width:757px;height:44px;background:#ECE9D8"></div><div class="a" style="left:264px;top:667px;width:746px;height:4px;background:linear-gradient(180deg,#ECE9D8 0,#D8D4C4 50%,#A8A494 100%)"></div><div class="a" style="left:264px;top:671px;width:748px;height:40px;background:#FFFFE1;border-left:1px solid #716F64;border-top:1px solid #716F64;border-bottom:1px solid #fff;border-right:1px solid #fff"></div><div class="a" style="left:993px;top:672px;width:18px;height:38px;background:#F6F6F2"></div><div class="a" style="left:265px;top:709px;width:746px;height:1px;background:#F2F0E2"></div><svg style="left:273px;top:685px" width="9" height="15" viewBox="0 0 9 15" shape-rendering="crispEdges"><rect x="1" y="0" width="1" height="1" fill="#00f"/><rect x="4" y="0" width="1" height="1" fill="#00f"/><rect x="7" y="0" width="1" height="1" fill="#00f"/><path d="M4.5 3.2Q8 3.2 8 6.5Q8 8.5 6 10V12H3V10Q1 8.5 1 6.5Q1 3.2 4.5 3.2Z" fill="#FFF000" stroke="#777" stroke-width="0.9" shape-rendering="auto"/><path d="M3 6Q4.5 4 6 6Q6 7.5 4.5 8V10" fill="none" stroke="#fff" stroke-width="0.9" shape-rendering="auto"/><rect x="3" y="12" width="3" height="1" fill="#000"/><rect x="2.5" y="13" width="4" height="2" fill="#000"/></svg><div class="t" style="left:289px;top:684px;font-size:11.5px;letter-spacing:-0.25px">You may <b>launch</b> all <b>SQL commands</b> your database supports using <i>Table &#8594; Open Command</i>. <span style="color:#0000FF;text-decoration:underline">More...</span></div><div class="a" style="left:995px;top:672px;width:14px;height:15px;border:1px solid #fff;border-radius:2px;background:linear-gradient(135deg,#DCE6FD 0,#C3D3FD 50%,#B6C9FA 100%);box-shadow:0 1px 0 #8FA8E8"></div><svg style="left:998px;top:676px" width="9" height="7" viewBox="0 0 9 7" shape-rendering="crispEdges"><path d="M1 5.5L4.5 2L8 5.5" fill="none" stroke="#4D6185" stroke-width="2" shape-rendering="auto"/></svg><div class="a" style="left:995px;top:692px;width:14px;height:15px;border:1px solid #fff;border-radius:2px;background:linear-gradient(135deg,#DCE6FD 0,#C3D3FD 50%,#B6C9FA 100%);box-shadow:0 1px 0 #8FA8E8"></div><svg style="left:998px;top:696px" width="9" height="7" viewBox="0 0 9 7" shape-rendering="crispEdges"><path d="M1 1.5L4.5 5L8 1.5" fill="none" stroke="#4D6185" stroke-width="2" shape-rendering="auto"/></svg><svg style="left:1014px;top:673px" width="7" height="7" viewBox="0 0 7 7" shape-rendering="crispEdges"><path d="M0.5 0.5L6 6M6 0.5L0.5 6" stroke="#333" stroke-width="1.3" shape-rendering="auto"/></svg><svg style="left:1014px;top:684px" width="8" height="7" viewBox="0 0 8 7" shape-rendering="crispEdges"><path d="M3.5 0.5L0.8 3.5L3.5 6.5" fill="none" stroke="#222" stroke-width="1.3" shape-rendering="auto"/><rect x="4" y="2" width="3" height="3" fill="#222"/></svg><div class="a" style="left:4px;top:711px;width:1017px;height:25px;background:#ECE9D8"></div><div class="a" style="left:4px;top:711px;width:1017px;height:4px;background:linear-gradient(180deg,#8C8A7A 0,#8C8A7A 1px,#C4C0B0 1px,#C4C0B0 2px,#DCD8C8 2px,#DCD8C8 3px,#E6E3D2 3px)"></div><div class="a" style="left:4px;top:733px;width:1017px;height:3px;background:#DCD8C6"></div><svg style="left:1018px;top:723px" width="3" height="3" viewBox="0 0 3 3" shape-rendering="crispEdges"><rect x="0" y="0" width="2" height="2" fill="#C8C4B4"/><rect x="1" y="1" width="2" height="2" fill="#fff"/><rect x="1" y="1" width="1" height="1" fill="#B8B4A4"/></svg><svg style="left:1014px;top:727px" width="3" height="3" viewBox="0 0 3 3" shape-rendering="crispEdges"><rect x="0" y="0" width="2" height="2" fill="#C8C4B4"/><rect x="1" y="1" width="2" height="2" fill="#fff"/><rect x="1" y="1" width="1" height="1" fill="#B8B4A4"/></svg><svg style="left:1018px;top:727px" width="3" height="3" viewBox="0 0 3 3" shape-rendering="crispEdges"><rect x="0" y="0" width="2" height="2" fill="#C8C4B4"/><rect x="1" y="1" width="2" height="2" fill="#fff"/><rect x="1" y="1" width="1" height="1" fill="#B8B4A4"/></svg><svg style="left:1010px;top:731px" width="3" height="3" viewBox="0 0 3 3" shape-rendering="crispEdges"><rect x="0" y="0" width="2" height="2" fill="#C8C4B4"/><rect x="1" y="1" width="2" height="2" fill="#fff"/><rect x="1" y="1" width="1" height="1" fill="#B8B4A4"/></svg><svg style="left:1014px;top:731px" width="3" height="3" viewBox="0 0 3 3" shape-rendering="crispEdges"><rect x="0" y="0" width="2" height="2" fill="#C8C4B4"/><rect x="1" y="1" width="2" height="2" fill="#fff"/><rect x="1" y="1" width="1" height="1" fill="#B8B4A4"/></svg><svg style="left:1018px;top:731px" width="3" height="3" viewBox="0 0 3 3" shape-rendering="crispEdges"><rect x="0" y="0" width="2" height="2" fill="#C8C4B4"/><rect x="1" y="1" width="2" height="2" fill="#fff"/><rect x="1" y="1" width="1" height="1" fill="#B8B4A4"/></svg></body></html>
